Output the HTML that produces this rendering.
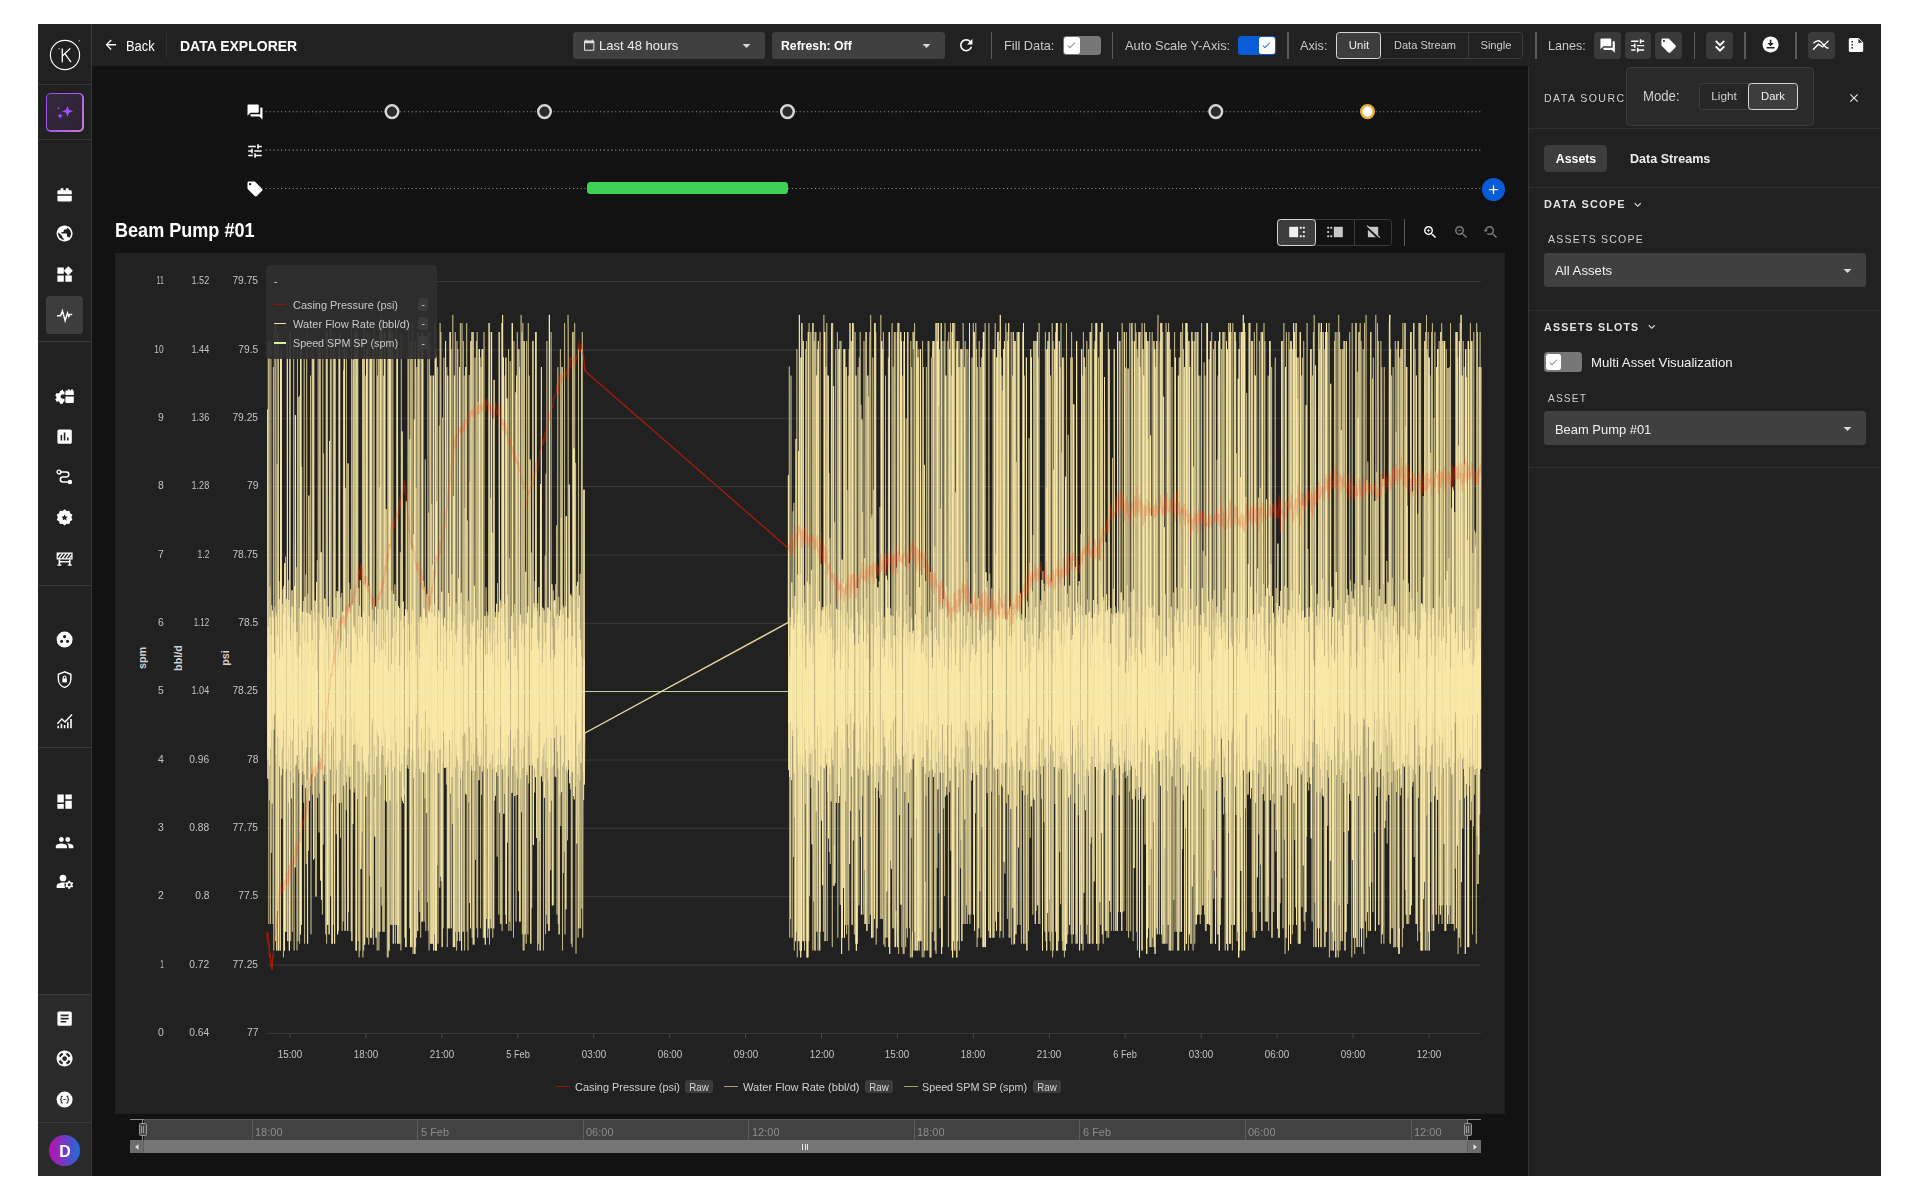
<!DOCTYPE html>
<html><head><meta charset="utf-8"><title>Data Explorer</title>
<style>
html,body{margin:0;padding:0;background:#fff;}
body{width:1920px;height:1200px;position:relative;overflow:hidden;font-family:"Liberation Sans", sans-serif;}
.a{position:absolute;}
.t{white-space:nowrap;line-height:1;}
svg{display:block;overflow:visible}
</style></head><body>
<div class="a" style="left:38.00px;top:24.00px;width:1843.00px;height:1152.00px;background:#121212;"></div>
<div class="a" style="left:38.00px;top:24.00px;width:53.50px;height:1152.00px;background:#212121;"></div>
<div class="a" style="left:91.30px;top:24.00px;width:1.00px;height:1152.00px;background:#383838;"></div>
<div class="a" style="left:92.30px;top:24.00px;width:1788.70px;height:42.00px;background:#212121;"></div>
<div class="a" style="left:1528.00px;top:66.00px;width:353.00px;height:1110.00px;background:#212121;"></div>
<div class="a" style="left:1527.60px;top:66.00px;width:1.00px;height:1110.00px;background:#333;"></div>
<svg class="a" style="left:46.7px;top:36.7px" width="36" height="36" viewBox="0 0 36 36" fill="none" stroke="#fff"><circle cx="18" cy="18" r="14.6" stroke-width="1.1"/><path d="M15.300 11.400V25.200M23.300 11.400L15.600 18.700M17.900 16.700L24 25.200" stroke-width="1.300"/><circle cx="12.200" cy="11.800" r="0.650" fill="#fff" stroke="none"/><circle cx="32.200" cy="3.800" r="0.700" fill="#bbb" stroke="none"/></svg>
<div class="a" style="left:38.00px;top:83.75px;width:53.00px;height:1.50px;background:#363636;"></div>
<div class="a" style="left:45.60px;top:92.80px;width:38.00px;height:39.00px;background:linear-gradient(120deg,#9a4cf5 0%,#a95be8 50%,#cc7fd2 100%);border-radius:5px;"></div>
<div class="a" style="left:47.10px;top:94.30px;width:35.00px;height:36.00px;background:linear-gradient(135deg,#35283f,#2b2431);border-radius:3.6px;"></div>
<svg class="a" style="left:52.55px;top:101.05px;" width="21.5" height="21.5" viewBox="0 0 24 24" fill="#a24dff"><path d="M16.2 5.2l1.6 4.6 4.6 1.6-4.6 1.6-1.6 4.6-1.6-4.6L10 11.4l4.600-1.600z"/><path d="M8 13.200l.9 2.500 2.500.9-2.500.9L8 20l-.9-2.500-2.500-.9 2.500-.9z"/><path d="M6.200 6.200l.5 1.300 1.300.5-1.300.5-.5 1.300-.5-1.300L4.400 8l1.300-.5z"/></svg>
<div class="a" style="left:38.00px;top:138.75px;width:53.00px;height:1.50px;background:#363636;"></div>
<div class="a" style="left:38.00px;top:341.00px;width:53.00px;height:1.00px;background:#383838;"></div>
<div class="a" style="left:38.00px;top:584.50px;width:53.00px;height:1.00px;background:#383838;"></div>
<div class="a" style="left:38.00px;top:747.00px;width:53.00px;height:1.00px;background:#383838;"></div>
<div class="a" style="left:38.00px;top:994.50px;width:53.30px;height:181.50px;background:#2a2a2a;"></div>
<div class="a" style="left:38.00px;top:994.00px;width:53.00px;height:1.00px;background:#3a3a3a;"></div>
<div class="a" style="left:38.00px;top:1121.70px;width:53.00px;height:1.00px;background:#3a3a3a;"></div>
<div class="a" style="left:45.80px;top:295.80px;width:37.40px;height:38.20px;background:#3d3d3d;border-radius:4px;"></div>
<svg class="a" style="left:55.10px;top:184.60px;" width="19.2" height="19.2" viewBox="0 0 24 24" fill="#fff"><path d="M7 4h3.500v2.500H13.500V4H17v2.500h2.500c.8 0 1.500.7 1.500 1.500v3.500H3V8c0-.8.7-1.500 1.500-1.500H7zM3 13.500h18V19c0 .8-.7 1.500-1.500 1.500h-15C3.700 20.500 3 19.800 3 19z"/></svg>
<svg class="a" style="left:55.10px;top:224.20px;" width="19.2" height="19.2" viewBox="0 0 24 24" fill="#fff"><path d="M12 2C6.48 2 2 6.48 2 12s4.48 10 10 10 10-4.48 10-10S17.52 2 12 2zm-1 17.93c-3.95-.49-7-3.85-7-7.93 0-.62.08-1.21.21-1.79L9 15v1c0 1.1.9 2 2 2v1.93zm6.9-2.54c-.26-.81-1-1.39-1.9-1.39h-1v-3c0-.55-.45-1-1-1H8v-2h2c.55 0 1-.45 1-1V7h2c1.1 0 2-.9 2-2v-.41c2.93 1.19 5 4.06 5 7.41 0 2.08-.8 3.97-2.1 5.39z"/></svg>
<svg class="a" style="left:55.10px;top:265.10px;" width="19.2" height="19.2" viewBox="0 0 24 24" fill="#fff"><path d="M13 13v8h8v-8h-8zM3 21h8v-8H3v8zM3 3v8h8V3H3zm13.66-1.31L11 7.34 16.66 13l5.66-5.66-5.66-5.65z"/></svg>
<svg class="a" style="left:55.10px;top:305.20px;" width="19.2" height="19.2" viewBox="0 0 24 24" fill="#fff"><path d="M2.500 13.500H7l2.300-6 3.400 12 3-9.500 1.600 4.200 1.200-2.200H21.500" fill="none" stroke="#fff" stroke-width="1.9" stroke-linejoin="miter" stroke-linecap="butt"/></svg>
<svg class="a" style="left:55.40px;top:386.70px;" width="19.2" height="19.2" viewBox="0 0 24 24" fill="#fff"><path d="M9.800 3.200l.5 2 .2.100c.5.200 1 .5 1.400.800V9.400H9.500a2.600 2.600 0 100 5.200h2.400v3.300c-.4.300-.9.600-1.400.800l-.2.100-.5 2H6.200l-.5-2c-.6-.200-1.100-.500-1.600-.900l-2 .6-1.800-3.100 1.500-1.400a6 6 0 010-1.900L.3 10.600l1.800-3.100 2 .6c.5-.4 1-.7 1.600-.9l.5-2z"/><path d="M14.500 4.500H16V3h2.500v1.500H20V3h2.500v1.500c.6 0 1 .4 1 1V10H13V5.500c0-.6.400-1 1-1zM13 11.800h10.500V19c0 .6-.4 1-1 1H14c-.6 0-1-.4-1-1z"/></svg>
<svg class="a" style="left:55.10px;top:427.30px;" width="19.2" height="19.2" viewBox="0 0 24 24" fill="#fff"><path d="M19 3H5c-1.1 0-2 .9-2 2v14c0 1.1.9 2 2 2h14c1.1 0 2-.9 2-2V5c0-1.1-.9-2-2-2zM9 17H7v-7h2v7zm4 0h-2V7h2v10zm4 0h-2v-4h2v4z"/></svg>
<svg class="a" style="left:55.10px;top:467.20px;" width="19.2" height="19.2" viewBox="0 0 24 24" fill="#fff"><path d="M6 6.300h8.200a3.100 3.100 0 010 6.200H9.800a3.100 3.100 0 000 6.200H17" fill="none" stroke="#fff" stroke-width="2"/><circle cx="5" cy="6.300" r="2.400" fill="none" stroke="#fff" stroke-width="1.700"/><circle cx="18.600" cy="18.700" r="2.900"/></svg>
<svg class="a" style="left:55.10px;top:508.30px;" width="19.2" height="19.2" viewBox="0 0 24 24" fill="#fff"><path fill-rule="evenodd" d="M12 1.500l2.600 2.200 3.400-.3 .9 3.300 2.900 1.800-1.300 3.200 1.300 3.200-2.900 1.800-.9 3.300-3.400-.3L12 22l-2.600-2.300-3.400.3-.9-3.300-2.900-1.800 1.300-3.200-1.300-3.200 2.900-1.800.9-3.300 3.400.3zM12 7.800l-1.200 2.700-2.900.3 2.200 1.900-.7 2.900 2.600-1.600 2.600 1.600-.7-2.900 2.200-1.900-2.900-.3z"/></svg>
<svg class="a" style="left:55.10px;top:548.50px;" width="19.2" height="19.2" viewBox="0 0 24 24" fill="#fff"><path fill-rule="evenodd" d="M2 4.500h20v8.500H2zM4 11.500l4.500-5.500H6.300L3.500 9.400v2.100zM8.300 11.500l4.500-5.500h-2.200l-4.500 5.500zM12.600 11.500l4.500-5.500h-2.200l-4.500 5.500zM16.900 11.500l3.600-4.400V6h-1.300l-4.500 5.500zM20.500 9.500l-1.600 2h1.600z"/><path d="M4.500 13h2v6.500h1.500v1.500h-5v-1.500h1.500zM17.500 13h2v6.500H21v1.500h-5v-1.500h1.500zM6.500 15h11v1.800h-11z"/></svg>
<svg class="a" style="left:55.10px;top:630.40px;" width="19.2" height="19.2" viewBox="0 0 24 24" fill="#fff"><path fill-rule="evenodd" d="M12 2a10 10 0 100 20 10 10 0 000-20zM12 6.200a2 2 0 110 4 2 2 0 010-4zM8.300 12.200a2 2 0 110 4 2 2 0 010-4zM15.700 12.200a2 2 0 110 4 2 2 0 010-4z"/></svg>
<svg class="a" style="left:55.10px;top:670.20px;" width="19.2" height="19.2" viewBox="0 0 24 24" fill="#fff"><path d="M12 2.300L4.200 5.300v6.200c0 4.700 3.300 9 7.800 10.200 4.500-1.200 7.800-5.500 7.800-10.200V5.300z" fill="none" stroke="#fff" stroke-width="1.800"/><path d="M9.200 10.500h5.600v5H9.200z"/><path d="M10.300 10.800V9.300a1.700 1.700 0 013.400 0v1.500" fill="none" stroke="#fff" stroke-width="1.300"/></svg>
<svg class="a" style="left:55.10px;top:711.00px;" width="19.2" height="19.2" viewBox="0 0 24 24" fill="#fff"><path d="M2.300 15.200l6.200-6.600 4 3.800 8.200-8.600 1.300 1.300-9.400 9.900-4-3.800-5 5.300z"/><path d="M3 18.500h2v3H3zM7 16h2v5.500H7zM11 17.500h2v4h-2zM15 14h2v7.500h-2zM19 10h2v11.500h-2z"/></svg>
<svg class="a" style="left:55.10px;top:791.70px;" width="19.2" height="19.2" viewBox="0 0 24 24" fill="#fff"><path d="M3 13h8V3H3v10zm0 8h8v-6H3v6zm10 0h8V11h-8v10zm0-18v6h8V3h-8z"/></svg>
<svg class="a" style="left:55.10px;top:832.60px;" width="19.2" height="19.2" viewBox="0 0 24 24" fill="#fff"><path d="M16 11c1.66 0 2.99-1.34 2.99-3S17.66 5 16 5c-1.66 0-3 1.34-3 3s1.34 3 3 3zm-8 0c1.66 0 2.99-1.34 2.99-3S9.66 5 8 5C6.34 5 5 6.34 5 8s1.34 3 3 3zm0 2c-2.33 0-7 1.17-7 3.5V19h14v-2.5c0-2.33-4.67-3.5-7-3.5zm8 0c-.29 0-.62.02-.97.05 1.16.84 1.97 1.97 1.97 3.45V19h6v-2.5c0-2.33-4.67-3.5-7-3.5z"/></svg>
<svg class="a" style="left:55.10px;top:872.30px;" width="19.2" height="19.2" viewBox="0 0 24 24" fill="#fff"><circle cx="10" cy="7.500" r="4.200"/><path d="M10 13.200c-3.300 0-8 1.500-8 4.300V20h10.700a6.300 6.300 0 01-.9-3.300c0-1.200.3-2.300 .9-3.200-.9-.2-1.900-.3-2.700-.3z"/><path fill-rule="evenodd" d="M22.800 17.400l-1.200-.7c.1-.500.1-1 0-1.400l1.200-.7-1.200-2.100-1.300.6c-.3-.3-.8-.6-1.200-.7L19 11h-2.400l-.2 1.400c-.4.100-.8.400-1.200.7l-1.300-.6-1.200 2.100 1.200.7c-.1.500-.1 1 0 1.400l-1.200.7 1.200 2.100 1.300-.6c.4.3.8.600 1.200.7l.2 1.400H19l.200-1.400c.4-.100.8-.4 1.200-.7l1.300.6zM17.800 17.800a1.800 1.800 0 110-3.600 1.800 1.800 0 010 3.600z"/></svg>
<svg class="a" style="left:55.10px;top:1008.90px;" width="19.2" height="19.2" viewBox="0 0 24 24" fill="#fff"><path d="M19 3H5c-1.1 0-2 .9-2 2v14c0 1.1.9 2 2 2h14c1.1 0 2-.9 2-2V5c0-1.1-.9-2-2-2zm-5 14H7v-2h7v2zm3-4H7v-2h10v2zm0-4H7V7h10v2z"/></svg>
<svg class="a" style="left:55.10px;top:1049.30px;" width="19.2" height="19.2" viewBox="0 0 24 24" fill="#fff"><path d="M12 2C6.48 2 2 6.48 2 12s4.48 10 10 10 10-4.48 10-10S17.52 2 12 2zm7.46 7.12l-2.78 1.15c-.51-1.36-1.58-2.44-2.95-2.94l1.15-2.78c2.1.8 3.77 2.47 4.58 4.57zM12 15c-1.66 0-3-1.34-3-3s1.34-3 3-3 3 1.34 3 3-1.34 3-3 3zM9.13 4.54l1.17 2.78c-1.38.5-2.47 1.59-2.98 2.97L4.54 9.13c.81-2.11 2.48-3.78 4.59-4.59zM4.54 14.87l2.78-1.15c.51 1.38 1.59 2.46 2.97 2.96l-1.17 2.78c-2.1-.81-3.77-2.48-4.58-4.59zm10.34 4.59l-1.15-2.78c1.37-.51 2.45-1.59 2.95-2.97l2.78 1.17c-.81 2.1-2.48 3.77-4.58 4.58z"/></svg>
<svg class="a" style="left:55.10px;top:1089.70px;" width="19.2" height="19.2" viewBox="0 0 24 24" fill="#fff"><path fill-rule="evenodd" d="M12 2a10 10 0 100 20 10 10 0 000-20zM9.800 7.200v1.200H9c-.3 0-.5.200-.5.500v1.600c0 .8-.4 1.300-1 1.500.6.200 1 .7 1 1.500v1.600c0 .3.200.5.500.5h.8v1.200H8.700c-.9 0-1.500-.6-1.500-1.500v-1.700c0-.6-.3-.9-.9-.9v-1.400c.6 0 .9-.3 .9-.9V8.700c0-.9.600-1.500 1.500-1.500zM14.200 7.200h1.100c.9 0 1.500.6 1.500 1.500v1.700c0 .6.300.9 .9.900v1.400c-.6 0-.9.300-.9.900v1.700c0 .9-.6 1.500-1.500 1.500h-1.100v-1.200h.8c.3 0 .5-.2.5-.5v-1.600c0-.8.400-1.300 1-1.500-.6-.2-1-.7-1-1.500V8.900c0-.3-.2-.5-.5-.5h-.8zM10 11.400h.9v1.200H10zM11.600 11.400h.9v1.200h-.9zM13.200 11.400h.9v1.200h-.9z"/></svg>
<div class="a" style="left:49.20px;top:1134.90px;width:30.80px;height:30.80px;background:linear-gradient(90deg,#b812b0 0%,#7a35c2 45%,#1a6fd8 100%);border-radius:16px;"></div>
<div class="a t" style="top:1143.00px;font-size:17px;color:#fff;font-weight:700;left:-235.40px;width:600px;text-align:center;transform:scaleX(0.9364);transform-origin:50% 50%;">D</div>
<svg class="a" style="left:103.25px;top:37.45px;" width="15.5" height="15.5" viewBox="0 0 24 24" fill="#fff"><path d="M20 11H7.83l5.59-5.59L12 4l-8 8 8 8 1.41-1.41L7.83 13H20v-2z"/></svg>
<div class="a t" style="top:38.86px;font-size:14px;color:#fff;left:126.30px;transform:scaleX(0.9221);transform-origin:0 50%;">Back</div>
<div class="a" style="left:166.20px;top:33.00px;width:1.00px;height:25.00px;background:#2e2e2e;"></div>
<div class="a t" style="top:38.57px;font-size:14.6px;color:#fff;font-weight:700;left:179.50px;transform:scaleX(0.9593);transform-origin:0 50%;">DATA EXPLORER</div>
<div class="a" style="left:572.80px;top:31.70px;width:192.00px;height:27.00px;background:#404040;border-radius:3.5px;"></div>
<svg class="a" style="left:583.00px;top:38.80px;" width="12.4" height="12.4" viewBox="0 0 24 24" fill="#e0e0e0"><path d="M20 3h-1V1h-2v2H7V1H5v2H4c-1.1 0-2 .9-2 2v16c0 1.1.9 2 2 2h16c1.1 0 2-.9 2-2V5c0-1.1-.9-2-2-2zm0 18H4V8h16v13z"/></svg>
<div class="a t" style="top:39.15px;font-size:13.4px;color:#eee;left:598.70px;transform:scaleX(0.9771);transform-origin:0 50%;">Last 48 hours</div>
<svg class="a" style="left:736.50px;top:35.90px;" width="19" height="19" viewBox="0 0 24 24" fill="#d8d8d8"><path d="M7 10l5 5 5-5z"/></svg>
<div class="a" style="left:772.20px;top:31.70px;width:172.80px;height:27.00px;background:#404040;border-radius:3.5px;"></div>
<div class="a t" style="top:39.15px;font-size:13.4px;color:#fff;font-weight:700;left:781.20px;transform:scaleX(0.9148);transform-origin:0 50%;">Refresh: Off</div>
<svg class="a" style="left:917.00px;top:35.90px;" width="19" height="19" viewBox="0 0 24 24" fill="#d8d8d8"><path d="M7 10l5 5 5-5z"/></svg>
<svg class="a" style="left:957.25px;top:35.55px;" width="18.5" height="18.5" viewBox="0 0 24 24" fill="#fff"><path d="M17.65 6.35C16.2 4.9 14.21 4 12 4c-4.42 0-7.99 3.58-7.99 8s3.57 8 7.99 8c3.73 0 6.84-2.55 7.73-6h-2.08c-.82 2.33-3.04 4-5.65 4-3.31 0-6-2.69-6-6s2.69-6 6-6c1.66 0 3.14.69 4.22 1.78L13 11h7V4l-2.35 2.35z"/></svg>
<div class="a" style="left:990.65px;top:32.00px;width:1.70px;height:26.70px;background:#5b5b5b;"></div>
<div class="a t" style="top:39.15px;font-size:13.4px;color:#c8c8c8;left:1003.80px;transform:scaleX(0.9538);transform-origin:0 50%;">Fill Data:</div>
<div class="a" style="left:1062.50px;top:35.50px;width:38.00px;height:19.50px;background:#777;border-radius:3.5px;"></div>
<div class="a" style="left:1063.90px;top:36.80px;width:15.80px;height:16.80px;background:#fff;border-radius:2.5px;"></div>
<svg class="a" style="left:1066.45px;top:39.95px;" width="10.5" height="10.5" viewBox="0 0 24 24" fill="#777"><path d="M9 16.17L4.83 12l-1.42 1.41L9 19 21 7l-1.410-1.410z"/></svg>
<div class="a" style="left:1111.65px;top:32.00px;width:1.70px;height:26.70px;background:#5b5b5b;"></div>
<div class="a t" style="top:39.15px;font-size:13.4px;color:#c8c8c8;left:1124.50px;transform:scaleX(0.9614);transform-origin:0 50%;">Auto Scale Y-Axis:</div>
<div class="a" style="left:1238.00px;top:35.50px;width:38.20px;height:19.50px;background:#0a5bd8;border-radius:3.5px;"></div>
<div class="a" style="left:1258.80px;top:36.80px;width:15.80px;height:16.80px;background:#fff;border-radius:2.5px;"></div>
<svg class="a" style="left:1261.45px;top:39.95px;" width="10.5" height="10.5" viewBox="0 0 24 24" fill="#0a5bd8"><path d="M9 16.17L4.83 12l-1.42 1.41L9 19 21 7l-1.410-1.410z"/></svg>
<div class="a" style="left:1287.45px;top:32.00px;width:1.70px;height:26.70px;background:#5b5b5b;"></div>
<div class="a t" style="top:39.15px;font-size:13.4px;color:#c8c8c8;left:1300.00px;transform:scaleX(0.9473);transform-origin:0 50%;">Axis:</div>
<div class="a" style="left:1335.80px;top:31.70px;width:187.70px;height:27.00px;border-radius:3.5px;border:1px solid #3c3c3c;box-sizing:border-box;"></div>
<div class="a" style="left:1467.50px;top:32.00px;width:1.00px;height:26.40px;background:#3c3c3c;"></div>
<div class="a" style="left:1335.80px;top:31.70px;width:45.60px;height:27.00px;background:#3d3d3d;border-radius:3.5px;border:1.2px solid #d6d6d6;box-sizing:border-box;"></div>
<div class="a t" style="top:39.13px;font-size:11.6px;color:#eee;left:1058.50px;width:600px;text-align:center;transform:scaleX(0.9842);transform-origin:50% 50%;">Unit</div>
<div class="a t" style="top:39.13px;font-size:11.6px;color:#ccc;left:1124.50px;width:600px;text-align:center;transform:scaleX(0.9525);transform-origin:50% 50%;">Data Stream</div>
<div class="a t" style="top:39.13px;font-size:11.6px;color:#ccc;left:1195.80px;width:600px;text-align:center;transform:scaleX(0.9679);transform-origin:50% 50%;">Single</div>
<div class="a" style="left:1535.15px;top:32.00px;width:1.70px;height:26.70px;background:#5b5b5b;"></div>
<div class="a t" style="top:39.15px;font-size:13.4px;color:#c8c8c8;left:1548.30px;transform:scaleX(0.9374);transform-origin:0 50%;">Lanes:</div>
<div class="a" style="left:1594.20px;top:32.00px;width:26.80px;height:26.60px;background:#3a3a3a;border-radius:4px;"></div>
<svg class="a" style="left:1598.95px;top:36.65px;" width="17.3" height="17.3" viewBox="0 0 24 24" fill="#fff"><path d="M21 6h-2v9H6v2c0 .55.45 1 1 1h11l4 4V7c0-.55-.45-1-1-1zm-4 6V3c0-.55-.45-1-1-1H3c-.55 0-1 .45-1 1v14l4-4h10c.55 0 1-.45 1-1z"/></svg>
<div class="a" style="left:1624.70px;top:32.00px;width:26.80px;height:26.60px;background:#3a3a3a;border-radius:4px;"></div>
<svg class="a" style="left:1629.45px;top:36.65px;" width="17.3" height="17.3" viewBox="0 0 24 24" fill="#fff"><path d="M3 17v2h6v-2H3zM3 5v2h10V5H3zm10 16v-2h8v-2h-8v-2h-2v6h2zM7 9v2H3v2h4v2h2V9H7zm14 4v-2H11v2h10zm-6-4h2V7h4V5h-4V3h-2v6z"/></svg>
<div class="a" style="left:1655.30px;top:32.00px;width:26.80px;height:26.60px;background:#3a3a3a;border-radius:4px;"></div>
<svg class="a" style="left:1660.05px;top:36.65px;" width="17.3" height="17.3" viewBox="0 0 24 24" fill="#fff"><path d="M21.41 11.58l-9-9C12.05 2.22 11.55 2 11 2H4c-1.1 0-2 .9-2 2v7c0 .55.22 1.05.59 1.42l9 9c.36.36.86.58 1.41.58.55 0 1.05-.22 1.41-.59l7-7c.37-.36.59-.86.59-1.41 0-.55-.23-1.06-.59-1.42zM5.5 7C4.67 7 4 6.33 4 5.5S4.67 4 5.5 4 7 4.67 7 5.5 6.33 7 5.5 7z"/></svg>
<div class="a" style="left:1693.55px;top:32.00px;width:1.70px;height:26.70px;background:#5b5b5b;"></div>
<div class="a" style="left:1706.30px;top:32.00px;width:26.80px;height:26.60px;background:#3a3a3a;border-radius:4px;"></div>
<svg class="a" style="left:1709.60px;top:37.60px" width="20" height="16" viewBox="-10.0 -8.0 20 16"><path d="M-4.300 -5.100L0 -0.800L4.300 -5.100M-4.300 0.300L0 4.600L4.300 0.300" fill="none" stroke="#fff" stroke-width="1.850"/></svg>
<div class="a" style="left:1744.35px;top:32.00px;width:1.70px;height:26.70px;background:#5b5b5b;"></div>
<svg class="a" style="left:1760.80px;top:35.40px;" width="19.2" height="19.2" viewBox="0 0 24 24" fill="#fff"><path d="M12 2C6.49 2 2 6.49 2 12s4.49 10 10 10 10-4.49 10-10S17.51 2 12 2zm-1 8V6h2v4h3l-4 4-4-4h3zm6 7H7v-2h10v2z"/></svg>
<div class="a" style="left:1794.95px;top:32.00px;width:1.70px;height:26.70px;background:#5b5b5b;"></div>
<div class="a" style="left:1808.00px;top:32.00px;width:26.80px;height:26.60px;background:#3a3a3a;border-radius:4px;"></div>
<svg class="a" style="left:1811.40px;top:37.30px" width="20" height="16" viewBox="-10.0 -8.0 20 16"><path d="M-7.600 -1.600C-5 -4.600 -2 -5.200 0.600 -2.400S4.600 3.100 7.600 3.200" fill="none" stroke="#fff" stroke-width="1.350"/><path d="M-8 4.800L-2.500 -0.800L1.500 1.800L7.600 -4.400" fill="none" stroke="#fff" stroke-width="1.350"/></svg>
<svg class="a" style="left:1846.20px;top:37.10px" width="20" height="16" viewBox="-10.0 -8.0 20 16"><path d="M-5.700 -7.100H2.700L7.200 -2.600V5.600a1.500 1.500 0 0 1 -1.500 1.500H-5.700a1.500 1.500 0 0 1 -1.500 -1.500V-5.600a1.500 1.500 0 0 1 1.500 -1.500z" fill="#fff"/><path d="M2.300 -6.300V-2.200H6.300z" fill="#2a2a2a"/><g fill="#3a3a3a"><rect x="-4.600" y="-4" width="1.600" height="1.600"/><rect x="-4.600" y="-1" width="1.600" height="1.600"/><rect x="-4.600" y="2" width="1.600" height="1.600"/></g></svg>
<svg class="a" style="left:0;top:0" width="1920" height="1200"><line x1="265.8" x2="1481.5" y1="111.8" y2="111.8" stroke="#969696" stroke-width="1.05" stroke-dasharray="1.05 2.79"/></svg>
<svg class="a" style="left:0;top:0" width="1920" height="1200"><line x1="265.8" x2="1481.5" y1="150.1" y2="150.1" stroke="#969696" stroke-width="1.05" stroke-dasharray="1.05 2.79"/></svg>
<svg class="a" style="left:0;top:0" width="1920" height="1200"><line x1="265.8" x2="1481.5" y1="188.4" y2="188.4" stroke="#969696" stroke-width="1.05" stroke-dasharray="1.05 2.79"/></svg>
<svg class="a" style="left:246.00px;top:103.00px;" width="18" height="18" viewBox="0 0 24 24" fill="#fff"><path d="M21 6h-2v9H6v2c0 .55.45 1 1 1h11l4 4V7c0-.55-.45-1-1-1zm-4 6V3c0-.55-.45-1-1-1H3c-.55 0-1 .45-1 1v14l4-4h10c.55 0 1-.45 1-1z"/></svg>
<svg class="a" style="left:246.00px;top:141.60px;" width="18" height="18" viewBox="0 0 24 24" fill="#fff"><path d="M3 17v2h6v-2H3zM3 5v2h10V5H3zm10 16v-2h8v-2h-8v-2h-2v6h2zM7 9v2H3v2h4v2h2V9H7zm14 4v-2H11v2h10zm-6-4h2V7h4V5h-4V3h-2v6z"/></svg>
<svg class="a" style="left:246.00px;top:179.60px;" width="18" height="18" viewBox="0 0 24 24" fill="#fff"><path d="M21.41 11.58l-9-9C12.05 2.22 11.55 2 11 2H4c-1.1 0-2 .9-2 2v7c0 .55.22 1.05.59 1.42l9 9c.36.36.86.58 1.41.58.55 0 1.05-.22 1.41-.59l7-7c.37-.36.59-.86.59-1.41 0-.55-.23-1.06-.59-1.42zM5.5 7C4.67 7 4 6.33 4 5.5S4.67 4 5.5 4 7 4.67 7 5.5 6.33 7 5.5 7z"/></svg>
<svg class="a" style="left:0;top:0" width="1920" height="1200"><circle cx="392" cy="111.600" r="6.300" fill="#2b2b2b" stroke="#d6d6d6" stroke-width="2.500"/><circle cx="544.5" cy="111.600" r="6.300" fill="#2b2b2b" stroke="#d6d6d6" stroke-width="2.500"/><circle cx="787.5" cy="111.600" r="6.300" fill="#2b2b2b" stroke="#d6d6d6" stroke-width="2.500"/><circle cx="1215.8" cy="111.600" r="6.300" fill="#2b2b2b" stroke="#d6d6d6" stroke-width="2.500"/><circle cx="1367.500" cy="111.600" r="6.300" fill="#fff" stroke="#e7ab3c" stroke-width="2.500"/></svg>
<div class="a" style="left:587.00px;top:182.20px;width:201.00px;height:12.00px;background:#3dd158;border-radius:3.5px;"></div>
<div class="a" style="left:1481.60px;top:177.50px;width:23.40px;height:23.40px;background:#0a5bd8;border-radius:12px;"></div>
<svg class="a" style="left:1485.80px;top:181.80px;" width="15" height="15" viewBox="0 0 24 24" fill="#fff"><path d="M19 13h-6v6h-2v-6H5v-2h6V5h2v6h6v2z"/></svg>
<div class="a t" style="top:220.73px;font-size:19.6px;color:#fff;font-weight:700;left:115.00px;transform:scaleX(0.9216);transform-origin:0 50%;">Beam Pump #01</div>
<div class="a" style="left:1277.20px;top:219.00px;width:115.20px;height:26.70px;border-radius:3.5px;border:1px solid #3c3c3c;box-sizing:border-box;"></div>
<div class="a" style="left:1353.70px;top:219.50px;width:1.00px;height:25.70px;background:#3c3c3c;"></div>
<div class="a" style="left:1277.20px;top:219.00px;width:39.00px;height:26.70px;background:#3d3d3d;border-radius:3.5px;border:1.2px solid #d6d6d6;box-sizing:border-box;"></div>
<svg class="a" style="left:1286.60px;top:224.20px" width="20" height="16" viewBox="-10.0 -8.0 20 16"><rect x="-7.800" y="-5.200" width="9" height="10.400" fill="#efefef"/><rect x="2.80" y="-5.20" width="1.9" height="1.9" fill="#efefef"/><rect x="5.90" y="-5.20" width="1.9" height="1.9" fill="#efefef"/><rect x="5.90" y="-0.95" width="1.9" height="1.9" fill="#efefef"/><rect x="2.80" y="3.30" width="1.9" height="1.9" fill="#efefef"/><rect x="5.90" y="3.30" width="1.9" height="1.9" fill="#efefef"/></svg>
<svg class="a" style="left:1324.80px;top:224.20px" width="20" height="16" viewBox="-10.0 -8.0 20 16"><rect x="-1.200" y="-5.200" width="9" height="10.400" fill="#c8c8c8"/><rect x="-4.70" y="-5.20" width="1.9" height="1.9" fill="#c8c8c8"/><rect x="-7.80" y="-5.20" width="1.9" height="1.9" fill="#c8c8c8"/><rect x="-7.80" y="-0.95" width="1.9" height="1.9" fill="#c8c8c8"/><rect x="-4.70" y="3.30" width="1.9" height="1.9" fill="#c8c8c8"/><rect x="-7.80" y="3.30" width="1.9" height="1.9" fill="#c8c8c8"/></svg>
<svg class="a" style="left:1363.40px;top:224.20px" width="20" height="16" viewBox="-10.0 -8.0 20 16"><rect x="-5.100" y="-5.200" width="10.300" height="10.400" fill="#c8c8c8"/><path d="M-6.800 -5.300L6.300 6.900" stroke="#141414" stroke-width="2.100" fill="none"/><path d="M-5.900 -6.300L6.900 5.700" stroke="#c8c8c8" stroke-width="1.150" fill="none"/></svg>
<div class="a" style="left:1403.55px;top:219.00px;width:1.70px;height:26.70px;background:#5b5b5b;"></div>
<svg class="a" style="left:1421.95px;top:224.35px;" width="16.5" height="16.5" viewBox="0 0 24 24" fill="#fff"><path d="M15.5 14h-.79l-.28-.27C15.41 12.59 16 11.11 16 9.5 16 5.91 13.09 3 9.5 3S3 5.91 3 9.5 5.91 16 9.5 16c1.61 0 3.09-.59 4.23-1.57l.27.28v.79l5 4.99L20.49 19l-4.99-5zm-6 0C7.01 14 5 11.99 5 9.5S7.01 5 9.5 5 14 7.01 14 9.5 11.99 14 9.5 14zm2.5-4h-2v2H9v-2H7V9h2V7h1v2h2v1z"/></svg>
<svg class="a" style="left:1452.55px;top:224.35px;" width="16.5" height="16.5" viewBox="0 0 24 24" fill="#7a7a7a"><path d="M15.5 14h-.79l-.28-.27C15.41 12.59 16 11.11 16 9.5 16 5.91 13.09 3 9.5 3S3 5.91 3 9.5 5.91 16 9.5 16c1.61 0 3.09-.59 4.23-1.57l.27.28v.79l5 4.99L20.49 19l-4.99-5zm-6 0C7.01 14 5 11.99 5 9.5S7.01 5 9.5 5 14 7.01 14 9.5 11.99 14 9.5 14zM7 9h5v1H7z"/></svg>
<svg class="a" style="left:1483.35px;top:224.35px;" width="16.5" height="16.5" viewBox="0 0 24 24" fill="#7a7a7a"><path d="M15.500 14h-.79l-.28-.27A6.470 6.470 0 0016 9.500 6.500 6.500 0 009.500 3C6.100 3 3.300 5.600 3 9h2c.3-2.300 2.200-4 4.500-4C11.990 5 14 7.010 14 9.500S11.990 14 9.500 14c-.9 0-1.800-.3-2.500-.8L5.600 14.600A6.500 6.500 0 0013.730 14.430l.27.280v.790l5 4.990L20.490 19z"/><path d="M.8 8.200h6.400L4 12z"/></svg>
<div class="a" style="left:115.00px;top:252.50px;width:1390.00px;height:861.50px;background:#212121;"></div>
<svg class="a" style="left:0;top:0" width="1920" height="1200" viewBox="0 0 1920 1200">
<line x1="267" x2="1481" y1="1033.4" y2="1033.4" stroke="#3b3b3b" stroke-width="1"/>
<line x1="267" x2="1481" y1="965.1" y2="965.1" stroke="#3b3b3b" stroke-width="1"/>
<line x1="267" x2="1481" y1="896.7" y2="896.7" stroke="#3b3b3b" stroke-width="1"/>
<line x1="267" x2="1481" y1="828.4" y2="828.4" stroke="#3b3b3b" stroke-width="1"/>
<line x1="267" x2="1481" y1="760.0" y2="760.0" stroke="#3b3b3b" stroke-width="1"/>
<line x1="267" x2="1481" y1="691.7" y2="691.7" stroke="#3b3b3b" stroke-width="1"/>
<line x1="267" x2="1481" y1="623.3" y2="623.3" stroke="#3b3b3b" stroke-width="1"/>
<line x1="267" x2="1481" y1="555.0" y2="555.0" stroke="#3b3b3b" stroke-width="1"/>
<line x1="267" x2="1481" y1="486.6" y2="486.6" stroke="#3b3b3b" stroke-width="1"/>
<line x1="267" x2="1481" y1="418.3" y2="418.3" stroke="#3b3b3b" stroke-width="1"/>
<line x1="267" x2="1481" y1="349.9" y2="349.9" stroke="#3b3b3b" stroke-width="1"/>
<line x1="267" x2="1481" y1="281.6" y2="281.6" stroke="#3b3b3b" stroke-width="1"/>
<line x1="290.0" x2="290.0" y1="1033.400" y2="1038" stroke="#4a4a4a" stroke-width="1"/>
<line x1="365.9" x2="365.9" y1="1033.400" y2="1038" stroke="#4a4a4a" stroke-width="1"/>
<line x1="441.9" x2="441.9" y1="1033.400" y2="1038" stroke="#4a4a4a" stroke-width="1"/>
<line x1="517.8" x2="517.8" y1="1033.400" y2="1038" stroke="#4a4a4a" stroke-width="1"/>
<line x1="593.7" x2="593.7" y1="1033.400" y2="1038" stroke="#4a4a4a" stroke-width="1"/>
<line x1="669.7" x2="669.7" y1="1033.400" y2="1038" stroke="#4a4a4a" stroke-width="1"/>
<line x1="745.6" x2="745.6" y1="1033.400" y2="1038" stroke="#4a4a4a" stroke-width="1"/>
<line x1="821.5" x2="821.5" y1="1033.400" y2="1038" stroke="#4a4a4a" stroke-width="1"/>
<line x1="897.4" x2="897.4" y1="1033.400" y2="1038" stroke="#4a4a4a" stroke-width="1"/>
<line x1="973.4" x2="973.4" y1="1033.400" y2="1038" stroke="#4a4a4a" stroke-width="1"/>
<line x1="1049.3" x2="1049.3" y1="1033.400" y2="1038" stroke="#4a4a4a" stroke-width="1"/>
<line x1="1125.2" x2="1125.2" y1="1033.400" y2="1038" stroke="#4a4a4a" stroke-width="1"/>
<line x1="1201.2" x2="1201.2" y1="1033.400" y2="1038" stroke="#4a4a4a" stroke-width="1"/>
<line x1="1277.1" x2="1277.1" y1="1033.400" y2="1038" stroke="#4a4a4a" stroke-width="1"/>
<line x1="1353.0" x2="1353.0" y1="1033.400" y2="1038" stroke="#4a4a4a" stroke-width="1"/>
<line x1="1429.0" x2="1429.0" y1="1033.400" y2="1038" stroke="#4a4a4a" stroke-width="1"/>
<defs><filter id="sb" x="0" y="0" width="100%" height="100%" filterUnits="userSpaceOnUse"><feGaussianBlur stdDeviation="0.38 0"/></filter></defs><g filter="url(#sb)"><polyline fill="none" stroke="rgba(150,24,9,0.5)" stroke-width="1.1" stroke-linejoin="bevel" points="267.0,932.0 267.4,940.4 267.8,933.3 268.3,944.7 268.7,941.8 269.1,944.7 269.5,957.6 270.0,953.0 270.4,955.4 270.8,962.1 271.2,967.1 271.6,965.1 272.1,970.0 272.5,959.1 272.9,957.9 273.3,953.6 273.8,945.7 274.2,940.9 274.6,936.4 275.0,938.8 275.4,935.0 275.9,930.3 276.3,928.0 276.7,917.6 277.1,919.2 277.6,916.6 278.0,914.8 278.4,903.6 278.8,901.6 279.2,890.2 279.7,893.0 280.1,882.0 280.5,884.9 280.9,895.6 281.3,880.1 281.8,892.9 282.2,890.2 282.6,886.7 283.0,889.5 283.5,889.2 283.9,890.9 284.3,884.5 284.7,882.2 285.1,881.6 285.6,879.2 286.0,882.8 286.4,878.8 286.8,886.6 287.3,872.7 287.7,875.6 288.1,875.4 288.5,868.8 288.9,885.4 289.4,864.6 289.8,872.8 290.2,870.3 290.6,878.7 291.1,860.9 291.5,873.2 291.9,863.7 292.3,864.9 292.7,861.2 293.2,865.7 293.6,856.3 294.0,859.6 294.4,860.2 294.9,865.4 295.3,844.9 295.7,861.2 296.1,857.2 296.5,849.4 297.0,851.5 297.4,846.2 297.8,853.9 298.2,845.6 298.7,841.8 299.1,839.9 299.5,838.2 299.9,836.4 300.3,831.4 300.8,842.8 301.2,823.1 301.6,813.6 302.0,827.5 302.4,825.5 302.9,826.0 303.3,821.6 303.7,820.0 304.1,820.3 304.6,821.3 305.0,813.1 305.4,810.9 305.8,818.7 306.2,809.7 306.7,800.3 307.1,812.6 307.5,803.1 307.9,794.3 308.4,789.1 308.8,793.1 309.2,785.5 309.6,781.8 310.0,778.2 310.5,779.1 310.9,783.8 311.3,774.3 311.7,767.1 312.2,774.9 312.6,772.1 313.0,775.4 313.4,776.8 313.8,770.5 314.3,770.4 314.7,770.7 315.1,765.7 315.5,773.6 316.0,776.6 316.4,771.0 316.8,769.0 317.2,768.7 317.6,766.2 318.1,766.0 318.5,767.6 318.9,765.4 319.3,767.1 319.8,761.8 320.2,770.3 320.6,768.8 321.0,763.2 321.4,757.9 321.9,768.0 322.3,769.9 322.7,757.1 323.1,753.7 323.5,748.8 324.0,749.8 324.4,738.2 324.8,742.2 325.2,731.8 325.7,732.8 326.1,724.3 326.5,718.6 326.9,708.4 327.3,707.4 327.8,704.8 328.2,704.4 328.6,698.0 329.0,689.2 329.5,689.7 329.9,687.8 330.3,679.6 330.7,675.8 331.1,673.5 331.6,676.4 332.0,672.7 332.4,663.6 332.8,667.0 333.3,660.6 333.7,656.9 334.1,663.4 334.5,659.0 334.9,649.6 335.4,650.7 335.8,650.1 336.2,642.5 336.6,642.3 337.1,643.4 337.5,629.9 337.9,636.9 338.3,636.2 338.7,632.7 339.2,621.9 339.6,626.9 340.0,619.1 340.4,625.0 340.9,624.6 341.3,622.3 341.7,617.4 342.1,617.6 342.5,623.5 343.0,615.1 343.4,620.8 343.8,620.4 344.2,616.3 344.6,627.7 345.1,616.7 345.5,625.5 345.9,606.2 346.3,604.7 346.8,618.6 347.2,616.5 347.6,611.7 348.0,612.3 348.4,603.5 348.9,608.6 349.3,606.3 349.7,609.4 350.1,613.5 350.6,608.0 351.0,607.8 351.4,601.3 351.8,600.8 352.2,601.5 352.7,598.1 353.1,603.3 353.5,592.0 353.9,602.8 354.4,588.2 354.8,595.7 355.2,585.7 355.6,594.9 356.0,586.4 356.5,585.9 356.9,585.8 357.3,577.9 357.7,574.4 358.2,568.3 358.6,581.2 359.0,570.9 359.4,569.7 359.8,570.5 360.3,579.5 360.7,563.7 361.1,573.6 361.5,571.6 362.0,576.7 362.4,567.1 362.8,574.4 363.2,580.9 363.6,585.0 364.1,586.1 364.5,576.0 364.9,581.0 365.3,581.2 365.7,576.5 366.2,577.1 366.6,587.9 367.0,586.5 367.4,585.7 367.9,592.8 368.3,583.7 368.7,591.5 369.1,590.1 369.5,590.7 370.0,594.1 370.4,593.6 370.8,595.0 371.2,595.9 371.7,604.4 372.1,595.2 372.5,602.1 372.9,601.2 373.3,597.8 373.8,603.9 374.2,597.4 374.6,607.4 375.0,599.3 375.5,600.1 375.9,603.1 376.3,604.7 376.7,604.4 377.1,603.7 377.6,598.0 378.0,594.0 378.4,600.1 378.8,598.3 379.3,592.0 379.7,600.0 380.1,595.9 380.5,590.0 380.9,595.7 381.4,587.0 381.8,588.4 382.2,592.5 382.6,581.1 383.1,585.7 383.5,576.8 383.9,583.6 384.3,574.4 384.7,575.8 385.2,565.6 385.6,568.2 386.0,571.4 386.4,566.6 386.8,553.7 387.3,563.5 387.7,560.7 388.1,552.4 388.5,557.9 389.0,544.1 389.4,545.9 389.8,548.6 390.2,546.9 390.6,544.2 391.1,530.9 391.5,525.2 391.9,532.3 392.3,522.5 392.8,527.0 393.2,520.4 393.6,529.6 394.0,527.1 394.4,524.6 394.9,520.8 395.3,519.6 395.7,516.7 396.1,518.4 396.6,516.4 397.0,516.0 397.4,510.6 397.8,519.7 398.2,511.1 398.7,514.7 399.1,513.1 399.5,501.8 399.9,496.8 400.4,508.7 400.8,499.9 401.2,500.7 401.6,497.8 402.0,498.2 402.5,490.8 402.9,494.4 403.3,491.4 403.7,492.0 404.2,480.2 404.6,493.1 405.0,489.5 405.4,484.1 405.8,492.6 406.3,500.0 406.7,506.6 407.1,507.8 407.5,518.0 407.9,515.8 408.4,515.2 408.8,520.6 409.2,531.0 409.6,528.8 410.1,539.1 410.5,542.0 410.9,542.2 411.3,546.2 411.7,542.9 412.2,545.8 412.6,545.3 413.0,547.3 413.4,545.1 413.9,551.8 414.3,551.6 414.7,552.1 415.1,561.0 415.5,563.6 416.0,561.2 416.4,570.1 416.8,569.4 417.2,571.1 417.7,564.9 418.1,562.1 418.5,572.5 418.9,572.6 419.3,575.7 419.8,575.5 420.2,580.5 420.6,574.7 421.0,580.2 421.5,574.4 421.9,569.2 422.3,578.9 422.7,589.0 423.1,576.0 423.6,589.5 424.0,583.1 424.4,585.7 424.8,589.0 425.3,591.1 425.7,587.1 426.1,593.4 426.5,596.1 426.9,599.2 427.4,593.4 427.8,605.1 428.2,608.0 428.6,611.6 429.0,596.0 429.5,604.1 429.9,596.3 430.3,604.7 430.7,602.8 431.2,592.4 431.6,587.7 432.0,593.0 432.4,592.2 432.8,583.1 433.3,582.8 433.7,569.9 434.1,575.4 434.5,576.5 435.0,573.8 435.4,577.6 435.8,562.6 436.2,554.9 436.6,564.3 437.1,557.0 437.5,559.2 437.9,559.3 438.3,556.9 438.8,558.8 439.2,556.6 439.6,541.1 440.0,546.5 440.4,553.9 440.9,541.3 441.3,545.6 441.7,539.2 442.1,535.7 442.6,542.8 443.0,538.6 443.4,530.9 443.8,534.3 444.2,522.4 444.7,523.2 445.1,528.2 445.5,520.1 445.9,510.9 446.4,513.5 446.8,508.8 447.2,508.8 447.6,503.1 448.0,493.4 448.5,488.2 448.9,485.6 449.3,480.9 449.7,484.3 450.1,481.2 450.6,477.3 451.0,470.2 451.4,464.6 451.8,466.9 452.3,458.5 452.7,458.4 453.1,447.0 453.5,449.8 453.9,455.4 454.4,441.6 454.8,436.7 455.2,440.9 455.6,448.4 456.1,446.6 456.5,437.7 456.9,436.4 457.3,437.3 457.7,432.9 458.2,436.5 458.6,434.2 459.0,428.1 459.4,431.4 459.9,432.1 460.3,428.6 460.7,426.7 461.1,435.1 461.5,438.8 462.0,428.2 462.4,426.8 462.8,430.2 463.2,426.2 463.7,422.9 464.1,431.9 464.5,420.2 464.9,420.9 465.3,420.4 465.8,418.6 466.2,420.8 466.6,423.7 467.0,426.8 467.5,422.6 467.9,419.0 468.3,412.4 468.7,417.0 469.1,412.3 469.6,415.4 470.0,419.4 470.4,415.7 470.8,413.7 471.2,411.0 471.7,414.1 472.1,414.5 472.5,409.6 472.9,411.3 473.4,417.4 473.8,405.7 474.2,411.0 474.6,407.6 475.0,419.6 475.5,415.1 475.9,414.5 476.3,413.8 476.7,413.1 477.2,412.9 477.6,404.3 478.0,412.4 478.4,413.7 478.8,404.4 479.3,414.4 479.7,413.4 480.1,403.4 480.5,407.9 481.0,408.5 481.4,407.3 481.8,411.2 482.2,403.5 482.6,408.0 483.1,409.9 483.5,411.9 483.9,408.7 484.3,407.2 484.8,411.2 485.2,398.9 485.6,411.9 486.0,406.1 486.4,401.6 486.9,405.1 487.3,398.9 487.7,398.2 488.1,406.2 488.6,404.5 489.0,411.5 489.4,404.5 489.8,402.9 490.2,404.7 490.7,417.0 491.1,409.6 491.5,407.0 491.9,405.6 492.3,405.3 492.8,409.8 493.2,412.7 493.6,416.3 494.0,416.5 494.5,412.8 494.9,408.9 495.3,408.2 495.7,402.0 496.1,408.0 496.6,414.8 497.0,411.6 497.4,415.1 497.8,407.6 498.3,418.0 498.7,415.5 499.1,414.6 499.5,416.5 499.9,404.9 500.4,413.5 500.8,413.2 501.2,426.6 501.6,418.8 502.1,418.6 502.5,425.9 502.9,418.5 503.3,430.9 503.7,422.5 504.2,426.6 504.6,424.0 505.0,432.9 505.4,420.7 505.9,434.8 506.3,429.2 506.7,434.4 507.1,430.1 507.5,437.5 508.0,438.4 508.4,441.4 508.8,441.3 509.2,443.8 509.7,446.6 510.1,441.5 510.5,439.1 510.9,439.8 511.3,449.7 511.8,446.1 512.2,453.7 512.6,450.3 513.0,446.7 513.4,456.4 513.9,462.2 514.3,453.8 514.7,451.5 515.1,453.1 515.6,462.0 516.0,456.5 516.4,458.5 516.8,464.5 517.2,462.6 517.7,464.2 518.1,462.4 518.5,463.1 518.9,467.9 519.4,469.0 519.8,472.1 520.2,468.6 520.6,474.2 521.0,476.6 521.5,476.7 521.9,480.7 522.3,484.4 522.7,482.6 523.2,483.9 523.6,481.0 524.0,488.6 524.4,488.5 524.8,489.4 525.3,488.8 525.7,497.0 526.1,507.7 526.5,499.9 527.0,500.2 527.4,500.8 527.8,494.9 528.2,496.8 528.6,492.1 529.1,490.9 529.5,493.6 529.9,492.3 530.3,489.5 530.8,485.2 531.2,488.7 531.6,481.3 532.0,488.4 532.4,482.1 532.9,482.4 533.3,484.7 533.7,482.4 534.1,472.8 534.5,476.2 535.0,477.7 535.4,469.9 535.8,462.7 536.2,472.0 536.7,470.8 537.1,471.4 537.5,467.4 537.9,465.0 538.3,463.0 538.8,465.6 539.2,459.0 539.6,456.8 540.0,450.1 540.5,455.4 540.9,447.9 541.3,450.5 541.7,436.1 542.1,445.2 542.6,442.1 543.0,438.9 543.4,445.2 543.8,439.6 544.3,435.6 544.7,432.3 545.1,441.6 545.5,434.9 545.9,433.0 546.4,425.0 546.8,432.8 547.2,427.8 547.6,422.6 548.1,421.7 548.5,413.3 548.9,422.0 549.3,412.6 549.7,419.8 550.2,412.5 550.6,410.2 551.0,413.1 551.4,411.0 551.9,403.5 552.3,406.7 552.7,408.3 553.1,403.0 553.5,396.6 554.0,400.1 554.4,395.3 554.8,395.6 555.2,396.9 555.6,395.0 556.1,392.8 556.5,384.9 556.9,392.4 557.3,388.4 557.8,386.0 558.2,387.1 558.6,393.5 559.0,377.6 559.4,374.7 559.9,383.9 560.3,376.0 560.7,384.8 561.1,373.9 561.6,375.5 562.0,380.8 562.4,380.5 562.8,377.8 563.2,377.2 563.7,373.9 564.1,371.9 564.5,372.3 564.9,378.3 565.4,375.1 565.8,371.4 566.2,372.1 566.6,373.8 567.0,374.7 567.5,368.2 567.9,367.8 568.3,369.0 568.7,378.6 569.2,367.4 569.6,371.3 570.0,358.1 570.4,368.0 570.8,357.2 571.3,357.9 571.7,359.1 572.1,360.6 572.5,361.3 573.0,361.3 573.4,359.9 573.8,356.2 574.2,369.0 574.6,358.4 575.1,358.9 575.5,364.2 575.9,358.7 576.3,356.2 576.7,354.3 577.2,360.4 577.6,346.5 578.0,346.3 578.4,350.5 578.9,340.0 579.3,344.8 579.7,352.6 580.1,345.2 580.5,348.6 581.0,351.7 581.4,344.1 581.8,351.2 582.2,347.9 582.7,346.6 583.1,351.5 583.5,356.5 583.9,359.0 584.3,361.8 585.0,371.0 788.0,548.0 788.4,550.6 788.8,543.5 789.3,548.6 789.7,552.0 790.1,547.7 790.5,555.3 791.0,537.6 791.4,543.8 791.8,537.9 792.2,536.8 792.6,540.5 793.1,542.8 793.5,543.7 793.9,543.8 794.3,555.3 794.8,545.2 795.2,527.5 795.6,539.6 796.0,533.3 796.4,533.5 796.9,545.8 797.3,534.5 797.7,521.9 798.1,537.2 798.6,532.5 799.0,525.8 799.4,527.7 799.8,530.0 800.2,534.4 800.7,531.8 801.1,535.5 801.5,548.0 801.9,529.8 802.3,529.9 802.8,534.0 803.2,543.6 803.6,531.2 804.0,546.4 804.5,527.4 804.9,529.5 805.3,536.6 805.7,531.1 806.1,533.0 806.6,540.7 807.0,542.8 807.4,538.7 807.8,536.2 808.3,547.7 808.7,541.3 809.1,537.1 809.5,547.4 809.9,532.8 810.4,540.5 810.8,544.1 811.2,539.6 811.6,535.9 812.1,542.5 812.5,536.5 812.9,536.3 813.3,533.5 813.7,550.0 814.2,537.4 814.6,549.8 815.0,544.9 815.4,540.9 815.9,547.9 816.3,545.7 816.7,545.2 817.1,535.2 817.5,545.8 818.0,552.1 818.4,549.8 818.8,553.8 819.2,557.8 819.7,550.8 820.1,562.2 820.5,538.3 820.9,547.8 821.3,532.3 821.8,556.2 822.2,551.7 822.6,563.3 823.0,549.5 823.4,539.0 823.9,563.2 824.3,545.9 824.7,547.5 825.1,556.2 825.6,562.9 826.0,556.1 826.4,562.0 826.8,548.6 827.2,575.0 827.7,563.5 828.1,565.8 828.5,570.2 828.9,568.3 829.4,569.6 829.8,562.8 830.2,569.6 830.6,574.5 831.0,579.9 831.5,572.8 831.9,575.4 832.3,577.7 832.7,579.8 833.2,577.7 833.6,574.9 834.0,573.6 834.4,585.5 834.8,580.1 835.3,578.7 835.7,603.3 836.1,585.6 836.5,585.9 837.0,581.4 837.4,573.7 837.8,589.2 838.2,581.1 838.6,582.6 839.1,589.8 839.5,590.2 839.9,585.2 840.3,584.2 840.8,599.2 841.2,588.9 841.6,578.2 842.0,591.1 842.4,587.4 842.9,587.0 843.3,592.0 843.7,589.3 844.1,602.0 844.5,589.1 845.0,589.2 845.4,595.4 845.8,583.1 846.2,593.9 846.7,586.1 847.1,594.6 847.5,580.1 847.9,588.8 848.3,574.4 848.8,582.3 849.2,585.3 849.6,588.4 850.0,598.5 850.5,597.3 850.9,574.9 851.3,578.7 851.7,592.5 852.1,586.6 852.6,573.8 853.0,586.5 853.4,575.0 853.8,576.6 854.3,573.6 854.7,580.4 855.1,597.7 855.5,584.3 855.9,580.7 856.4,598.8 856.8,577.7 857.2,579.6 857.6,578.6 858.1,583.1 858.5,577.7 858.9,589.8 859.3,577.4 859.7,583.1 860.2,580.5 860.6,572.7 861.0,571.6 861.4,577.8 861.9,561.9 862.3,577.7 862.7,577.9 863.1,578.1 863.5,576.3 864.0,579.1 864.4,573.9 864.8,580.6 865.2,564.5 865.6,582.0 866.1,569.2 866.5,578.5 866.9,571.6 867.3,571.6 867.8,568.8 868.2,583.5 868.6,566.3 869.0,565.2 869.4,574.9 869.9,574.9 870.3,573.1 870.7,565.9 871.1,567.8 871.6,578.4 872.0,564.6 872.4,575.8 872.8,576.4 873.2,572.0 873.7,562.3 874.1,583.9 874.5,571.2 874.9,571.4 875.4,567.2 875.8,562.9 876.2,567.4 876.6,570.4 877.0,562.9 877.5,569.3 877.9,576.3 878.3,571.1 878.7,567.1 879.2,574.8 879.6,573.7 880.0,573.3 880.4,561.2 880.8,553.8 881.3,571.8 881.7,566.4 882.1,563.2 882.5,568.9 883.0,562.1 883.4,560.7 883.8,577.3 884.2,553.4 884.6,570.1 885.1,571.1 885.5,576.2 885.9,565.5 886.3,567.2 886.7,557.2 887.2,563.7 887.6,548.7 888.0,559.3 888.4,562.9 888.9,562.3 889.3,559.5 889.7,570.9 890.1,551.6 890.5,563.5 891.0,559.6 891.4,562.6 891.8,562.6 892.2,575.6 892.7,554.5 893.1,571.2 893.5,571.5 893.9,560.7 894.3,557.2 894.8,552.8 895.2,555.3 895.6,575.4 896.0,546.0 896.5,564.1 896.9,556.0 897.3,573.9 897.7,562.8 898.1,551.1 898.6,556.8 899.0,561.6 899.4,561.0 899.8,553.5 900.3,557.9 900.7,556.6 901.1,563.0 901.5,561.4 901.9,560.9 902.4,555.1 902.8,564.5 903.2,554.9 903.6,552.9 904.1,555.5 904.5,556.1 904.9,556.1 905.3,544.6 905.7,567.4 906.2,562.1 906.6,566.8 907.0,554.7 907.4,562.5 907.8,558.5 908.3,557.2 908.7,569.4 909.1,552.6 909.5,560.5 910.0,544.3 910.4,560.2 910.8,554.9 911.2,548.9 911.6,551.9 912.1,541.2 912.5,548.6 912.9,557.2 913.3,537.6 913.8,563.5 914.2,562.8 914.6,550.8 915.0,545.7 915.4,546.3 915.9,547.1 916.3,550.8 916.7,571.2 917.1,548.1 917.6,561.3 918.0,564.7 918.4,549.4 918.8,554.1 919.2,560.7 919.7,551.4 920.1,564.7 920.5,571.0 920.9,555.7 921.4,550.3 921.8,560.2 922.2,558.7 922.6,551.9 923.0,557.0 923.5,559.3 923.9,563.1 924.3,568.3 924.7,557.7 925.2,552.8 925.6,551.4 926.0,576.4 926.4,561.4 926.8,562.2 927.3,583.1 927.7,574.5 928.1,583.1 928.5,567.0 928.9,564.2 929.4,566.1 929.8,575.2 930.2,574.3 930.6,575.0 931.1,588.8 931.5,583.3 931.9,567.0 932.3,578.5 932.7,580.3 933.2,571.8 933.6,594.0 934.0,585.0 934.4,590.0 934.9,576.5 935.3,573.0 935.7,587.0 936.1,581.2 936.5,579.3 937.0,583.5 937.4,586.4 937.8,586.8 938.2,585.1 938.7,590.6 939.1,608.5 939.5,597.3 939.9,586.4 940.3,605.1 940.8,588.3 941.2,581.8 941.6,583.8 942.0,580.1 942.5,603.3 942.9,588.4 943.3,587.0 943.7,593.9 944.1,597.3 944.6,590.9 945.0,596.5 945.4,601.4 945.8,606.8 946.3,596.5 946.7,608.0 947.1,606.8 947.5,609.7 947.9,603.0 948.4,599.4 948.8,615.2 949.2,612.8 949.6,603.5 950.0,602.3 950.5,612.2 950.9,621.0 951.3,608.9 951.7,623.6 952.2,607.6 952.6,607.4 953.0,607.9 953.4,611.7 953.8,593.0 954.3,604.1 954.7,611.5 955.1,591.2 955.5,603.4 956.0,606.5 956.4,612.8 956.8,611.3 957.2,599.6 957.6,613.9 958.1,591.1 958.5,588.6 958.9,607.4 959.3,602.3 959.8,589.2 960.2,604.4 960.6,602.5 961.0,601.1 961.4,592.4 961.9,586.1 962.3,582.8 962.7,592.7 963.1,592.7 963.6,589.8 964.0,589.1 964.4,599.1 964.8,584.2 965.2,586.5 965.7,605.3 966.1,586.4 966.5,586.0 966.9,597.5 967.4,578.9 967.8,605.0 968.2,586.6 968.6,591.8 969.0,590.6 969.5,594.9 969.9,598.5 970.3,612.2 970.7,607.2 971.1,618.6 971.6,614.1 972.0,599.7 972.4,608.4 972.8,603.7 973.3,604.8 973.7,608.5 974.1,610.0 974.5,610.3 974.9,592.0 975.4,605.7 975.8,603.3 976.2,619.4 976.6,604.4 977.1,605.7 977.5,605.7 977.9,611.0 978.3,597.2 978.7,604.2 979.2,604.1 979.6,604.9 980.0,603.3 980.4,601.4 980.9,605.9 981.3,596.0 981.7,616.8 982.1,605.4 982.5,592.8 983.0,603.7 983.4,612.4 983.8,604.4 984.2,604.8 984.7,589.8 985.1,616.1 985.5,606.5 985.9,592.3 986.3,603.1 986.8,616.6 987.2,609.1 987.6,596.0 988.0,602.6 988.5,608.4 988.9,621.3 989.3,608.5 989.7,612.1 990.1,604.6 990.6,606.9 991.0,599.2 991.4,596.7 991.8,596.1 992.2,601.3 992.7,614.0 993.1,604.6 993.5,613.0 993.9,609.8 994.4,605.1 994.8,600.2 995.2,618.6 995.6,611.2 996.0,611.7 996.5,620.2 996.9,613.0 997.3,603.7 997.7,604.5 998.2,605.5 998.6,617.1 999.0,593.8 999.4,588.5 999.8,598.2 1000.3,602.0 1000.7,598.2 1001.1,609.2 1001.5,607.2 1002.0,603.1 1002.4,604.2 1002.8,617.5 1003.2,618.5 1003.6,617.0 1004.1,602.4 1004.5,614.1 1004.9,597.6 1005.3,593.1 1005.8,618.5 1006.2,612.9 1006.6,611.9 1007.0,617.5 1007.4,619.5 1007.9,610.1 1008.3,610.4 1008.7,613.1 1009.1,615.0 1009.6,610.0 1010.0,599.1 1010.4,625.9 1010.8,602.8 1011.2,603.6 1011.7,611.8 1012.1,607.1 1012.5,610.9 1012.9,623.9 1013.3,616.8 1013.8,603.2 1014.2,608.6 1014.6,605.6 1015.0,614.7 1015.5,599.3 1015.9,598.6 1016.3,593.3 1016.7,608.5 1017.1,607.4 1017.6,609.5 1018.0,610.2 1018.4,595.5 1018.8,601.1 1019.3,595.9 1019.7,612.0 1020.1,608.9 1020.5,591.4 1020.9,604.1 1021.4,599.9 1021.8,598.6 1022.2,601.4 1022.6,591.0 1023.1,591.8 1023.5,588.0 1023.9,586.8 1024.3,582.8 1024.7,597.1 1025.2,591.8 1025.6,584.7 1026.0,573.5 1026.4,599.8 1026.9,582.8 1027.3,583.3 1027.7,586.1 1028.1,593.2 1028.5,578.6 1029.0,563.8 1029.4,577.8 1029.8,579.5 1030.2,575.2 1030.7,589.1 1031.1,575.3 1031.5,580.3 1031.9,571.9 1032.3,582.6 1032.8,572.0 1033.2,582.3 1033.6,577.1 1034.0,576.9 1034.4,577.6 1034.9,563.7 1035.3,571.4 1035.7,575.7 1036.1,571.1 1036.6,581.8 1037.0,579.2 1037.4,567.5 1037.8,580.5 1038.2,570.3 1038.7,575.4 1039.1,579.9 1039.5,563.9 1039.9,566.4 1040.4,572.1 1040.8,571.3 1041.2,561.6 1041.6,578.5 1042.0,575.4 1042.5,576.0 1042.9,577.2 1043.3,580.5 1043.7,570.1 1044.2,578.6 1044.6,573.7 1045.0,573.8 1045.4,571.5 1045.8,586.5 1046.3,561.3 1046.7,573.8 1047.1,584.1 1047.5,577.4 1048.0,575.5 1048.4,587.9 1048.8,574.4 1049.2,579.4 1049.6,584.7 1050.1,578.4 1050.5,578.0 1050.9,581.7 1051.3,587.7 1051.8,573.9 1052.2,583.7 1052.6,579.1 1053.0,576.7 1053.4,569.4 1053.9,590.4 1054.3,581.8 1054.7,579.3 1055.1,574.8 1055.5,587.9 1056.0,571.6 1056.4,568.7 1056.8,569.8 1057.2,574.6 1057.7,576.7 1058.1,560.1 1058.5,575.7 1058.9,575.1 1059.3,580.3 1059.8,570.1 1060.2,582.3 1060.6,585.6 1061.0,567.3 1061.5,568.9 1061.9,577.3 1062.3,578.5 1062.7,569.7 1063.1,577.4 1063.6,558.1 1064.0,575.3 1064.4,571.5 1064.8,574.3 1065.3,571.1 1065.7,572.1 1066.1,563.9 1066.5,576.4 1066.9,551.7 1067.4,567.8 1067.8,561.2 1068.2,578.9 1068.6,557.0 1069.1,565.4 1069.5,564.1 1069.9,569.5 1070.3,563.5 1070.7,555.7 1071.2,561.9 1071.6,570.7 1072.0,567.5 1072.4,556.9 1072.9,553.0 1073.3,552.5 1073.7,560.6 1074.1,560.0 1074.5,558.4 1075.0,557.0 1075.4,561.8 1075.8,569.5 1076.2,567.1 1076.6,556.8 1077.1,565.2 1077.5,557.7 1077.9,568.2 1078.3,566.2 1078.8,565.4 1079.2,574.2 1079.6,565.7 1080.0,564.6 1080.4,567.8 1080.9,550.5 1081.3,555.3 1081.7,554.9 1082.1,563.2 1082.6,557.2 1083.0,548.0 1083.4,551.2 1083.8,554.9 1084.2,552.8 1084.7,552.5 1085.1,545.1 1085.5,556.0 1085.9,545.7 1086.4,551.7 1086.8,549.8 1087.2,551.7 1087.6,563.6 1088.0,550.2 1088.5,550.1 1088.9,535.2 1089.3,546.1 1089.7,553.7 1090.2,549.5 1090.6,556.9 1091.0,549.0 1091.4,556.4 1091.8,552.3 1092.3,557.7 1092.7,547.9 1093.1,555.8 1093.5,545.9 1094.0,543.5 1094.4,556.6 1094.8,538.6 1095.2,541.5 1095.6,559.2 1096.1,548.6 1096.5,549.7 1096.9,548.3 1097.3,546.2 1097.7,560.0 1098.2,546.1 1098.6,555.5 1099.0,545.1 1099.4,539.4 1099.9,541.5 1100.3,542.8 1100.7,559.6 1101.1,536.4 1101.5,542.8 1102.0,528.0 1102.4,541.8 1102.8,536.1 1103.2,538.9 1103.7,535.8 1104.1,531.1 1104.5,533.9 1104.9,532.5 1105.3,538.9 1105.8,530.2 1106.2,528.8 1106.6,519.6 1107.0,533.9 1107.5,525.5 1107.9,519.3 1108.3,533.1 1108.7,530.2 1109.1,522.6 1109.6,522.1 1110.0,511.4 1110.4,503.1 1110.8,519.6 1111.3,507.2 1111.7,521.2 1112.1,513.2 1112.5,516.4 1112.9,509.9 1113.4,515.6 1113.8,517.2 1114.2,511.7 1114.6,515.6 1115.1,515.2 1115.5,508.2 1115.9,496.8 1116.3,512.6 1116.7,503.4 1117.2,499.8 1117.6,493.6 1118.0,493.6 1118.4,514.7 1118.8,517.3 1119.3,513.7 1119.7,518.0 1120.1,489.8 1120.5,508.0 1121.0,492.4 1121.4,492.3 1121.8,507.5 1122.2,510.3 1122.6,497.9 1123.1,493.4 1123.5,494.4 1123.9,504.6 1124.3,512.8 1124.8,521.2 1125.2,510.9 1125.6,501.1 1126.0,501.3 1126.4,509.8 1126.9,514.5 1127.3,496.4 1127.7,513.1 1128.1,507.3 1128.6,518.2 1129.0,501.2 1129.4,519.2 1129.8,521.9 1130.2,521.3 1130.7,521.7 1131.1,511.1 1131.5,510.4 1131.9,501.4 1132.4,508.4 1132.8,502.5 1133.2,511.8 1133.6,512.2 1134.0,505.5 1134.5,517.0 1134.9,496.0 1135.3,500.9 1135.7,516.3 1136.2,502.3 1136.6,509.1 1137.0,486.7 1137.4,515.3 1137.8,500.1 1138.3,500.6 1138.7,512.5 1139.1,506.3 1139.5,493.9 1139.9,515.8 1140.4,499.9 1140.8,504.3 1141.2,502.5 1141.6,504.2 1142.1,504.6 1142.5,505.4 1142.9,504.8 1143.3,525.9 1143.7,510.7 1144.2,513.1 1144.6,504.9 1145.0,522.0 1145.4,513.4 1145.9,510.6 1146.3,506.3 1146.7,516.1 1147.1,498.6 1147.5,506.1 1148.0,508.8 1148.4,514.0 1148.8,512.8 1149.2,501.5 1149.7,515.9 1150.1,508.5 1150.5,507.7 1150.9,512.2 1151.3,508.9 1151.8,507.9 1152.2,508.2 1152.6,515.5 1153.0,511.0 1153.5,512.1 1153.9,505.8 1154.3,518.5 1154.7,511.0 1155.1,504.9 1155.6,517.5 1156.0,500.3 1156.4,504.7 1156.8,515.2 1157.3,506.4 1157.7,507.1 1158.1,506.7 1158.5,509.2 1158.9,512.2 1159.4,513.1 1159.8,504.0 1160.2,505.2 1160.6,494.7 1161.0,504.9 1161.5,511.5 1161.9,508.3 1162.3,516.2 1162.7,506.0 1163.2,509.6 1163.6,513.6 1164.0,499.6 1164.4,516.9 1164.8,497.6 1165.3,505.3 1165.7,494.2 1166.1,504.9 1166.5,499.8 1167.0,513.3 1167.4,492.4 1167.8,509.6 1168.2,508.8 1168.6,510.0 1169.1,512.9 1169.5,511.7 1169.9,499.5 1170.3,509.9 1170.8,500.4 1171.2,500.7 1171.6,503.3 1172.0,501.7 1172.4,500.9 1172.9,512.1 1173.3,505.6 1173.7,492.3 1174.1,500.3 1174.6,502.6 1175.0,522.1 1175.4,508.4 1175.8,503.4 1176.2,510.5 1176.7,491.8 1177.1,518.7 1177.5,506.0 1177.9,502.1 1178.4,514.8 1178.8,503.9 1179.2,502.1 1179.6,515.7 1180.0,524.1 1180.5,508.3 1180.9,510.5 1181.3,510.6 1181.7,514.6 1182.1,509.2 1182.6,513.3 1183.0,507.3 1183.4,512.2 1183.8,519.1 1184.3,503.3 1184.7,519.1 1185.1,526.4 1185.5,510.1 1185.9,512.5 1186.4,516.2 1186.8,515.5 1187.2,508.6 1187.6,522.2 1188.1,521.1 1188.5,524.2 1188.9,522.4 1189.3,513.6 1189.7,517.1 1190.2,514.2 1190.6,536.7 1191.0,516.5 1191.4,525.6 1191.9,530.1 1192.3,519.1 1192.7,521.5 1193.1,522.7 1193.5,531.0 1194.0,511.6 1194.4,521.9 1194.8,523.0 1195.2,523.1 1195.7,514.4 1196.1,526.3 1196.5,523.3 1196.9,513.1 1197.3,512.7 1197.8,533.7 1198.2,515.7 1198.6,509.1 1199.0,522.8 1199.5,512.4 1199.9,519.8 1200.3,523.4 1200.7,513.6 1201.1,510.3 1201.6,532.8 1202.0,510.9 1202.4,511.9 1202.8,519.8 1203.2,522.9 1203.7,519.4 1204.1,513.8 1204.5,526.2 1204.9,512.3 1205.4,514.3 1205.8,524.5 1206.2,527.0 1206.6,523.1 1207.0,526.2 1207.5,522.7 1207.9,525.5 1208.3,515.1 1208.7,514.9 1209.2,523.9 1209.6,526.9 1210.0,517.1 1210.4,514.8 1210.8,519.0 1211.3,527.4 1211.7,519.4 1212.1,518.2 1212.5,518.9 1213.0,517.9 1213.4,523.5 1213.8,517.1 1214.2,520.8 1214.6,518.4 1215.1,514.6 1215.5,520.2 1215.9,522.0 1216.3,508.1 1216.8,521.6 1217.2,521.6 1217.6,519.1 1218.0,512.8 1218.4,515.5 1218.9,524.6 1219.3,513.9 1219.7,526.8 1220.1,517.2 1220.6,522.4 1221.0,499.4 1221.4,523.7 1221.8,521.2 1222.2,508.9 1222.7,526.8 1223.1,516.7 1223.5,511.9 1223.9,529.5 1224.3,529.5 1224.8,527.2 1225.2,525.8 1225.6,527.8 1226.0,508.0 1226.5,519.0 1226.9,529.6 1227.3,524.0 1227.7,520.9 1228.1,518.3 1228.6,517.7 1229.0,514.8 1229.4,519.3 1229.8,500.6 1230.3,527.2 1230.7,520.1 1231.1,500.3 1231.5,520.1 1231.9,521.5 1232.4,519.2 1232.8,524.7 1233.2,525.4 1233.6,524.0 1234.1,508.1 1234.5,504.9 1234.9,514.2 1235.3,525.6 1235.7,506.4 1236.2,515.7 1236.6,515.2 1237.0,518.1 1237.4,508.0 1237.9,522.8 1238.3,517.0 1238.7,525.1 1239.1,519.6 1239.5,518.4 1240.0,525.5 1240.4,527.4 1240.8,521.9 1241.2,513.3 1241.7,520.6 1242.1,525.4 1242.5,523.4 1242.9,529.2 1243.3,525.9 1243.8,515.2 1244.2,532.4 1244.6,522.5 1245.0,522.4 1245.4,518.9 1245.9,508.9 1246.3,503.5 1246.7,521.8 1247.1,524.1 1247.6,528.7 1248.0,511.1 1248.4,516.2 1248.8,513.3 1249.2,521.2 1249.7,511.4 1250.1,510.8 1250.5,506.2 1250.9,515.1 1251.4,523.0 1251.8,507.7 1252.2,513.0 1252.6,525.8 1253.0,510.4 1253.5,501.4 1253.9,509.1 1254.3,521.2 1254.7,515.7 1255.2,509.0 1255.6,510.8 1256.0,523.8 1256.4,505.6 1256.8,524.7 1257.3,512.1 1257.7,518.8 1258.1,507.4 1258.5,508.6 1259.0,531.2 1259.4,513.4 1259.8,507.6 1260.2,517.9 1260.6,509.4 1261.1,507.3 1261.5,508.0 1261.9,510.2 1262.3,523.2 1262.8,502.4 1263.2,516.6 1263.6,502.3 1264.0,517.6 1264.4,509.9 1264.9,517.7 1265.3,511.5 1265.7,519.7 1266.1,517.9 1266.5,515.9 1267.0,517.4 1267.4,509.6 1267.8,510.2 1268.2,507.2 1268.7,516.5 1269.1,515.1 1269.5,511.3 1269.9,504.4 1270.3,511.7 1270.8,515.4 1271.2,517.4 1271.6,507.5 1272.0,516.7 1272.5,503.2 1272.9,508.4 1273.3,504.0 1273.7,512.8 1274.1,504.9 1274.6,505.9 1275.0,518.1 1275.4,518.0 1275.8,499.1 1276.3,518.0 1276.7,516.4 1277.1,516.8 1277.5,507.1 1277.9,519.5 1278.4,514.2 1278.8,500.6 1279.2,495.1 1279.6,502.5 1280.1,512.9 1280.5,532.2 1280.9,500.1 1281.3,512.8 1281.7,510.2 1282.2,510.2 1282.6,513.5 1283.0,516.0 1283.4,509.3 1283.9,520.9 1284.3,514.1 1284.7,516.7 1285.1,516.8 1285.5,501.6 1286.0,519.4 1286.4,501.6 1286.8,508.9 1287.2,505.9 1287.6,501.5 1288.1,506.9 1288.5,496.7 1288.9,511.3 1289.3,506.3 1289.8,502.1 1290.2,507.9 1290.6,508.8 1291.0,505.5 1291.4,493.2 1291.9,509.3 1292.3,508.0 1292.7,519.6 1293.1,521.9 1293.6,513.8 1294.0,509.4 1294.4,508.3 1294.8,502.2 1295.2,502.4 1295.7,499.1 1296.1,499.8 1296.5,498.5 1296.9,513.3 1297.4,516.4 1297.8,484.4 1298.2,504.1 1298.6,489.3 1299.0,493.8 1299.5,502.3 1299.9,501.6 1300.3,525.2 1300.7,503.9 1301.2,496.9 1301.6,492.3 1302.0,506.4 1302.4,497.1 1302.8,499.8 1303.3,492.8 1303.7,510.5 1304.1,505.4 1304.5,510.2 1305.0,498.2 1305.4,502.4 1305.8,499.2 1306.2,494.4 1306.6,505.6 1307.1,488.6 1307.5,496.6 1307.9,492.0 1308.3,501.3 1308.7,490.0 1309.2,498.9 1309.6,493.6 1310.0,496.0 1310.4,496.0 1310.9,512.4 1311.3,491.7 1311.7,506.8 1312.1,495.0 1312.5,517.9 1313.0,498.6 1313.4,503.9 1313.8,486.7 1314.2,506.6 1314.7,495.1 1315.1,490.0 1315.5,495.5 1315.9,506.3 1316.3,490.2 1316.8,495.5 1317.2,502.1 1317.6,500.9 1318.0,486.4 1318.5,482.0 1318.9,499.5 1319.3,495.8 1319.7,497.3 1320.1,498.6 1320.6,491.7 1321.0,495.8 1321.4,486.5 1321.8,488.5 1322.3,490.9 1322.7,485.4 1323.1,487.9 1323.5,500.4 1323.9,487.9 1324.4,494.0 1324.8,489.6 1325.2,478.6 1325.6,492.3 1326.1,473.6 1326.5,489.3 1326.9,485.4 1327.3,479.8 1327.7,490.4 1328.2,482.2 1328.6,498.8 1329.0,472.3 1329.4,494.5 1329.8,491.3 1330.3,487.4 1330.7,475.4 1331.1,474.8 1331.5,468.6 1332.0,484.9 1332.4,481.1 1332.8,489.1 1333.2,484.1 1333.6,486.5 1334.1,470.8 1334.5,482.8 1334.9,484.5 1335.3,488.9 1335.8,462.9 1336.2,489.2 1336.6,468.6 1337.0,482.1 1337.4,483.1 1337.9,496.7 1338.3,486.1 1338.7,482.9 1339.1,476.8 1339.6,476.2 1340.0,473.3 1340.4,481.4 1340.8,477.3 1341.2,491.9 1341.7,476.3 1342.1,489.5 1342.5,482.7 1342.9,478.4 1343.4,485.4 1343.8,471.6 1344.2,487.4 1344.6,484.9 1345.0,481.5 1345.5,487.4 1345.9,489.6 1346.3,492.8 1346.7,486.7 1347.2,482.7 1347.6,490.3 1348.0,473.7 1348.4,498.4 1348.8,484.7 1349.3,490.1 1349.7,498.3 1350.1,482.7 1350.5,485.4 1350.9,489.7 1351.4,482.2 1351.8,496.2 1352.2,476.5 1352.6,485.9 1353.1,491.4 1353.5,490.9 1353.9,485.7 1354.3,500.1 1354.7,499.7 1355.2,490.4 1355.6,495.4 1356.0,481.3 1356.4,497.0 1356.9,492.1 1357.3,495.7 1357.7,494.9 1358.1,492.2 1358.5,489.8 1359.0,480.0 1359.4,477.9 1359.8,481.2 1360.2,495.6 1360.7,491.1 1361.1,485.6 1361.5,485.0 1361.9,494.9 1362.3,489.3 1362.8,501.0 1363.2,487.2 1363.6,482.6 1364.0,475.0 1364.5,484.2 1364.9,492.6 1365.3,479.5 1365.7,494.4 1366.1,494.3 1366.6,481.1 1367.0,492.7 1367.4,480.0 1367.8,490.6 1368.3,486.4 1368.7,494.2 1369.1,482.4 1369.5,488.3 1369.9,493.3 1370.4,486.1 1370.8,486.9 1371.2,484.3 1371.6,496.7 1372.0,491.3 1372.5,494.9 1372.9,495.8 1373.3,493.0 1373.7,492.5 1374.2,485.3 1374.6,489.2 1375.0,493.1 1375.4,480.1 1375.8,481.7 1376.3,493.6 1376.7,500.3 1377.1,491.6 1377.5,488.1 1378.0,497.8 1378.4,494.2 1378.8,496.9 1379.2,492.4 1379.6,488.1 1380.1,492.0 1380.5,496.4 1380.9,493.3 1381.3,474.4 1381.8,497.0 1382.2,481.9 1382.6,476.3 1383.0,475.8 1383.4,486.4 1383.9,467.8 1384.3,474.8 1384.7,484.3 1385.1,487.5 1385.6,493.6 1386.0,482.6 1386.4,477.1 1386.8,476.4 1387.2,486.9 1387.7,482.1 1388.1,483.2 1388.5,475.9 1388.9,474.5 1389.4,475.7 1389.8,481.5 1390.2,482.2 1390.6,490.0 1391.0,484.0 1391.5,480.0 1391.9,487.4 1392.3,468.4 1392.7,473.2 1393.1,482.5 1393.6,484.6 1394.0,478.6 1394.4,467.7 1394.8,468.0 1395.3,479.3 1395.7,480.8 1396.1,463.4 1396.5,474.0 1396.9,476.4 1397.4,484.0 1397.8,484.2 1398.2,473.3 1398.6,469.5 1399.1,474.6 1399.5,471.4 1399.9,470.5 1400.3,479.9 1400.7,475.4 1401.2,457.1 1401.6,474.7 1402.0,478.2 1402.4,466.0 1402.9,486.3 1403.3,479.0 1403.7,477.0 1404.1,473.5 1404.5,484.9 1405.0,485.8 1405.4,473.5 1405.8,462.7 1406.2,488.4 1406.7,479.2 1407.1,466.3 1407.5,489.1 1407.9,463.7 1408.3,477.8 1408.8,472.1 1409.2,473.2 1409.6,484.0 1410.0,500.5 1410.5,478.8 1410.9,494.4 1411.3,479.7 1411.7,478.5 1412.1,485.9 1412.6,472.0 1413.0,496.2 1413.4,478.8 1413.8,474.1 1414.2,483.2 1414.7,481.9 1415.1,478.3 1415.5,486.4 1415.9,494.7 1416.4,481.9 1416.8,478.3 1417.2,490.0 1417.6,490.3 1418.0,478.0 1418.5,481.5 1418.9,476.7 1419.3,472.3 1419.7,488.1 1420.2,485.9 1420.6,492.4 1421.0,494.7 1421.4,462.9 1421.8,472.5 1422.3,480.1 1422.7,494.1 1423.1,481.1 1423.5,487.2 1424.0,475.0 1424.4,489.9 1424.8,490.6 1425.2,489.9 1425.6,486.8 1426.1,477.2 1426.5,492.6 1426.9,474.9 1427.3,473.5 1427.8,474.0 1428.2,480.4 1428.6,488.4 1429.0,479.3 1429.4,482.6 1429.9,478.2 1430.3,483.3 1430.7,479.7 1431.1,470.5 1431.6,497.6 1432.0,485.1 1432.4,485.4 1432.8,483.0 1433.2,474.7 1433.7,478.1 1434.1,484.1 1434.5,488.2 1434.9,482.6 1435.3,475.0 1435.8,477.8 1436.2,472.0 1436.6,476.6 1437.0,478.0 1437.5,474.9 1437.9,481.9 1438.3,494.0 1438.7,475.4 1439.1,469.1 1439.6,474.9 1440.0,487.8 1440.4,472.4 1440.8,487.4 1441.3,488.0 1441.7,478.0 1442.1,469.8 1442.5,483.3 1442.9,473.7 1443.4,480.6 1443.8,493.3 1444.2,482.3 1444.6,467.0 1445.1,479.8 1445.5,472.6 1445.9,492.8 1446.3,482.5 1446.7,476.0 1447.2,481.2 1447.6,478.8 1448.0,473.4 1448.4,471.3 1448.9,479.9 1449.3,475.2 1449.7,478.0 1450.1,484.1 1450.5,487.8 1451.0,474.5 1451.4,481.5 1451.8,471.8 1452.2,464.3 1452.7,486.2 1453.1,489.8 1453.5,474.5 1453.9,470.2 1454.3,466.7 1454.8,475.7 1455.2,483.8 1455.6,480.5 1456.0,467.7 1456.4,478.7 1456.9,466.5 1457.3,474.5 1457.7,479.2 1458.1,479.0 1458.6,462.8 1459.0,470.6 1459.4,475.2 1459.8,478.8 1460.2,472.3 1460.7,479.0 1461.1,484.2 1461.5,463.7 1461.9,476.8 1462.4,491.2 1462.8,476.4 1463.2,473.1 1463.6,482.6 1464.0,481.0 1464.5,475.2 1464.9,457.0 1465.3,473.1 1465.7,474.9 1466.2,476.8 1466.6,483.7 1467.0,461.2 1467.4,464.6 1467.8,473.3 1468.3,478.9 1468.7,467.9 1469.1,466.2 1469.5,475.6 1470.0,473.7 1470.4,479.1 1470.8,471.8 1471.2,475.5 1471.6,461.8 1472.1,476.5 1472.5,476.3 1472.9,471.2 1473.3,464.6 1473.8,484.6 1474.2,479.9 1474.6,472.4 1475.0,480.0 1475.4,486.3 1475.9,471.4 1476.3,484.2 1476.7,479.1 1477.1,472.0 1477.5,472.0 1478.0,483.3 1478.4,481.8 1478.8,478.9 1479.2,468.1 1479.7,471.4 1480.1,474.3 1480.5,464.6 1480.9,463.7"/>
<polyline fill="none" stroke="#fbeaa8" stroke-width="0.5" stroke-linejoin="bevel" points="267.5,409.6 267.9,778.7 268.3,341.0 268.8,924.0 269.2,341.0 269.6,800.4 270.0,586.6 270.5,924.0 270.9,341.0 271.3,852.8 271.7,605.3 272.1,803.4 272.6,610.6 273.0,924.0 273.4,367.0 273.8,950.5 274.3,332.0 274.7,332.0 275.1,323.0 275.5,941.1 275.9,323.0 276.4,616.3 276.8,950.5 277.2,464.1 277.6,911.0 278.1,332.0 278.5,950.5 278.9,581.1 279.3,765.3 279.7,599.3 280.2,950.5 280.6,357.6 281.0,775.3 281.4,349.1 281.8,818.7 282.3,604.3 282.7,768.7 283.1,589.2 283.5,957.4 284.0,585.9 284.4,950.5 284.8,563.2 285.2,931.7 285.6,556.7 286.1,931.7 286.5,598.8 286.9,769.3 287.3,341.0 287.8,941.1 288.2,580.2 288.6,802.5 289.0,600.1 289.4,950.5 289.9,332.0 290.3,349.1 290.7,941.1 291.1,617.2 291.6,798.3 292.0,590.4 292.4,931.7 292.8,606.9 293.2,782.8 293.7,341.0 294.1,950.5 294.5,586.1 294.9,867.3 295.4,415.2 295.8,765.4 296.2,567.2 296.6,849.1 297.0,950.5 297.5,349.1 297.9,941.1 298.3,397.1 298.7,769.1 299.2,608.1 299.6,943.7 300.0,395.8 300.4,934.3 300.8,341.0 301.3,924.9 301.7,467.0 302.1,785.0 302.5,611.8 302.9,771.6 303.4,601.0 303.8,802.6 304.2,357.6 304.6,943.7 305.1,596.9 305.5,787.8 305.9,574.5 306.3,864.0 306.7,332.0 307.2,779.7 307.6,943.7 308.0,593.8 308.4,850.7 308.9,495.6 309.3,800.6 309.7,614.0 310.1,785.8 310.5,375.6 311.0,934.3 311.4,610.4 311.8,773.9 312.2,341.0 312.7,794.6 313.1,357.6 313.5,859.7 313.9,358.6 314.3,858.4 314.8,600.3 315.2,777.3 315.6,601.1 316.0,896.5 316.5,582.2 316.9,772.4 317.3,560.3 317.7,797.9 318.1,341.0 318.6,535.8 319.0,832.5 319.4,341.0 319.8,793.3 320.3,341.0 320.7,880.5 321.1,552.4 321.5,899.8 321.9,618.0 322.4,914.6 322.8,349.1 323.2,844.5 323.6,453.5 324.0,765.3 324.5,598.7 324.9,781.1 325.3,598.9 325.7,934.3 326.2,332.0 326.6,943.7 327.0,332.0 327.4,924.9 327.8,606.7 328.3,924.9 328.7,616.8 329.1,934.3 329.5,441.0 330.0,768.9 330.4,323.0 330.8,896.2 331.2,323.0 331.6,803.1 332.1,943.7 332.5,617.1 332.9,924.9 333.3,349.1 333.8,794.9 334.2,332.0 334.6,943.7 335.0,357.6 335.4,793.4 335.9,598.1 336.3,834.2 336.7,770.9 337.1,591.1 337.6,934.3 338.0,591.7 338.4,930.9 338.8,341.0 339.2,803.1 339.7,332.0 340.1,609.8 340.5,837.9 340.9,597.5 341.4,802.5 341.8,593.0 342.2,930.9 342.6,618.1 343.0,921.5 343.5,370.5 343.9,785.6 344.3,349.1 344.7,775.3 345.1,930.9 345.6,488.2 346.0,810.2 346.4,341.0 346.8,782.2 347.3,611.2 347.7,930.9 348.1,463.4 348.5,912.1 348.9,582.7 349.4,776.9 349.8,612.9 350.2,789.5 350.6,589.2 351.1,931.7 351.5,323.0 351.9,941.1 352.3,605.4 352.7,824.0 353.2,359.4 353.6,613.0 354.0,792.5 354.4,332.0 354.9,788.4 355.3,332.0 355.7,950.5 356.1,323.0 356.5,950.5 357.0,341.0 357.4,799.0 357.8,332.0 358.2,941.1 358.7,588.2 359.1,957.4 359.5,605.9 359.9,950.5 360.3,580.3 360.8,869.0 361.2,818.5 361.6,617.1 362.0,831.8 362.5,357.6 362.9,957.4 363.3,357.6 363.7,950.5 364.1,323.0 364.6,944.6 365.0,584.3 365.4,772.4 365.8,375.6 366.2,796.5 366.7,349.1 367.1,937.7 367.5,332.0 367.9,782.3 368.4,586.0 368.8,944.6 369.2,332.0 369.6,426.3 370.0,875.9 370.5,357.6 370.9,937.7 371.3,357.6 371.7,937.7 372.2,609.8 372.6,928.3 373.0,341.0 373.4,944.6 373.8,367.0 374.3,323.0 374.7,797.7 375.1,836.7 375.5,606.7 376.0,937.7 376.4,937.7 376.8,341.0 377.2,950.5 377.6,375.6 378.1,931.7 378.5,357.6 378.9,950.5 379.3,487.3 379.8,931.7 380.2,323.0 380.6,785.1 381.0,887.0 381.4,314.9 381.9,905.7 382.3,323.0 382.7,931.7 383.1,792.0 383.6,375.6 384.0,931.7 384.4,332.0 384.8,800.4 385.2,332.0 385.7,767.4 386.1,509.1 386.5,801.8 386.9,615.5 387.3,957.4 387.8,341.0 388.2,957.4 388.6,323.0 389.0,950.5 389.5,323.0 389.9,800.4 390.3,332.0 390.7,924.9 391.1,323.0 391.6,924.9 392.0,590.8 392.4,924.9 392.8,332.0 393.3,943.7 393.7,594.0 394.1,924.9 394.5,801.1 394.9,584.5 395.4,943.7 395.8,601.0 396.2,924.9 396.6,323.0 397.1,801.8 397.5,341.0 397.9,943.7 398.3,606.3 398.7,924.9 399.2,943.7 399.6,608.1 400.0,943.7 400.4,552.3 400.9,950.5 401.3,332.0 401.7,797.5 402.1,431.4 402.5,800.5 403.0,601.6 403.4,803.2 403.8,788.8 404.2,794.6 404.7,615.8 405.1,937.7 405.5,609.0 405.9,947.1 406.3,501.5 406.8,768.3 407.2,609.9 407.6,765.2 408.0,357.6 408.4,768.8 408.9,323.0 409.3,799.9 409.7,928.3 410.1,439.4 410.6,947.1 411.0,341.0 411.4,947.1 411.8,549.6 412.2,947.1 412.7,323.0 413.1,953.9 413.5,534.4 413.9,778.2 414.4,419.6 414.8,953.9 415.2,341.0 415.6,947.1 416.0,488.0 416.5,937.7 416.9,367.0 417.3,912.1 417.7,930.9 418.2,332.0 418.6,797.3 419.0,890.2 419.4,341.0 419.8,912.1 420.3,616.7 420.7,937.7 421.1,332.0 421.5,921.5 422.0,341.0 422.4,921.5 422.8,332.0 423.2,772.5 423.6,581.0 424.1,921.5 424.5,586.7 424.9,798.3 425.3,459.4 425.8,930.9 426.2,617.6 426.6,812.8 427.0,594.3 427.4,902.1 427.9,332.0 428.3,930.9 428.7,512.7 429.1,950.5 429.5,332.0 430.0,614.7 430.4,943.7 430.8,375.6 431.2,943.7 431.7,503.8 432.1,943.7 432.5,564.7 432.9,943.7 433.3,375.6 433.8,950.5 434.2,603.6 434.6,934.3 435.0,323.0 435.5,950.5 435.9,349.1 436.3,950.5 436.7,501.1 437.1,865.1 437.6,367.0 438.0,943.7 438.4,617.6 438.8,773.1 439.3,425.7 439.7,887.6 440.1,323.0 440.5,876.5 440.9,332.0 441.4,881.2 441.8,591.8 442.2,947.1 442.6,417.6 443.1,928.3 443.5,457.7 443.9,357.6 444.3,767.7 444.7,617.8 445.2,767.6 445.6,341.0 446.0,595.8 446.4,784.5 446.9,367.0 447.3,947.1 447.7,375.6 448.1,928.3 448.5,593.1 449.0,797.5 449.4,928.3 449.8,928.3 450.2,332.0 450.6,793.5 451.1,349.1 451.5,928.3 451.9,574.1 452.3,823.9 452.8,314.9 453.2,947.1 453.6,496.0 454.0,947.1 454.4,375.6 454.9,947.1 455.3,332.0 455.7,931.7 456.1,602.8 456.6,950.5 457.0,341.0 457.4,941.1 457.8,349.1 458.2,808.1 458.7,578.4 459.1,931.7 459.5,367.0 459.9,941.1 460.4,323.0 460.8,779.0 461.2,592.8 461.6,950.5 462.0,323.0 462.5,613.2 462.9,931.7 463.3,341.0 463.7,931.7 464.2,375.6 464.6,950.5 465.0,508.0 465.4,793.5 465.8,367.0 466.3,794.5 466.7,323.0 467.1,931.7 467.5,520.5 468.0,950.5 468.4,600.9 468.8,802.3 469.2,375.0 469.6,903.0 470.1,481.6 470.5,928.3 470.9,341.0 471.3,765.5 471.7,332.0 472.2,937.7 472.6,332.0 473.0,944.6 473.4,332.0 473.9,944.6 474.3,585.8 474.7,771.1 475.1,357.6 475.5,859.7 476.0,768.1 476.4,341.0 476.8,928.3 477.2,332.0 477.7,937.7 478.1,402.0 478.5,585.8 478.9,780.2 479.3,349.1 479.8,765.8 480.2,357.6 480.6,928.3 481.0,367.0 481.5,794.7 481.9,349.1 482.3,771.3 482.7,349.1 483.1,937.7 483.6,937.7 484.0,332.0 484.4,937.7 484.8,616.3 485.3,944.6 485.7,928.3 486.1,587.3 486.5,918.9 486.9,611.6 487.4,872.2 487.8,937.7 488.2,615.6 488.6,928.3 489.1,323.0 489.5,944.6 489.9,332.0 490.3,918.9 490.7,498.2 491.2,928.3 491.6,332.0 492.0,769.2 492.4,532.8 492.8,937.7 493.3,418.9 493.7,928.3 494.1,379.9 494.5,800.6 495.0,612.0 495.4,795.6 495.8,617.4 496.2,771.1 496.6,603.8 497.1,856.6 497.5,583.1 497.9,776.1 498.3,618.1 498.8,914.6 499.2,332.0 499.6,812.8 500.0,599.7 500.4,924.0 500.9,601.7 501.3,924.0 501.7,323.0 502.1,930.9 502.6,314.9 503.0,769.3 503.4,357.6 503.8,813.7 504.2,603.7 504.7,793.9 505.1,375.6 505.5,914.6 505.9,357.6 506.4,924.0 506.8,398.5 507.2,842.5 507.6,595.3 508.0,776.5 508.5,349.1 508.9,930.9 509.3,558.3 509.7,921.5 510.2,361.1 510.6,912.1 511.0,930.9 511.4,616.4 511.8,792.8 512.3,323.0 512.7,766.0 513.1,612.7 513.5,937.7 513.9,341.0 514.4,796.0 514.8,604.0 515.2,796.0 515.6,392.3 516.1,921.5 516.5,375.6 516.9,795.0 517.3,332.0 517.7,778.3 518.2,349.1 518.6,891.1 519.0,349.1 519.4,367.0 519.9,921.5 520.3,614.7 520.7,778.4 521.1,314.9 521.5,812.3 522.0,332.0 522.4,934.3 522.8,323.0 523.2,950.5 523.7,341.0 524.1,950.5 524.5,341.0 524.9,934.3 525.3,924.9 525.8,571.8 526.2,943.7 526.6,341.0 527.0,772.0 527.5,612.8 527.9,934.3 528.3,323.0 528.7,783.5 529.1,375.6 529.6,765.3 530.0,459.6 530.4,586.4 530.8,943.7 531.3,552.6 531.7,908.2 532.1,775.6 532.5,594.8 532.9,341.0 533.4,844.8 533.8,603.0 534.2,765.2 534.6,792.6 535.0,581.4 535.5,777.1 535.9,332.0 536.3,618.0 536.7,838.0 537.2,611.0 537.6,950.5 538.0,603.2 538.4,943.7 538.8,587.0 539.3,841.2 539.7,616.6 540.1,950.5 540.5,484.0 541.0,776.3 541.4,367.0 541.8,774.9 542.2,607.4 542.6,781.5 543.1,607.9 543.5,950.5 543.9,610.1 544.3,797.6 544.8,779.8 545.2,555.7 545.6,934.3 546.0,473.7 546.4,914.6 546.9,341.0 547.3,924.0 547.7,617.9 548.1,780.5 548.6,608.5 549.0,930.9 549.4,314.9 549.8,811.7 550.2,610.6 550.7,870.3 551.1,332.0 551.5,800.6 551.9,584.3 552.4,905.3 552.8,773.2 553.2,590.6 553.6,905.3 554.0,601.5 554.5,618.0 554.9,600.3 555.3,776.5 555.7,584.2 556.1,777.3 556.6,525.4 557.0,914.6 557.4,588.3 557.8,367.0 558.3,924.0 558.7,597.0 559.1,934.3 559.5,616.1 559.9,794.7 560.4,349.1 560.8,826.0 561.2,517.5 561.6,792.0 562.1,367.0 562.5,950.5 562.9,605.5 563.3,873.1 563.7,607.7 564.2,851.6 564.6,323.0 565.0,934.3 565.4,606.3 565.9,909.2 566.3,516.3 566.7,766.7 567.1,617.8 567.5,840.3 568.0,314.9 568.4,332.0 568.8,769.7 569.2,484.6 569.7,783.2 570.1,595.4 570.5,789.3 570.9,593.6 571.3,943.7 571.8,596.4 572.2,947.1 572.6,332.0 573.0,332.0 573.5,796.0 573.9,448.5 574.3,799.3 574.7,323.0 575.1,786.3 575.6,462.9 576.0,953.9 576.4,585.8 576.8,843.5 577.2,772.3 577.7,581.8 578.1,937.7 578.5,349.1 578.9,928.3 579.4,595.6 579.8,780.6 580.2,573.7 580.6,928.3 581.0,766.7 581.5,349.1 581.9,908.6 582.3,332.0 582.7,937.7 583.2,800.9 583.6,800.1 584.0,489.8 584.4,784.5 585.0,733.0 788.0,622.0 788.4,475.2 788.8,770.0 789.3,366.5 789.7,937.7 790.1,617.2 790.5,918.9 791.0,375.6 791.4,780.1 791.8,582.6 792.2,937.7 792.6,601.2 793.1,511.3 793.5,856.9 793.9,502.8 794.3,950.5 794.8,817.1 795.2,596.1 795.6,941.1 796.0,438.9 796.4,931.7 796.9,349.1 797.3,957.4 797.7,574.6 798.1,941.1 798.6,451.0 799.0,941.1 799.4,314.9 799.8,950.5 800.2,574.1 800.7,957.4 801.1,357.6 801.5,950.5 801.9,323.0 802.3,603.5 802.8,941.1 803.2,341.0 803.6,941.1 804.0,585.3 804.5,950.5 804.9,603.0 805.3,804.3 805.7,349.1 806.1,941.1 806.6,341.0 807.0,957.4 807.4,581.8 807.8,957.4 808.3,332.0 808.7,941.1 809.1,323.0 809.5,895.9 809.9,584.5 810.4,775.0 810.8,332.0 811.2,787.9 811.6,569.9 812.1,844.3 812.5,323.0 812.9,950.5 813.3,323.0 813.7,901.5 814.2,341.0 814.6,950.5 815.0,332.0 815.4,950.5 815.9,332.0 816.3,811.2 816.7,375.6 817.1,931.7 817.5,349.1 818.0,950.5 818.4,341.0 818.8,780.6 819.2,601.4 819.7,950.5 820.1,332.0 820.5,931.7 820.9,563.8 821.3,771.8 821.8,820.6 822.2,610.4 822.6,885.1 823.0,607.1 823.4,931.7 823.9,314.9 824.3,768.4 824.7,332.0 825.1,941.1 825.6,791.8 826.0,367.0 826.4,765.4 826.8,323.0 827.2,941.1 827.7,792.0 828.1,375.6 828.5,838.3 828.9,472.9 829.4,852.1 829.8,538.3 830.2,864.1 830.6,604.0 831.0,801.3 831.5,332.0 831.9,323.0 832.3,947.1 832.7,323.0 833.2,765.4 833.6,386.1 834.0,885.6 834.4,845.2 834.8,522.3 835.3,883.0 835.7,349.1 836.1,802.9 836.5,608.9 837.0,784.0 837.4,332.0 837.8,937.7 838.2,609.7 838.6,803.0 839.1,349.1 839.5,795.7 839.9,341.0 840.3,904.8 840.8,341.0 841.2,341.0 841.6,953.9 842.0,559.7 842.4,937.7 842.9,795.9 843.3,582.9 843.7,887.9 844.1,349.1 844.5,937.7 845.0,349.1 845.4,924.9 845.8,801.3 846.2,367.0 846.7,934.3 847.1,490.1 847.5,778.0 847.9,924.9 848.3,375.6 848.8,950.5 849.2,349.1 849.6,864.0 850.0,323.0 850.5,810.9 850.9,341.0 851.3,776.6 851.7,341.0 852.1,924.9 852.6,323.0 853.0,840.4 853.4,323.0 853.8,332.0 854.3,934.3 854.7,934.3 855.1,332.0 855.5,943.7 855.9,375.6 856.4,950.5 856.8,588.1 857.2,943.7 857.6,924.9 858.1,367.0 858.5,536.0 858.9,905.3 859.3,357.6 859.7,809.5 860.2,332.0 860.6,836.7 861.0,404.8 861.4,914.6 861.9,419.5 862.3,795.7 862.7,512.2 863.1,914.6 863.5,905.3 864.0,341.0 864.4,869.9 864.8,558.1 865.2,924.0 865.6,774.2 866.1,332.0 866.5,930.9 866.9,598.4 867.3,930.9 867.8,375.6 868.2,770.3 868.6,396.6 869.0,924.0 869.4,360.8 869.9,332.0 870.3,914.6 870.7,314.9 871.1,517.9 871.6,937.7 872.0,514.6 872.4,937.7 872.8,357.6 873.2,937.7 873.7,489.9 874.1,918.9 874.5,918.9 874.9,323.0 875.4,787.7 875.8,332.0 876.2,944.6 876.6,578.8 877.0,928.3 877.5,587.6 877.9,790.4 878.3,587.2 878.7,782.3 879.2,581.4 879.6,798.0 880.0,507.0 880.4,918.9 880.8,314.9 881.3,794.6 881.7,341.0 882.1,918.9 882.5,349.1 883.0,765.2 883.4,332.0 883.8,944.6 884.2,617.3 884.6,937.7 885.1,947.1 885.5,375.6 885.9,937.7 886.3,575.7 886.7,891.4 887.2,607.3 887.6,579.8 888.0,937.7 888.4,357.6 888.9,947.1 889.3,332.0 889.7,953.9 890.1,607.8 890.5,860.5 891.0,615.3 891.4,868.8 891.8,332.0 892.2,323.0 892.7,928.3 893.1,366.7 893.5,533.0 893.9,928.3 894.3,332.0 894.8,947.1 895.2,332.0 895.6,947.1 896.0,910.6 896.5,567.7 896.9,787.8 897.3,332.0 897.7,947.1 898.1,323.0 898.6,953.9 899.0,323.0 899.4,815.2 899.8,554.6 900.3,765.4 900.7,332.0 901.1,904.6 901.5,341.0 901.9,947.1 902.4,596.0 902.8,375.6 903.2,953.9 903.6,341.0 904.1,953.9 904.5,332.0 904.9,791.9 905.3,566.6 905.7,947.1 906.2,418.5 906.6,928.3 907.0,595.0 907.4,937.7 907.8,332.0 908.3,802.7 908.7,616.6 909.1,563.0 909.5,928.3 910.0,606.3 910.4,957.4 910.8,341.0 911.2,837.9 911.6,367.0 912.1,957.4 912.5,931.7 912.9,332.0 913.3,349.1 913.8,332.0 914.2,950.5 914.6,323.0 915.0,931.7 915.4,614.4 915.9,950.5 916.3,341.0 916.7,818.7 917.1,341.0 917.6,950.5 918.0,357.6 918.4,941.1 918.8,349.1 919.2,950.5 919.7,587.3 920.1,941.1 920.5,349.1 920.9,605.8 921.4,941.1 921.8,574.9 922.2,957.4 922.6,341.0 923.0,766.8 923.5,367.0 923.9,957.4 924.3,464.9 924.7,950.5 925.2,882.0 925.6,581.0 926.0,795.8 926.4,367.0 926.8,950.5 927.3,616.7 927.7,950.5 928.1,341.0 928.5,777.1 928.9,341.0 929.4,771.1 929.8,612.5 930.2,957.4 930.6,572.0 931.1,957.4 931.5,357.6 931.9,931.7 932.3,931.7 932.7,357.6 933.2,341.0 933.6,776.8 934.0,341.0 934.4,941.1 934.9,546.6 935.3,950.5 935.7,323.0 936.1,953.9 936.5,323.0 937.0,867.8 937.4,341.0 937.8,789.3 938.2,323.0 938.7,406.0 939.1,833.4 939.5,349.1 939.9,928.3 940.3,508.7 940.8,773.1 941.2,323.0 941.6,953.9 942.0,341.0 942.5,947.1 942.9,829.4 943.3,599.1 943.7,808.4 944.1,341.0 944.6,895.9 945.0,323.0 945.4,796.3 945.8,375.6 946.3,786.8 946.7,586.5 947.1,795.0 947.5,588.6 947.9,341.0 948.4,947.1 948.8,332.0 949.2,792.2 949.6,349.1 950.0,780.6 950.5,323.0 950.9,850.7 951.3,375.6 951.7,950.5 952.2,332.0 952.6,957.4 953.0,323.0 953.4,941.1 953.8,349.1 954.3,950.5 954.7,323.0 955.1,950.5 955.5,492.4 956.0,766.6 956.4,349.1 956.8,957.4 957.2,341.0 957.6,941.1 958.1,367.0 958.5,787.3 958.9,341.0 959.3,950.5 959.8,367.0 960.2,868.3 960.6,349.1 961.0,840.3 961.4,349.1 961.9,941.1 962.3,349.1 962.7,924.0 963.1,323.0 963.6,357.6 964.0,924.0 964.4,367.0 964.8,819.3 965.2,341.0 965.7,924.0 966.1,349.1 966.5,905.3 966.9,562.3 967.4,924.0 967.8,349.1 968.2,357.6 968.6,812.8 969.0,914.6 969.5,323.0 969.9,924.0 970.3,616.3 970.7,914.6 971.1,603.5 971.6,780.4 972.0,357.6 972.4,613.8 972.8,773.0 973.3,323.0 973.7,914.6 974.1,332.0 974.5,930.9 974.9,573.7 975.4,813.3 975.8,323.0 976.2,772.1 976.6,349.1 977.1,947.1 977.5,367.0 977.9,937.7 978.3,598.4 978.7,928.3 979.2,341.0 979.6,800.4 980.0,891.2 980.4,367.0 980.9,937.7 981.3,617.6 981.7,357.6 982.1,827.0 982.5,349.1 983.0,947.1 983.4,332.0 983.8,947.1 984.2,332.0 984.7,947.1 985.1,323.0 985.5,947.1 985.9,572.3 986.3,767.4 986.8,587.2 987.2,793.1 987.6,581.1 988.0,615.1 988.5,930.9 988.9,323.0 989.3,937.7 989.7,573.6 990.1,610.0 990.6,937.7 991.0,608.6 991.4,791.6 991.8,588.3 992.2,768.0 992.7,937.7 993.1,349.1 993.5,860.9 993.9,937.7 994.4,349.1 994.8,766.5 995.2,323.0 995.6,921.5 996.0,554.4 996.5,930.9 996.9,357.6 997.3,768.6 997.7,332.0 998.2,912.1 998.6,332.0 999.0,795.1 999.4,341.0 999.8,937.7 1000.3,314.9 1000.7,930.9 1001.1,357.6 1001.5,784.6 1002.0,375.6 1002.4,787.1 1002.8,390.5 1003.2,937.7 1003.6,349.1 1004.1,861.8 1004.5,341.0 1004.9,873.4 1005.3,585.9 1005.8,323.0 1006.2,800.2 1006.6,803.1 1007.0,332.0 1007.4,918.9 1007.9,341.0 1008.3,794.3 1008.7,323.0 1009.1,937.7 1009.6,609.3 1010.0,937.7 1010.4,606.6 1010.8,809.1 1011.2,332.0 1011.7,944.6 1012.1,591.6 1012.5,375.6 1012.9,907.8 1013.3,332.0 1013.8,944.6 1014.2,341.0 1014.6,943.7 1015.0,341.0 1015.5,766.2 1015.9,934.3 1016.3,461.8 1016.7,806.3 1017.1,332.0 1017.6,924.9 1018.0,332.0 1018.4,847.3 1018.8,332.0 1019.3,770.1 1019.7,618.0 1020.1,924.9 1020.5,593.5 1020.9,790.2 1021.4,943.7 1021.8,614.4 1022.2,790.6 1022.6,332.0 1023.1,785.2 1023.5,323.0 1023.9,943.7 1024.3,375.6 1024.7,795.1 1025.2,769.0 1025.6,617.9 1026.0,943.7 1026.4,357.6 1026.9,950.5 1027.3,601.6 1027.7,794.4 1028.1,607.0 1028.5,930.9 1029.0,438.1 1029.4,771.7 1029.8,563.0 1030.2,837.9 1030.7,349.1 1031.1,806.3 1031.5,357.6 1031.9,800.3 1032.3,591.5 1032.8,914.6 1033.2,534.9 1033.6,797.9 1034.0,341.0 1034.4,799.4 1034.9,618.2 1035.3,924.0 1035.7,341.0 1036.1,910.9 1036.6,341.0 1037.0,770.6 1037.4,332.0 1037.8,905.3 1038.2,357.6 1038.7,924.0 1039.1,323.0 1039.5,914.6 1039.9,924.0 1040.4,600.5 1040.8,774.3 1041.2,604.9 1041.6,798.6 1042.0,579.8 1042.5,950.5 1042.9,571.1 1043.3,766.2 1043.7,583.6 1044.2,822.0 1044.6,591.1 1045.0,931.7 1045.4,332.0 1045.8,941.1 1046.3,487.6 1046.7,950.5 1047.1,349.1 1047.5,912.9 1048.0,341.0 1048.4,588.2 1048.8,931.7 1049.2,332.0 1049.6,899.3 1050.1,941.1 1050.5,375.6 1050.9,950.5 1051.3,581.5 1051.8,931.7 1052.2,323.0 1052.6,957.4 1053.0,341.0 1053.4,950.5 1053.9,469.8 1054.3,766.8 1054.7,349.1 1055.1,804.0 1055.5,332.0 1056.0,931.7 1056.4,323.0 1056.8,950.5 1057.2,323.0 1057.7,950.5 1058.1,611.3 1058.5,941.1 1058.9,771.5 1059.3,341.0 1059.8,851.8 1060.2,367.0 1060.6,904.2 1061.0,323.0 1061.5,769.2 1061.9,452.6 1062.3,941.1 1062.7,357.6 1063.1,950.5 1063.6,357.6 1064.0,768.9 1064.4,957.4 1064.8,585.8 1065.3,950.5 1065.7,476.8 1066.1,943.7 1066.5,323.0 1066.9,943.7 1067.4,593.7 1067.8,934.3 1068.2,434.8 1068.6,797.4 1069.1,617.5 1069.5,924.9 1069.9,585.6 1070.3,794.6 1070.7,357.6 1071.2,934.3 1071.6,332.0 1072.0,943.7 1072.4,357.6 1072.9,599.9 1073.3,934.3 1073.7,404.5 1074.1,773.5 1074.5,611.4 1075.0,803.4 1075.4,566.9 1075.8,943.7 1076.2,934.3 1076.6,341.0 1077.1,943.7 1077.5,602.8 1077.9,815.2 1078.3,585.9 1078.8,784.3 1079.2,581.0 1079.6,950.5 1080.0,605.0 1080.4,924.9 1080.9,533.9 1081.3,943.7 1081.7,349.1 1082.1,943.7 1082.6,375.6 1083.0,950.5 1083.4,332.0 1083.8,892.8 1084.2,357.6 1084.7,795.2 1085.1,367.0 1085.5,810.1 1085.9,614.8 1086.4,934.3 1086.8,341.0 1087.2,924.9 1087.6,599.5 1088.0,943.7 1088.5,349.1 1088.9,776.1 1089.3,614.8 1089.7,943.7 1090.2,332.0 1090.6,843.5 1091.0,332.0 1091.4,837.2 1091.8,323.0 1092.3,943.7 1092.7,618.1 1093.1,943.7 1093.5,600.2 1094.0,881.4 1094.4,349.1 1094.8,766.9 1095.2,341.0 1095.6,767.0 1096.1,323.0 1096.5,943.7 1096.9,323.0 1097.3,943.7 1097.7,604.4 1098.2,950.5 1098.6,357.6 1099.0,943.7 1099.4,560.7 1099.9,901.8 1100.3,332.0 1100.7,924.9 1101.1,583.1 1101.5,832.9 1102.0,323.0 1102.4,934.3 1102.8,597.0 1103.2,943.7 1103.7,600.6 1104.1,769.1 1104.5,377.0 1104.9,466.7 1105.3,930.9 1105.8,542.2 1106.2,930.9 1106.6,594.5 1107.0,937.7 1107.5,616.8 1107.9,930.9 1108.3,332.0 1108.7,937.7 1109.1,349.1 1109.6,900.8 1110.0,770.6 1110.4,912.1 1110.8,608.1 1111.3,930.9 1111.7,613.4 1112.1,795.2 1112.5,457.9 1112.9,770.1 1113.4,588.8 1113.8,930.9 1114.2,349.1 1114.6,767.9 1115.1,606.6 1115.5,930.9 1115.9,612.8 1116.3,778.6 1116.7,613.2 1117.2,930.9 1117.6,332.0 1118.0,912.1 1118.4,611.5 1118.8,795.3 1119.3,341.0 1119.7,765.7 1120.1,341.0 1120.5,912.1 1121.0,592.5 1121.4,605.6 1121.8,930.9 1122.2,323.0 1122.6,912.1 1123.1,608.2 1123.5,600.5 1123.9,911.2 1124.3,332.0 1124.8,617.9 1125.2,771.3 1125.6,367.6 1126.0,778.0 1126.4,332.0 1126.9,930.9 1127.3,585.4 1127.7,775.8 1128.1,368.6 1128.6,937.7 1129.0,607.4 1129.4,791.4 1129.8,323.0 1130.2,930.9 1130.7,930.9 1131.1,591.9 1131.5,766.3 1131.9,323.0 1132.4,799.1 1132.8,341.0 1133.2,941.1 1133.6,589.7 1134.0,867.9 1134.5,341.0 1134.9,796.4 1135.3,323.0 1135.7,789.1 1136.2,332.0 1136.6,931.7 1137.0,349.1 1137.4,950.5 1137.8,357.6 1138.3,799.8 1138.7,787.5 1139.1,332.0 1139.5,957.4 1139.9,367.0 1140.4,787.2 1140.8,332.0 1141.2,341.0 1141.6,950.5 1142.1,323.0 1142.5,950.5 1142.9,349.1 1143.3,799.0 1143.7,375.6 1144.2,796.1 1144.6,323.0 1145.0,844.4 1145.4,332.0 1145.9,794.2 1146.3,332.0 1146.7,953.9 1147.1,341.0 1147.5,937.7 1148.0,439.0 1148.4,928.3 1148.8,341.0 1149.2,885.0 1149.7,332.0 1150.1,947.1 1150.5,435.6 1150.9,849.1 1151.3,515.9 1151.8,947.1 1152.2,332.0 1152.6,937.7 1153.0,605.4 1153.5,821.8 1153.9,341.0 1154.3,947.1 1154.7,349.1 1155.1,953.9 1155.6,367.0 1156.0,375.6 1156.4,928.3 1156.8,341.0 1157.3,934.3 1157.7,332.0 1158.1,314.9 1158.5,776.4 1158.9,842.9 1159.4,934.3 1159.8,367.0 1160.2,341.0 1160.6,785.5 1161.0,323.0 1161.5,934.3 1161.9,323.0 1162.3,943.7 1162.7,332.0 1163.2,924.9 1163.6,396.7 1164.0,943.7 1164.4,527.2 1164.8,848.6 1165.3,594.2 1165.7,943.7 1166.1,323.0 1166.5,765.5 1167.0,943.7 1167.4,791.0 1167.8,332.0 1168.2,924.9 1168.6,323.0 1169.1,950.5 1169.5,332.0 1169.9,950.5 1170.3,349.1 1170.8,950.5 1171.2,606.7 1171.6,776.8 1172.0,367.0 1172.4,553.8 1172.9,950.5 1173.3,592.6 1173.7,900.0 1174.1,897.6 1174.6,332.0 1175.0,931.7 1175.4,357.6 1175.8,786.4 1176.2,587.5 1176.7,931.7 1177.1,608.2 1177.5,806.7 1177.9,950.5 1178.4,375.6 1178.8,950.5 1179.2,357.6 1179.6,931.7 1180.0,357.6 1180.5,767.6 1180.9,332.0 1181.3,931.7 1181.7,588.2 1182.1,849.0 1182.6,323.0 1183.0,800.4 1183.4,349.1 1183.8,794.5 1184.3,367.0 1184.7,950.5 1185.1,566.1 1185.5,828.2 1185.9,323.0 1186.4,943.7 1186.8,323.0 1187.2,785.8 1187.6,332.0 1188.1,924.9 1188.5,950.5 1188.9,341.0 1189.3,934.3 1189.7,367.0 1190.2,934.3 1190.6,943.7 1191.0,588.7 1191.4,943.7 1191.9,332.0 1192.3,886.3 1192.7,341.0 1193.1,950.5 1193.5,466.5 1194.0,854.8 1194.4,341.0 1194.8,943.7 1195.2,332.0 1195.7,924.9 1196.1,332.0 1196.5,924.0 1196.9,606.0 1197.3,914.6 1197.8,332.0 1198.2,914.6 1198.6,375.6 1199.0,905.3 1199.5,914.6 1199.9,375.6 1200.3,924.0 1200.7,614.7 1201.1,914.6 1201.6,323.0 1202.0,789.6 1202.4,588.4 1202.8,905.3 1203.2,550.8 1203.7,808.7 1204.1,362.3 1204.5,914.6 1204.9,375.6 1205.4,930.9 1205.8,556.1 1206.2,930.9 1206.6,323.0 1207.0,924.0 1207.5,323.0 1207.9,924.0 1208.3,601.4 1208.7,879.9 1209.2,359.2 1209.6,924.9 1210.0,771.3 1210.4,341.0 1210.8,943.7 1211.3,934.3 1211.7,332.0 1212.1,943.7 1212.5,599.3 1213.0,839.7 1213.4,349.1 1213.8,898.6 1214.2,590.0 1214.6,870.8 1215.1,341.0 1215.5,943.7 1215.9,877.6 1216.3,613.0 1216.8,790.8 1217.2,459.7 1217.6,934.3 1218.0,375.6 1218.4,934.3 1218.9,341.0 1219.3,950.5 1219.7,332.0 1220.1,924.9 1220.6,617.3 1221.0,897.9 1221.4,349.1 1221.8,427.4 1222.2,612.5 1222.7,777.1 1223.1,332.0 1223.5,814.3 1223.9,599.7 1224.3,797.3 1224.8,332.0 1225.2,950.5 1225.6,588.7 1226.0,813.9 1226.5,341.0 1226.9,943.7 1227.3,349.1 1227.7,950.5 1228.1,582.3 1228.6,323.0 1229.0,833.1 1229.4,332.0 1229.8,943.7 1230.3,323.0 1230.7,943.7 1231.1,332.0 1231.5,924.9 1231.9,616.6 1232.4,950.5 1232.8,323.0 1233.2,792.7 1233.6,924.9 1234.1,592.5 1234.5,924.9 1234.9,332.0 1235.3,786.4 1235.7,341.0 1236.2,815.1 1236.6,453.2 1237.0,941.1 1237.4,618.1 1237.9,931.7 1238.3,378.7 1238.7,957.4 1239.1,349.1 1239.5,950.5 1240.0,332.0 1240.4,817.2 1240.8,477.2 1241.2,870.9 1241.7,332.0 1242.1,950.5 1242.5,332.0 1242.9,950.5 1243.3,314.9 1243.8,770.1 1244.2,323.0 1244.6,950.5 1245.0,332.0 1245.4,808.3 1245.9,496.8 1246.3,931.7 1246.7,393.0 1247.1,773.9 1247.6,617.8 1248.0,794.5 1248.4,563.9 1248.8,772.2 1249.2,323.0 1249.7,770.2 1250.1,323.0 1250.5,798.3 1250.9,586.9 1251.4,787.7 1251.8,341.0 1252.2,912.1 1252.6,341.0 1253.0,937.7 1253.5,614.5 1253.9,930.9 1254.3,332.0 1254.7,937.7 1255.2,375.6 1255.6,802.8 1256.0,592.9 1256.4,930.9 1256.8,323.0 1257.3,877.2 1257.7,568.6 1258.1,773.8 1258.5,497.7 1259.0,834.4 1259.4,341.0 1259.8,912.1 1260.2,487.8 1260.6,864.5 1261.1,332.0 1261.5,912.1 1261.9,930.9 1262.3,332.0 1262.8,794.1 1263.2,583.8 1263.6,787.0 1264.0,323.0 1264.4,800.8 1264.9,341.0 1265.3,921.5 1265.7,596.2 1266.1,765.9 1266.5,499.4 1267.0,921.5 1267.4,588.4 1267.8,896.5 1268.2,375.6 1268.7,930.9 1269.1,584.9 1269.5,595.4 1269.9,341.0 1270.3,800.2 1270.8,564.4 1271.2,766.7 1271.6,367.0 1272.0,937.7 1272.5,596.3 1272.9,793.6 1273.3,612.9 1273.7,912.1 1274.1,618.2 1274.6,803.6 1275.0,367.0 1275.4,357.6 1275.8,851.5 1276.3,588.0 1276.7,830.0 1277.1,603.3 1277.5,928.3 1277.9,543.6 1278.4,937.7 1278.8,616.7 1279.2,937.7 1279.6,606.1 1280.1,903.2 1280.5,801.7 1280.9,590.9 1281.3,795.3 1281.7,341.0 1282.2,878.2 1282.6,341.0 1283.0,928.3 1283.4,772.8 1283.9,323.0 1284.3,839.6 1284.7,586.0 1285.1,953.9 1285.5,367.0 1286.0,937.7 1286.4,332.0 1286.8,772.2 1287.2,587.6 1287.6,784.1 1288.1,615.5 1288.5,950.5 1288.9,332.0 1289.3,924.9 1289.8,349.1 1290.2,617.3 1290.6,943.7 1291.0,341.0 1291.4,785.5 1291.9,590.6 1292.3,934.3 1292.7,349.1 1293.1,924.9 1293.6,323.0 1294.0,803.0 1294.4,332.0 1294.8,840.1 1295.2,349.1 1295.7,907.3 1296.1,323.0 1296.5,924.9 1296.9,357.6 1297.4,765.8 1297.8,398.8 1298.2,943.7 1298.6,357.6 1299.0,943.7 1299.5,594.5 1299.9,943.7 1300.3,332.0 1300.7,766.0 1301.2,615.6 1301.6,375.6 1302.0,906.9 1302.4,357.6 1302.8,505.8 1303.3,865.5 1303.7,341.0 1304.1,921.5 1304.5,617.7 1305.0,930.9 1305.4,617.1 1305.8,912.1 1306.2,405.2 1306.6,836.6 1307.1,323.0 1307.5,782.1 1307.9,548.9 1308.3,605.6 1308.7,790.5 1309.2,616.6 1309.6,777.2 1310.0,607.3 1310.4,783.9 1310.9,349.1 1311.3,838.3 1311.7,585.3 1312.1,921.5 1312.5,375.6 1313.0,767.2 1313.4,332.0 1313.8,947.1 1314.2,314.9 1314.7,576.7 1315.1,902.7 1315.5,365.4 1315.9,947.1 1316.3,616.3 1316.8,792.2 1317.2,593.8 1317.6,928.3 1318.0,604.4 1318.5,947.1 1318.9,323.0 1319.3,928.3 1319.7,349.1 1320.1,792.6 1320.6,332.0 1321.0,947.1 1321.4,323.0 1321.8,788.4 1322.3,578.9 1322.7,795.5 1323.1,332.0 1323.5,796.5 1323.9,610.7 1324.4,947.1 1324.8,349.1 1325.2,947.1 1325.6,332.0 1326.1,931.7 1326.5,323.0 1326.9,770.1 1327.3,332.0 1327.7,826.0 1328.2,600.8 1328.6,777.5 1329.0,323.0 1329.4,957.4 1329.8,606.9 1330.3,860.5 1330.7,383.8 1331.1,950.5 1331.5,587.6 1332.0,586.5 1332.4,931.7 1332.8,616.9 1333.2,950.5 1333.6,608.1 1334.1,901.7 1334.5,341.0 1334.9,941.1 1335.3,332.0 1335.8,957.4 1336.2,572.1 1336.6,775.0 1337.0,332.0 1337.4,950.5 1337.9,599.7 1338.3,957.4 1338.7,314.9 1339.1,905.2 1339.6,332.0 1340.0,950.5 1340.4,349.1 1340.8,941.1 1341.2,430.1 1341.7,775.0 1342.1,349.1 1342.5,941.1 1342.9,349.1 1343.4,783.0 1343.8,341.0 1344.2,832.0 1344.6,341.0 1345.0,950.5 1345.5,603.0 1345.9,931.7 1346.3,341.0 1346.7,781.3 1347.2,589.0 1347.6,904.1 1348.0,594.9 1348.4,830.5 1348.8,614.6 1349.3,794.2 1349.7,332.0 1350.1,768.5 1350.5,580.5 1350.9,800.9 1351.4,591.3 1351.8,957.4 1352.2,323.0 1352.6,860.0 1353.1,598.7 1353.5,937.7 1353.9,615.1 1354.3,583.6 1354.7,953.9 1355.2,589.7 1355.6,937.7 1356.0,323.0 1356.4,937.7 1356.9,947.1 1357.3,371.7 1357.7,947.1 1358.1,417.8 1358.5,795.8 1359.0,332.0 1359.4,947.1 1359.8,599.1 1360.2,323.0 1360.7,928.3 1361.1,341.0 1361.5,947.1 1361.9,585.3 1362.3,800.1 1362.8,928.3 1363.2,349.1 1363.6,947.1 1364.0,953.9 1364.5,323.0 1364.9,776.6 1365.3,555.3 1365.7,921.5 1366.1,314.9 1366.6,937.7 1367.0,480.3 1367.4,912.1 1367.8,461.6 1368.3,912.1 1368.7,930.9 1369.1,580.1 1369.5,886.5 1369.9,587.2 1370.4,930.9 1370.8,332.0 1371.2,766.0 1371.6,606.6 1372.0,882.4 1372.5,378.6 1372.9,912.1 1373.3,357.6 1373.7,584.4 1374.2,772.3 1374.6,832.4 1375.0,501.0 1375.4,930.9 1375.8,314.9 1376.3,796.0 1376.7,472.1 1377.1,772.4 1377.5,323.0 1378.0,787.0 1378.4,341.0 1378.8,924.9 1379.2,596.1 1379.6,787.3 1380.1,589.2 1380.5,769.1 1380.9,341.0 1381.3,943.7 1381.8,367.0 1382.2,934.3 1382.6,924.9 1383.0,478.9 1383.4,584.1 1383.9,943.7 1384.3,367.0 1384.7,828.0 1385.1,604.1 1385.6,820.6 1386.0,603.3 1386.4,800.9 1386.8,560.9 1387.2,843.6 1387.7,581.9 1388.1,772.3 1388.5,582.9 1388.9,795.0 1389.4,323.0 1389.8,314.9 1390.2,943.7 1390.6,349.1 1391.0,928.3 1391.5,375.6 1391.9,782.2 1392.3,577.9 1392.7,928.3 1393.1,367.0 1393.6,947.1 1394.0,947.1 1394.4,605.6 1394.8,947.1 1395.3,341.0 1395.7,947.1 1396.1,431.9 1396.5,792.0 1396.9,349.1 1397.4,947.1 1397.8,947.1 1398.2,341.0 1398.6,947.1 1399.1,953.9 1399.5,928.3 1399.9,357.6 1400.3,795.4 1400.7,349.1 1401.2,787.7 1401.6,765.4 1402.0,349.1 1402.4,947.1 1402.9,323.0 1403.3,928.3 1403.7,579.9 1404.1,765.5 1404.5,766.6 1405.0,323.0 1405.4,890.0 1405.8,425.8 1406.2,914.6 1406.7,367.0 1407.1,924.0 1407.5,505.8 1407.9,798.0 1408.3,583.4 1408.8,924.0 1409.2,591.8 1409.6,914.6 1410.0,613.4 1410.5,914.6 1410.9,332.0 1411.3,905.3 1411.7,598.7 1412.1,786.6 1412.6,491.3 1413.0,781.8 1413.4,615.8 1413.8,323.0 1414.2,857.1 1414.7,505.6 1415.1,349.1 1415.5,795.2 1415.9,924.0 1416.4,375.6 1416.8,924.0 1417.2,592.1 1417.6,941.1 1418.0,513.6 1418.5,797.8 1418.9,323.0 1419.3,765.6 1419.7,323.0 1420.2,931.7 1420.6,323.0 1421.0,950.5 1421.4,603.5 1421.8,950.5 1422.3,604.3 1422.7,950.5 1423.1,495.9 1423.5,898.9 1424.0,577.2 1424.4,881.6 1424.8,341.0 1425.2,950.5 1425.6,332.0 1426.1,950.5 1426.5,314.9 1426.9,815.4 1427.3,349.1 1427.8,950.5 1428.2,332.0 1428.6,931.7 1429.0,357.6 1429.4,950.5 1429.9,375.6 1430.3,771.5 1430.7,452.8 1431.1,802.1 1431.6,332.0 1432.0,930.9 1432.4,323.0 1432.8,914.6 1433.2,608.1 1433.7,930.9 1434.1,418.0 1434.5,795.7 1434.9,332.0 1435.3,786.8 1435.8,471.5 1436.2,914.6 1436.6,367.0 1437.0,799.8 1437.5,349.1 1437.9,800.2 1438.3,349.1 1438.7,924.0 1439.1,341.0 1439.6,905.3 1440.0,596.6 1440.4,914.6 1440.8,332.0 1441.3,905.3 1441.7,323.0 1442.1,924.0 1442.5,341.0 1442.9,905.3 1443.4,349.1 1443.8,341.0 1444.2,843.9 1444.6,341.0 1445.1,930.9 1445.5,580.1 1445.9,930.9 1446.3,349.1 1446.7,905.3 1447.2,571.1 1447.6,924.0 1448.0,368.0 1448.4,914.6 1448.9,558.1 1449.3,924.0 1449.7,367.0 1450.1,905.3 1450.5,323.0 1451.0,924.0 1451.4,924.0 1451.8,508.2 1452.2,772.8 1452.7,487.3 1453.1,924.0 1453.5,490.6 1453.9,812.8 1454.3,930.9 1454.8,512.1 1455.2,868.5 1455.6,332.0 1456.0,417.4 1456.4,928.3 1456.9,332.0 1457.3,845.5 1457.7,357.6 1458.1,953.9 1458.6,445.6 1459.0,937.7 1459.4,341.0 1459.8,800.1 1460.2,323.0 1460.7,947.1 1461.1,314.9 1461.5,882.0 1461.9,375.6 1462.4,606.1 1462.8,828.3 1463.2,341.0 1463.6,769.1 1464.0,367.0 1464.5,798.0 1464.9,464.5 1465.3,953.9 1465.7,349.1 1466.2,783.7 1466.6,377.4 1467.0,795.9 1467.4,540.0 1467.8,947.1 1468.3,341.0 1468.7,947.1 1469.1,349.1 1469.5,604.9 1470.0,786.1 1470.4,323.0 1470.8,820.2 1471.2,341.0 1471.6,801.5 1472.1,341.0 1472.5,934.3 1472.9,553.0 1473.3,826.3 1473.8,332.0 1474.2,794.5 1474.6,530.3 1475.0,775.0 1475.4,546.4 1475.9,532.6 1476.3,943.7 1476.7,323.0 1477.1,836.2 1477.5,332.0 1478.0,884.0 1478.4,612.0 1478.8,854.4 1479.2,367.0 1479.7,814.3 1480.1,332.0 1480.5,769.2 1480.9,367.0"/>
<path fill="none" stroke="#fbeaa8" stroke-width="0.9" stroke-linejoin="bevel" d="M267.5 409.6 267.9 778.7M272.1 803.4 272.6 610.6M276.4 616.3 276.8 950.5M278.1 332.0 278.5 950.5M280.2 950.5 280.6 357.6 281.0 775.3 281.4 349.1M284.0 585.9 284.4 950.5 284.8 563.2 285.2 931.7M287.3 341.0 287.8 941.1M289.0 600.1 289.4 950.5 289.9 332.0 290.3 349.1M291.6 798.3 292.0 590.4M294.5 586.1 294.9 867.3 295.4 415.2 295.8 765.4M300.0 395.8 300.4 934.3 300.8 341.0 301.3 924.9M305.1 596.9 305.5 787.8M307.2 779.7 307.6 943.7M308.9 495.6 309.3 800.6 309.7 614.0M313.1 357.6 313.5 859.7M316.0 896.5 316.5 582.2 316.9 772.4M320.7 880.5 321.1 552.4 321.5 899.8M324.0 765.3 324.5 598.7M327.0 332.0 327.4 924.9 327.8 606.7M329.1 934.3 329.5 441.0M331.6 803.1 332.1 943.7 332.5 617.1M334.6 943.7 335.0 357.6M337.1 591.1 337.6 934.3 338.0 591.7M339.2 803.1 339.7 332.0M343.9 785.6 344.3 349.1 344.7 775.3 345.1 930.9M347.7 930.9 348.1 463.4M351.9 941.1 352.3 605.4 352.7 824.0 353.2 359.4M356.5 950.5 357.0 341.0M360.3 580.3 360.8 869.0 361.2 818.5 361.6 617.1M364.1 323.0 364.6 944.6 365.0 584.3M366.2 796.5 366.7 349.1 367.1 937.7M370.5 357.6 370.9 937.7 371.3 357.6M374.7 797.7 375.1 836.7 375.5 606.7 376.0 937.7M379.8 931.7 380.2 323.0 380.6 785.1M384.0 931.7 384.4 332.0M386.1 509.1 386.5 801.8 386.9 615.5M389.0 950.5 389.5 323.0 389.9 800.4 390.3 332.0M393.3 943.7 393.7 594.0M395.8 601.0 396.2 924.9M397.5 341.0 397.9 943.7 398.3 606.3 398.7 924.9M402.1 431.4 402.5 800.5 403.0 601.6 403.4 803.2M405.1 937.7 405.5 609.0 405.9 947.1 406.3 501.5M410.1 439.4 410.6 947.1 411.0 341.0M413.9 778.2 414.4 419.6 414.8 953.9 415.2 341.0M417.7 930.9 418.2 332.0M422.4 921.5 422.8 332.0M426.2 617.6 426.6 812.8 427.0 594.3M430.8 375.6 431.2 943.7M432.9 943.7 433.3 375.6 433.8 950.5M435.5 950.5 435.9 349.1 436.3 950.5 436.7 501.1M438.4 617.6 438.8 773.1M441.4 881.2 441.8 591.8 442.2 947.1M444.3 767.7 444.7 617.8 445.2 767.6 445.6 341.0M447.7 375.6 448.1 928.3 448.5 593.1M449.8 928.3 450.2 332.0 450.6 793.5M453.6 496.0 454.0 947.1 454.4 375.6M458.7 578.4 459.1 931.7 459.5 367.0 459.9 941.1M461.2 592.8 461.6 950.5M465.8 367.0 466.3 794.5M470.5 928.3 470.9 341.0M473.9 944.6 474.3 585.8 474.7 771.1M478.9 780.2 479.3 349.1 479.8 765.8M482.3 771.3 482.7 349.1M484.4 937.7 484.8 616.3 485.3 944.6M488.2 615.6 488.6 928.3 489.1 323.0M491.2 928.3 491.6 332.0M493.7 928.3 494.1 379.9M495.4 795.6 495.8 617.4 496.2 771.1 496.6 603.8M499.2 332.0 499.6 812.8M502.6 314.9 503.0 769.3 503.4 357.6 503.8 813.7M505.9 357.6 506.4 924.0 506.8 398.5 507.2 842.5M511.4 616.4 511.8 792.8 512.3 323.0 512.7 766.0M516.5 375.6 516.9 795.0M519.4 367.0 519.9 921.5 520.3 614.7 520.7 778.4M524.9 934.3 525.3 924.9 525.8 571.8M530.0 459.6 530.4 586.4 530.8 943.7M532.9 341.0 533.4 844.8 533.8 603.0M535.5 777.1 535.9 332.0 536.3 618.0 536.7 838.0M540.1 950.5 540.5 484.0 541.0 776.3 541.4 367.0M543.9 610.1 544.3 797.6 544.8 779.8M548.6 608.5 549.0 930.9 549.4 314.9 549.8 811.7M551.9 584.3 552.4 905.3M554.0 601.5 554.5 618.0 554.9 600.3 555.3 776.5M559.1 934.3 559.5 616.1M561.6 792.0 562.1 367.0M565.9 909.2 566.3 516.3 566.7 766.7M569.2 484.6 569.7 783.2 570.1 595.4M573.0 332.0 573.5 796.0 573.9 448.5 574.3 799.3M576.8 843.5 577.2 772.3 577.7 581.8M578.9 928.3 579.4 595.6M583.6 800.1 584.0 489.8 584.4 784.5M788.4 475.2 788.8 770.0M791.4 780.1 791.8 582.6M794.8 817.1 795.2 596.1 795.6 941.1 796.0 438.9M798.6 451.0 799.0 941.1 799.4 314.9M800.7 957.4 801.1 357.6 801.5 950.5 801.9 323.0M803.2 341.0 803.6 941.1M807.0 957.4 807.4 581.8 807.8 957.4 808.3 332.0M811.6 569.9 812.1 844.3M816.3 811.2 816.7 375.6 817.1 931.7M818.4 341.0 818.8 780.6 819.2 601.4 819.7 950.5M821.8 820.6 822.2 610.4 822.6 885.1 823.0 607.1M824.3 768.4 824.7 332.0 825.1 941.1M827.7 792.0 828.1 375.6 828.5 838.3M831.0 801.3 831.5 332.0 831.9 323.0M833.6 386.1 834.0 885.6 834.4 845.2M836.1 802.9 836.5 608.9M838.2 609.7 838.6 803.0 839.1 349.1 839.5 795.7M841.6 953.9 842.0 559.7 842.4 937.7M843.7 887.9 844.1 349.1 844.5 937.7M845.8 801.3 846.2 367.0M849.6 864.0 850.0 323.0M852.1 924.9 852.6 323.0 853.0 840.4M855.9 375.6 856.4 950.5 856.8 588.1 857.2 943.7M861.4 914.6 861.9 419.5M864.8 558.1 865.2 924.0 865.6 774.2 866.1 332.0M867.8 375.6 868.2 770.3M871.1 517.9 871.6 937.7M874.5 918.9 874.9 323.0 875.4 787.7M877.0 928.3 877.5 587.6M881.3 794.6 881.7 341.0 882.1 918.9M885.9 937.7 886.3 575.7 886.7 891.4 887.2 607.3M888.9 947.1 889.3 332.0 889.7 953.9M891.0 615.3 891.4 868.8M895.6 947.1 896.0 910.6M897.7 947.1 898.1 323.0M900.3 765.4 900.7 332.0 901.1 904.6 901.5 341.0M904.5 332.0 904.9 791.9M907.8 332.0 908.3 802.7M912.1 957.4 912.5 931.7M915.0 931.7 915.4 614.4 915.9 950.5 916.3 341.0M917.6 950.5 918.0 357.6 918.4 941.1M919.7 587.3 920.1 941.1 920.5 349.1 920.9 605.8M924.3 464.9 924.7 950.5 925.2 882.0M929.4 771.1 929.8 612.5 930.2 957.4M932.7 357.6 933.2 341.0 933.6 776.8 934.0 341.0M937.4 341.0 937.8 789.3 938.2 323.0 938.7 406.0M941.2 323.0 941.6 953.9M945.4 796.3 945.8 375.6 946.3 786.8M949.6 349.1 950.0 780.6M952.2 332.0 952.6 957.4 953.0 323.0 953.4 941.1M956.8 957.4 957.2 341.0 957.6 941.1 958.1 367.0M961.4 349.1 961.9 941.1M964.4 367.0 964.8 819.3M969.0 914.6 969.5 323.0M971.1 603.5 971.6 780.4M973.7 914.6 974.1 332.0 974.5 930.9M978.3 598.4 978.7 928.3M983.0 947.1 983.4 332.0 983.8 947.1M985.5 947.1 985.9 572.3 986.3 767.4M990.1 610.0 990.6 937.7M993.9 937.7 994.4 349.1 994.8 766.5M996.5 930.9 996.9 357.6 997.3 768.6 997.7 332.0M1000.3 314.9 1000.7 930.9M1003.6 349.1 1004.1 861.8 1004.5 341.0M1007.9 341.0 1008.3 794.3 1008.7 323.0M1010.4 606.6 1010.8 809.1M1012.9 907.8 1013.3 332.0M1014.6 943.7 1015.0 341.0 1015.5 766.2 1015.9 934.3M1018.4 847.3 1018.8 332.0 1019.3 770.1 1019.7 618.0M1023.1 785.2 1023.5 323.0 1023.9 943.7M1026.4 357.6 1026.9 950.5M1030.7 349.1 1031.1 806.3 1031.5 357.6M1034.0 341.0 1034.4 799.4 1034.9 618.2 1035.3 924.0M1037.4 332.0 1037.8 905.3M1042.0 579.8 1042.5 950.5M1046.7 950.5 1047.1 349.1 1047.5 912.9 1048.0 341.0M1049.2 332.0 1049.6 899.3M1053.9 469.8 1054.3 766.8 1054.7 349.1M1056.0 931.7 1056.4 323.0 1056.8 950.5 1057.2 323.0M1058.9 771.5 1059.3 341.0M1062.7 357.6 1063.1 950.5M1064.8 585.8 1065.3 950.5 1065.7 476.8 1066.1 943.7M1068.6 797.4 1069.1 617.5 1069.5 924.9 1069.9 585.6M1073.3 934.3 1073.7 404.5 1074.1 773.5 1074.5 611.4M1076.2 934.3 1076.6 341.0 1077.1 943.7M1079.2 581.0 1079.6 950.5M1081.3 943.7 1081.7 349.1M1083.8 892.8 1084.2 357.6M1085.5 810.1 1085.9 614.8M1089.3 614.8 1089.7 943.7 1090.2 332.0M1093.5 600.2 1094.0 881.4M1095.2 341.0 1095.6 767.0 1096.1 323.0 1096.5 943.7M1099.9 901.8 1100.3 332.0M1101.5 832.9 1102.0 323.0 1102.4 934.3 1102.8 597.0M1104.1 769.1 1104.5 377.0M1106.2 930.9 1106.6 594.5M1109.1 349.1 1109.6 900.8 1110.0 770.6M1114.2 349.1 1114.6 767.9M1116.7 613.2 1117.2 930.9 1117.6 332.0M1120.5 912.1 1121.0 592.5 1121.4 605.6 1121.8 930.9M1124.3 332.0 1124.8 617.9M1127.7 775.8 1128.1 368.6M1131.9 323.0 1132.4 799.1M1133.6 589.7 1134.0 867.9 1134.5 341.0M1138.7 787.5 1139.1 332.0 1139.5 957.4 1139.9 367.0M1142.9 349.1 1143.3 799.0 1143.7 375.6 1144.2 796.1M1146.3 332.0 1146.7 953.9 1147.1 341.0 1147.5 937.7M1150.1 947.1 1150.5 435.6 1150.9 849.1M1153.9 341.0 1154.3 947.1 1154.7 349.1 1155.1 953.9M1156.8 341.0 1157.3 934.3M1160.6 785.5 1161.0 323.0 1161.5 934.3M1163.6 396.7 1164.0 943.7 1164.4 527.2M1167.4 791.0 1167.8 332.0 1168.2 924.9M1170.8 950.5 1171.2 606.7M1175.4 357.6 1175.8 786.4M1177.9 950.5 1178.4 375.6M1180.9 332.0 1181.3 931.7 1181.7 588.2M1184.3 367.0 1184.7 950.5M1185.9 323.0 1186.4 943.7 1186.8 323.0 1187.2 785.8M1188.9 341.0 1189.3 934.3 1189.7 367.0M1191.9 332.0 1192.3 886.3 1192.7 341.0M1196.5 924.0 1196.9 606.0 1197.3 914.6 1197.8 332.0M1202.0 789.6 1202.4 588.4 1202.8 905.3M1207.0 924.0 1207.5 323.0 1207.9 924.0 1208.3 601.4M1209.6 924.9 1210.0 771.3 1210.4 341.0 1210.8 943.7M1215.1 341.0 1215.5 943.7 1215.9 877.6M1218.9 341.0 1219.3 950.5 1219.7 332.0 1220.1 924.9M1222.2 612.5 1222.7 777.1 1223.1 332.0M1226.5 341.0 1226.9 943.7 1227.3 349.1 1227.7 950.5M1229.4 332.0 1229.8 943.7 1230.3 323.0M1234.1 592.5 1234.5 924.9 1234.9 332.0 1235.3 786.4M1237.9 931.7 1238.3 378.7 1238.7 957.4 1239.1 349.1M1240.8 477.2 1241.2 870.9 1241.7 332.0 1242.1 950.5M1243.3 314.9 1243.8 770.1 1244.2 323.0 1244.6 950.5M1248.0 794.5 1248.4 563.9 1248.8 772.2 1249.2 323.0M1250.5 798.3 1250.9 586.9 1251.4 787.7 1251.8 341.0M1254.7 937.7 1255.2 375.6 1255.6 802.8M1257.3 877.2 1257.7 568.6M1261.9 930.9 1262.3 332.0 1262.8 794.1M1266.5 499.4 1267.0 921.5 1267.4 588.4 1267.8 896.5M1269.1 584.9 1269.5 595.4 1269.9 341.0 1270.3 800.2M1272.0 937.7 1272.5 596.3 1272.9 793.6 1273.3 612.9M1277.1 603.3 1277.5 928.3 1277.9 543.6M1279.2 937.7 1279.6 606.1M1280.9 590.9 1281.3 795.3 1281.7 341.0M1285.5 367.0 1286.0 937.7M1288.1 615.5 1288.5 950.5M1290.2 617.3 1290.6 943.7 1291.0 341.0 1291.4 785.5M1293.6 323.0 1294.0 803.0 1294.4 332.0M1296.1 323.0 1296.5 924.9 1296.9 357.6 1297.4 765.8M1299.5 594.5 1299.9 943.7 1300.3 332.0 1300.7 766.0M1302.8 505.8 1303.3 865.5M1305.4 617.1 1305.8 912.1 1306.2 405.2M1310.4 783.9 1310.9 349.1 1311.3 838.3 1311.7 585.3M1315.5 365.4 1315.9 947.1M1318.0 604.4 1318.5 947.1 1318.9 323.0M1321.0 947.1 1321.4 323.0 1321.8 788.4M1323.1 332.0 1323.5 796.5M1325.6 332.0 1326.1 931.7 1326.5 323.0 1326.9 770.1M1329.8 606.9 1330.3 860.5 1330.7 383.8M1332.4 931.7 1332.8 616.9 1333.2 950.5 1333.6 608.1M1335.8 957.4 1336.2 572.1 1336.6 775.0M1340.8 941.1 1341.2 430.1M1345.0 950.5 1345.5 603.0 1345.9 931.7 1346.3 341.0M1348.0 594.9 1348.4 830.5 1348.8 614.6M1352.6 860.0 1353.1 598.7 1353.5 937.7 1353.9 615.1M1355.6 937.7 1356.0 323.0M1358.1 417.8 1358.5 795.8 1359.0 332.0M1361.5 947.1 1361.9 585.3 1362.3 800.1 1362.8 928.3M1367.0 480.3 1367.4 912.1M1369.9 587.2 1370.4 930.9 1370.8 332.0M1375.0 501.0 1375.4 930.9M1378.8 924.9 1379.2 596.1M1382.2 934.3 1382.6 924.9 1383.0 478.9 1383.4 584.1M1384.7 828.0 1385.1 604.1M1388.9 795.0 1389.4 323.0 1389.8 314.9 1390.2 943.7M1393.6 947.1 1394.0 947.1M1398.2 341.0 1398.6 947.1 1399.1 953.9 1399.5 928.3M1401.2 787.7 1401.6 765.4 1402.0 349.1M1404.5 766.6 1405.0 323.0M1406.2 914.6 1406.7 367.0 1407.1 924.0M1410.5 914.6 1410.9 332.0 1411.3 905.3M1413.0 781.8 1413.4 615.8 1413.8 323.0M1416.4 375.6 1416.8 924.0M1421.0 950.5 1421.4 603.5 1421.8 950.5 1422.3 604.3M1423.5 898.9 1424.0 577.2 1424.4 881.6 1424.8 341.0M1428.6 931.7 1429.0 357.6 1429.4 950.5M1433.2 608.1 1433.7 930.9M1436.2 914.6 1436.6 367.0 1437.0 799.8 1437.5 349.1M1440.4 914.6 1440.8 332.0M1444.2 843.9 1444.6 341.0 1445.1 930.9M1447.2 571.1 1447.6 924.0 1448.0 368.0M1452.2 772.8 1452.7 487.3 1453.1 924.0 1453.5 490.6M1456.4 928.3 1456.9 332.0 1457.3 845.5M1459.0 937.7 1459.4 341.0 1459.8 800.1M1461.1 314.9 1461.5 882.0 1461.9 375.6 1462.4 606.1M1465.3 953.9 1465.7 349.1 1466.2 783.7 1466.6 377.4M1467.8 947.1 1468.3 341.0 1468.7 947.1M1470.8 820.2 1471.2 341.0M1475.0 775.0 1475.4 546.4M1478.0 884.0 1478.4 612.0 1478.8 854.4 1479.2 367.0M1480.5 769.2 1480.9 367.0"/>
<path fill="none" stroke="#fbeaa8" stroke-width="0.8" stroke-linejoin="bevel" d="M267.5 658.4 267.9 759.5 268.3 627.1 268.8 746.7 269.2 654.5 269.6 765.5 270.0 617.0 270.5 748.8 270.9 635.0 271.3 730.3M272.6 630.1 273.0 716.8 273.4 617.8 273.8 730.0 274.3 653.3 274.7 714.2 275.1 606.4M275.9 613.2 276.4 755.1 276.8 670.0 277.2 736.8 277.6 635.5 278.1 720.9 278.5 608.9 278.9 739.5 279.3 659.2 279.7 766.9M281.0 638.3 281.4 751.2 281.8 645.6 282.3 747.0 282.7 656.7 283.1 713.7 283.5 613.7 284.0 730.2 284.4 618.5 284.8 728.3 285.2 608.0 285.6 771.2M286.9 630.3 287.3 761.9 287.8 661.8 288.2 746.5 288.6 615.9 289.0 727.7 289.4 610.5 289.9 770.9 290.3 641.1 290.7 739.3M291.1 638.4 291.6 740.7 292.0 606.5 292.4 740.7 292.8 670.8 293.2 719.0 293.7 622.1M294.1 776.7 294.5 635.6 294.9 747.5 295.4 632.2 295.8 762.9 296.2 654.1 296.6 754.7 297.0 631.8 297.5 755.5 297.9 657.2 298.3 725.3M299.2 773.1 299.6 645.3 300.0 754.0 300.4 648.0 300.8 719.9 301.3 666.9M302.5 739.9 302.9 624.2 303.4 758.7 303.8 611.8 304.2 774.8 304.6 641.3M305.9 753.6 306.3 612.7 306.7 747.4 307.2 643.4 307.6 731.1 308.0 613.1 308.4 724.7 308.9 666.5 309.3 766.2 309.7 618.9 310.1 747.0 310.5 615.3 311.0 715.2 311.4 651.5M311.8 734.1 312.2 640.5 312.7 725.4 313.1 666.5 313.5 737.5M313.9 611.8 314.3 776.2 314.8 620.5 315.2 746.7 315.6 651.9 316.0 774.8 316.5 633.7 316.9 761.8 317.3 670.6 317.7 728.5M319.0 612.8 319.4 754.3 319.8 640.0 320.3 753.0 320.7 614.6 321.1 735.4 321.5 633.2 321.9 733.2 322.4 619.2 322.8 710.5 323.2 624.1 323.6 774.6 324.0 671.2 324.5 753.8 324.9 626.5M325.7 630.1 326.2 731.8 326.6 641.4 327.0 774.8 327.4 611.5M328.7 719.1 329.1 671.0 329.5 744.6 330.0 660.3 330.4 769.7 330.8 625.8 331.2 721.8 331.6 632.9 332.1 736.5 332.5 635.7 332.9 729.1 333.3 658.3 333.8 726.4 334.2 643.2 334.6 760.7M336.3 770.1 336.7 618.9 337.1 765.4 337.6 673.2 338.0 745.7 338.4 667.1M338.8 763.9 339.2 657.6 339.7 760.8 340.1 651.8 340.5 759.9M340.9 647.6 341.4 714.2 341.8 642.5 342.2 735.5 342.6 611.7 343.0 734.5M343.9 751.1 344.3 609.1 344.7 719.5 345.1 629.1M346.4 775.3 346.8 647.8 347.3 760.1 347.7 633.7 348.1 751.8 348.5 667.0 348.9 766.8 349.4 607.5 349.8 738.6M350.6 776.7 351.1 663.1 351.5 717.5 351.9 666.1 352.3 766.7 352.7 619.7 353.2 744.7 353.6 627.9 354.0 711.7 354.4 626.5 354.9 744.4 355.3 634.2 355.7 740.9M356.1 641.7 356.5 729.5 357.0 668.5 357.4 743.8 357.8 652.3 358.2 760.4 358.7 616.4 359.1 761.5 359.5 638.1 359.9 730.3 360.3 642.7 360.8 747.2 361.2 627.3M362.0 665.0 362.5 746.7 362.9 635.8 363.3 761.1 363.7 612.3 364.1 764.8 364.6 627.6 365.0 763.5 365.4 625.1 365.8 769.3M366.2 623.3 366.7 759.1 367.1 652.4 367.5 772.5 367.9 642.7 368.4 755.1 368.8 616.0 369.2 775.1M370.9 735.7 371.3 642.3 371.7 723.4 372.2 632.0 372.6 717.8 373.0 648.3M373.4 774.0 373.8 620.7 374.3 745.6 374.7 663.0 375.1 774.7 375.5 623.0 376.0 728.1 376.4 646.1 376.8 756.7 377.2 624.3 377.6 732.1 378.1 608.9 378.5 736.4 378.9 651.7M379.3 768.5 379.8 659.3 380.2 759.0 380.6 655.7 381.0 754.1 381.4 650.1 381.9 740.2 382.3 609.5 382.7 745.9 383.1 639.3M383.6 755.2 384.0 649.9 384.4 725.7 384.8 642.8 385.2 732.9 385.7 656.6 386.1 775.0 386.5 670.0 386.9 766.5 387.3 609.8 387.8 760.4 388.2 671.7 388.6 748.1 389.0 669.5M390.7 673.2 391.1 750.8 391.6 664.2 392.0 735.5 392.4 638.2 392.8 771.3 393.3 643.7 393.7 722.5 394.1 617.9 394.5 767.2M395.4 714.9 395.8 656.7 396.2 741.8 396.6 632.1M397.1 729.5 397.5 617.3 397.9 768.4 398.3 610.4 398.7 770.7 399.2 671.9M399.6 753.1 400.0 665.5 400.4 771.6 400.9 620.5 401.3 763.6 401.7 656.6 402.1 715.9 402.5 616.5 403.0 754.6 403.4 627.9 403.8 746.2M405.5 738.5 405.9 648.6 406.3 755.8 406.8 612.3 407.2 717.0 407.6 666.7 408.0 748.7 408.4 624.5 408.9 726.8 409.3 650.6M410.6 747.7 411.0 624.3 411.4 757.4 411.8 659.0 412.2 719.9 412.7 610.0 413.1 750.4 413.5 641.2 413.9 759.6 414.4 621.6 414.8 749.5 415.2 665.7M415.6 767.5 416.0 654.7 416.5 714.0 416.9 644.9M418.6 622.6 419.0 747.6 419.4 658.7 419.8 768.8 420.3 617.0 420.7 771.9 421.1 624.4 421.5 728.9 422.0 618.7M422.8 633.3 423.2 772.1 423.6 607.9 424.1 740.9 424.5 609.4 424.9 773.6M425.3 617.8 425.8 710.6 426.2 644.9 426.6 755.0 427.0 628.7 427.4 763.4 427.9 626.4 428.3 724.7 428.7 610.1 429.1 750.3 429.5 612.8 430.0 728.1 430.4 606.3 430.8 751.4 431.2 618.8M431.7 762.5 432.1 612.7 432.5 739.1 432.9 665.3 433.3 742.0 433.8 657.4 434.2 750.5 434.6 616.6 435.0 739.1 435.5 661.1 435.9 712.6 436.3 640.3 436.7 753.0 437.1 670.9 437.6 758.1M438.0 654.9 438.4 720.2 438.8 610.2 439.3 749.5 439.7 612.0 440.1 748.9 440.5 661.8 440.9 730.6 441.4 640.2 441.8 756.6 442.2 619.1 442.6 763.1 443.1 626.1 443.5 731.5M444.3 740.1 444.7 636.0 445.2 732.4 445.6 633.0 446.0 745.4 446.4 669.9 446.9 767.2 447.3 630.0 447.7 766.1 448.1 621.1M448.5 761.9 449.0 606.6 449.4 740.1 449.8 642.2 450.2 709.5 450.6 625.3 451.1 753.1 451.5 630.6 451.9 777.0 452.3 656.0 452.8 729.6 453.2 621.2 453.6 766.6M455.3 767.4 455.7 635.3 456.1 745.6 456.6 642.4 457.0 755.9 457.4 629.3 457.8 759.7 458.2 613.7 458.7 763.1 459.1 643.4 459.5 731.3 459.9 618.5 460.4 765.5M460.8 610.2 461.2 727.5 461.6 614.7 462.0 771.1 462.5 665.8 462.9 735.4 463.3 627.1M464.2 615.6 464.6 732.4 465.0 624.2 465.4 734.6 465.8 654.4 466.3 728.1 466.7 635.5 467.1 760.9 467.5 654.4 468.0 759.3M469.2 643.9 469.6 727.1 470.1 660.3 470.5 715.7 470.9 623.4 471.3 742.5 471.7 661.8 472.2 770.5 472.6 625.9 473.0 711.9 473.4 621.8 473.9 753.9 474.3 638.9 474.7 748.1 475.1 608.3M476.8 644.0 477.2 738.0 477.7 620.0 478.1 756.3 478.5 638.1 478.9 748.9 479.3 654.0 479.8 765.3 480.2 671.6 480.6 756.8 481.0 638.2 481.5 729.2 481.9 630.0 482.3 753.1M484.0 765.9 484.4 646.6 484.8 736.8 485.3 654.6 485.7 714.8 486.1 656.7 486.5 723.9 486.9 627.7 487.4 768.6 487.8 654.2 488.2 720.6M488.6 633.2 489.1 720.9 489.5 641.4 489.9 763.7 490.3 655.5 490.7 760.1 491.2 632.9 491.6 718.3 492.0 652.6 492.4 754.1 492.8 664.1 493.3 727.9 493.7 630.6 494.1 767.0M495.4 673.0 495.8 735.0 496.2 647.2 496.6 772.3 497.1 644.6 497.5 765.1 497.9 670.0 498.3 747.9 498.8 612.2 499.2 764.3 499.6 630.4 500.0 726.3M500.9 717.8 501.3 608.2 501.7 764.6 502.1 622.1 502.6 749.9 503.0 658.5 503.4 737.7 503.8 625.3 504.2 757.5 504.7 642.5 505.1 766.0 505.5 668.0 505.9 734.0 506.4 664.6M507.2 617.8 507.6 763.3 508.0 659.7 508.5 735.4 508.9 662.7 509.3 757.9 509.7 639.0 510.2 730.0M511.8 759.6 512.3 627.5 512.7 746.3 513.1 631.8 513.5 739.2 513.9 655.9 514.4 747.7 514.8 648.2 515.2 736.9 515.6 656.7 516.1 772.3 516.5 640.1 516.9 727.6 517.3 670.3 517.7 728.7M519.0 625.2 519.4 729.9 519.9 626.1 520.3 744.9 520.7 621.1 521.1 749.8 521.5 643.4 522.0 733.5 522.4 629.5 522.8 767.7 523.2 623.7 523.7 746.8 524.1 646.5M525.8 624.4 526.2 764.3 526.6 624.6 527.0 775.1 527.5 612.9 527.9 731.0 528.3 606.4 528.7 736.8M530.4 741.3 530.8 627.6 531.3 732.9 531.7 650.8 532.1 765.6 532.5 628.4 532.9 762.7 533.4 618.0 533.8 770.0 534.2 612.1 534.6 767.3 535.0 607.4 535.5 748.0 535.9 623.1 536.3 748.9M536.7 607.9 537.2 757.5 537.6 639.8 538.0 758.0 538.4 648.9 538.8 722.1 539.3 642.7M540.1 673.8 540.5 718.9 541.0 638.2 541.4 763.8 541.8 668.5 542.2 756.4 542.6 662.8M543.1 748.7 543.5 648.8 543.9 744.6 544.3 622.5 544.8 742.5 545.2 642.3 545.6 761.8M546.4 738.2 546.9 623.1 547.3 767.9 547.7 607.4 548.1 731.8 548.6 627.6 549.0 735.7 549.4 623.1 549.8 768.6 550.2 660.8 550.7 737.9M551.5 738.4 551.9 627.2 552.4 767.0 552.8 650.0 553.2 765.0M554.0 737.6 554.5 658.3 554.9 738.0 555.3 654.7 555.7 712.4 556.1 617.2 556.6 725.6 557.0 630.8 557.4 751.4 557.8 614.6 558.3 768.6 558.7 627.9M559.5 619.7 559.9 719.4 560.4 610.2 560.8 735.4 561.2 651.8 561.6 728.9 562.1 642.0 562.5 765.4 562.9 614.3 563.3 762.8 563.7 621.5M565.0 735.1 565.4 639.6 565.9 770.2 566.3 606.5 566.7 718.2M567.5 772.6 568.0 637.8 568.4 759.7 568.8 618.3 569.2 726.6 569.7 628.2 570.1 776.1 570.5 612.9 570.9 772.2 571.3 665.1M571.8 761.0 572.2 636.2 572.6 772.1 573.0 658.3 573.5 751.0 573.9 662.0 574.3 766.2 574.7 621.9 575.1 713.0 575.6 647.8 576.0 723.1M576.8 756.0 577.2 667.1 577.7 774.4 578.1 608.1 578.5 744.2 578.9 630.7 579.4 739.2 579.8 628.8 580.2 741.5 580.6 639.1 581.0 763.0 581.5 656.8M583.2 666.6 583.6 772.2 584.0 658.8 584.4 742.3M788.4 608.5 788.8 723.0 789.3 671.2 789.7 777.0 790.1 656.9 790.5 721.3 791.0 626.1 791.4 738.0 791.8 612.3 792.2 730.0 792.6 608.5 793.1 736.2 793.5 629.1 793.9 773.4M794.3 624.1 794.8 772.9 795.2 622.7 795.6 714.8M796.9 647.8 797.3 726.9 797.7 614.6 798.1 753.1 798.6 609.7 799.0 764.4 799.4 608.4M800.2 623.3 800.7 754.9 801.1 651.4 801.5 774.7 801.9 647.6 802.3 764.8M802.8 608.7 803.2 757.2 803.6 660.2 804.0 767.4 804.5 625.1 804.9 726.5 805.3 668.5 805.7 750.0 806.1 670.2 806.6 773.0 807.0 634.9 807.4 749.1 807.8 641.1 808.3 757.8M808.7 610.8 809.1 735.4 809.5 643.5 809.9 753.1 810.4 648.7 810.8 753.9 811.2 632.6 811.6 743.8 812.1 624.8 812.5 749.8 812.9 664.8 813.3 776.9 813.7 644.7M815.4 608.9 815.9 748.8 816.3 641.7 816.7 719.3M817.1 612.0 817.5 725.4 818.0 632.4 818.4 738.2 818.8 646.6M819.7 656.4 820.1 713.6 820.5 633.1 820.9 765.7 821.3 626.3 821.8 727.7 822.2 623.6M822.6 715.2 823.0 641.0 823.4 767.5 823.9 610.6 824.3 745.5 824.7 614.8 825.1 747.9 825.6 633.8 826.0 753.2 826.4 606.7 826.8 762.7 827.2 637.0M828.1 626.6 828.5 738.5 828.9 618.3 829.4 767.1 829.8 628.7 830.2 774.0 830.6 671.8 831.0 748.0 831.5 627.1 831.9 737.6 832.3 657.9 832.7 759.7 833.2 639.5 833.6 732.7 834.0 669.2M835.7 654.5 836.1 731.7 836.5 613.7 837.0 726.1 837.4 650.2 837.8 719.4 838.2 637.2M839.9 610.4 840.3 767.9 840.8 669.6 841.2 740.1 841.6 614.6 842.0 713.2 842.4 655.5 842.9 747.4 843.3 642.9 843.7 763.1 844.1 622.1 844.5 745.8 845.0 652.1M846.2 716.5 846.7 625.2 847.1 724.4 847.5 612.4M848.3 667.7 848.8 747.9 849.2 628.9 849.6 714.2 850.0 636.2 850.5 712.9 850.9 619.4 851.3 709.6 851.7 627.2 852.1 776.3 852.6 614.8 853.0 730.1 853.4 633.2 853.8 722.9 854.3 645.6M855.9 643.1 856.4 756.6 856.8 657.6 857.2 766.1 857.6 612.2 858.1 751.2 858.5 644.3 858.9 768.7 859.3 634.5M860.6 724.5 861.0 615.2 861.4 748.6 861.9 623.4 862.3 766.9 862.7 607.7M863.5 641.4 864.0 770.1 864.4 619.6 864.8 740.7 865.2 625.8 865.6 727.2 866.1 658.7 866.5 715.0 866.9 643.1M867.3 730.3 867.8 634.2 868.2 775.4 868.6 659.4 869.0 751.6M870.7 764.1 871.1 671.4 871.6 774.3 872.0 624.0 872.4 766.3M873.7 666.8 874.1 726.0 874.5 635.0 874.9 773.7 875.4 611.2 875.8 742.4 876.2 627.8 876.6 762.5 877.0 646.3M878.3 761.7 878.7 611.7 879.2 766.0 879.6 626.0M881.3 667.6 881.7 773.0 882.1 648.6 882.5 712.2 883.0 647.4 883.4 719.9 883.8 638.8 884.2 737.1 884.6 657.6 885.1 746.5 885.5 640.8 885.9 738.5M886.3 616.7 886.7 735.3 887.2 632.8 887.6 770.3 888.0 608.5 888.4 739.9 888.9 669.3 889.3 774.4 889.7 634.4 890.1 728.9M890.5 661.4 891.0 730.5 891.4 647.8 891.8 722.8 892.2 668.5 892.7 776.8 893.1 616.3 893.5 720.7 893.9 636.5 894.3 766.0 894.8 635.1 895.2 716.8M896.5 611.0 896.9 753.1 897.3 637.9 897.7 756.0 898.1 668.5 898.6 759.3 899.0 617.0 899.4 758.4 899.8 644.3 900.3 733.9 900.7 672.8 901.1 718.0 901.5 659.2 901.9 745.0M903.2 637.1 903.6 756.3 904.1 627.4 904.5 711.8 904.9 610.6 905.3 753.3 905.7 648.3 906.2 730.5 906.6 623.9 907.0 773.4 907.4 645.9 907.8 741.5 908.3 631.8M909.1 641.4 909.5 772.6 910.0 631.8 910.4 767.2 910.8 651.2 911.2 769.8 911.6 618.4 912.1 729.5 912.5 633.5 912.9 759.1 913.3 630.8 913.8 754.3 914.2 652.8 914.6 751.4 915.0 644.8M915.4 765.8 915.9 643.6 916.3 776.0 916.7 630.4M917.6 640.7 918.0 722.0 918.4 621.1 918.8 714.6 919.2 628.9 919.7 735.4 920.1 618.7 920.5 721.9M920.9 624.4 921.4 761.0 921.8 653.3 922.2 722.1 922.6 643.6 923.0 757.1 923.5 651.3M923.9 710.3 924.3 639.1 924.7 766.4 925.2 659.0 925.6 773.8 926.0 634.8 926.4 724.6 926.8 663.7 927.3 739.7 927.7 636.8M928.9 748.1 929.4 651.8 929.8 744.5 930.2 638.5 930.6 760.0 931.1 630.5 931.5 729.7 931.9 657.3 932.3 769.3 932.7 668.3 933.2 721.6M934.4 632.8 934.9 772.9 935.3 627.6 935.7 737.3 936.1 639.8 936.5 762.0M937.8 641.3 938.2 714.2 938.7 645.5 939.1 751.8 939.5 659.9 939.9 771.9 940.3 610.3 940.8 748.7 941.2 611.5M942.0 633.0 942.5 724.4 942.9 608.8 943.3 772.7 943.7 638.4 944.1 740.6 944.6 666.1 945.0 755.3 945.4 614.3 945.8 740.9 946.3 649.3 946.7 755.0 947.1 617.8 947.5 725.3M948.8 669.2 949.2 766.9 949.6 647.4 950.0 767.8 950.5 638.2 950.9 725.0 951.3 671.7 951.7 720.7 952.2 651.3 952.6 763.5 953.0 617.8 953.4 756.1 953.8 648.0 954.3 758.0 954.7 621.3M955.1 739.4 955.5 665.4 956.0 746.0 956.4 654.1 956.8 726.8 957.2 642.4 957.6 717.3 958.1 611.9 958.5 733.5 958.9 611.9 959.3 762.3 959.8 672.8 960.2 771.5M961.0 749.6 961.4 612.6 961.9 746.6 962.3 671.0 962.7 723.7 963.1 647.8 963.6 769.2 964.0 615.7 964.4 721.1 964.8 645.1 965.2 720.6 965.7 653.6M966.5 640.8 966.9 723.7 967.4 625.7 967.8 730.7 968.2 612.3 968.6 746.8M970.3 731.8 970.7 661.8 971.1 734.5 971.6 653.2 972.0 762.2 972.4 644.7 972.8 760.5 973.3 650.2 973.7 716.9 974.1 648.2M975.4 727.6 975.8 654.9 976.2 724.2 976.6 651.8 977.1 774.9 977.5 610.0 977.9 729.7 978.3 668.4 978.7 747.2 979.2 630.1 979.6 720.6 980.0 640.6 980.4 764.1 980.9 674.2M981.7 624.1 982.1 765.2 982.5 636.2 983.0 745.7 983.4 634.2 983.8 722.6 984.2 634.5 984.7 730.5 985.1 647.1 985.5 714.5 985.9 658.9 986.3 715.5 986.8 632.8 987.2 730.3M988.5 653.3 988.9 721.9 989.3 629.4 989.7 758.8M990.6 748.5 991.0 630.4 991.4 712.3 991.8 648.1M993.1 719.9 993.5 640.4 993.9 767.9 994.4 663.9 994.8 720.6 995.2 635.4 995.6 770.0 996.0 642.4 996.5 731.2 996.9 619.3M998.2 754.1 998.6 614.6 999.0 769.4 999.4 646.7 999.8 732.5M1000.7 721.4 1001.1 650.4 1001.5 764.0 1002.0 607.4 1002.4 732.8 1002.8 666.2 1003.2 762.4 1003.6 608.1 1004.1 765.6 1004.5 640.9 1004.9 762.7 1005.3 619.7 1005.8 762.7M1007.0 618.5 1007.4 730.2 1007.9 639.7 1008.3 718.6 1008.7 643.4 1009.1 766.9 1009.6 636.2M1011.2 644.8 1011.7 747.0 1012.1 635.7 1012.5 759.2 1012.9 609.7 1013.3 766.0 1013.8 632.5 1014.2 759.2 1014.6 632.9 1015.0 776.4M1016.7 742.9 1017.1 619.5 1017.6 739.8 1018.0 611.6 1018.4 761.8 1018.8 608.7M1020.1 739.4 1020.5 671.8 1020.9 757.9 1021.4 620.2 1021.8 761.5 1022.2 619.8M1023.1 624.1 1023.5 733.4 1023.9 642.5 1024.3 769.8 1024.7 641.4 1025.2 745.9 1025.6 668.3 1026.0 726.2 1026.4 655.0 1026.9 728.8 1027.3 633.9 1027.7 714.7 1028.1 664.7 1028.5 718.4 1029.0 621.2M1030.2 748.9 1030.7 661.2 1031.1 765.0 1031.5 661.3 1031.9 717.5 1032.3 634.6 1032.8 769.5 1033.2 647.8 1033.6 769.5 1034.0 646.3 1034.4 775.3 1034.9 620.9 1035.3 769.6 1035.7 607.1 1036.1 766.9M1037.8 761.4 1038.2 653.5 1038.7 752.8 1039.1 649.6 1039.5 726.4 1039.9 638.5 1040.4 766.1 1040.8 632.0 1041.2 738.6 1041.6 653.8 1042.0 738.9 1042.5 641.8 1042.9 732.9M1044.6 758.6 1045.0 627.7 1045.4 755.8 1045.8 610.4 1046.3 758.1 1046.7 661.2 1047.1 741.8 1047.5 633.8 1048.0 762.8M1048.8 719.0 1049.2 636.8 1049.6 757.5 1050.1 618.3 1050.5 744.6 1050.9 654.7M1052.6 662.9 1053.0 749.4 1053.4 629.4 1053.9 751.7 1054.3 653.4M1054.7 718.9 1055.1 671.4 1055.5 735.2 1056.0 611.9 1056.4 742.9M1057.2 767.3 1057.7 630.1 1058.1 744.2 1058.5 631.5 1058.9 768.2 1059.3 646.1 1059.8 724.2 1060.2 611.8 1060.6 756.0 1061.0 643.2 1061.5 741.6 1061.9 663.7 1062.3 752.2 1062.7 618.2M1063.6 623.4 1064.0 762.4 1064.4 646.4 1064.8 756.5 1065.3 607.8 1065.7 761.0 1066.1 657.0 1066.5 757.9 1066.9 626.5 1067.4 764.5 1067.8 623.1 1068.2 772.3 1068.6 607.5 1069.1 728.3M1070.7 720.2 1071.2 640.0 1071.6 755.2 1072.0 639.8 1072.4 725.4 1072.9 635.2 1073.3 729.4 1073.7 636.0 1074.1 761.0 1074.5 648.6 1075.0 744.6 1075.4 627.2 1075.8 750.0M1076.2 617.4 1076.6 771.1 1077.1 608.1 1077.5 724.9 1077.9 636.4 1078.3 721.1 1078.8 623.3 1079.2 741.3 1079.6 614.6 1080.0 747.0M1081.7 742.5 1082.1 615.5 1082.6 719.9 1083.0 664.7 1083.4 759.4 1083.8 646.7 1084.2 743.9 1084.7 641.5 1085.1 776.3 1085.5 627.7 1085.9 767.8 1086.4 615.2 1086.8 769.2M1088.5 771.3 1088.9 612.7 1089.3 746.6 1089.7 611.4 1090.2 763.8 1090.6 669.3 1091.0 756.2 1091.4 617.8 1091.8 714.3 1092.3 643.2 1092.7 756.9 1093.1 634.9M1094.4 732.1 1094.8 613.5 1095.2 738.2 1095.6 636.7 1096.1 753.6 1096.5 649.7 1096.9 742.5 1097.3 635.0 1097.7 769.8 1098.2 615.0 1098.6 725.9 1099.0 635.1M1099.4 763.2 1099.9 612.0 1100.3 749.9 1100.7 627.3 1101.1 756.9 1101.5 625.1 1102.0 771.2 1102.4 607.0 1102.8 776.6 1103.2 661.7 1103.7 761.1 1104.1 642.5 1104.5 733.4 1104.9 663.8M1105.3 772.2 1105.8 612.1 1106.2 749.8 1106.6 635.5 1107.0 728.0 1107.5 610.2 1107.9 763.5 1108.3 658.2 1108.7 752.6 1109.1 606.5 1109.6 732.3 1110.0 643.5 1110.4 739.2 1110.8 643.6M1112.1 730.9 1112.5 624.4 1112.9 746.0 1113.4 615.0 1113.8 762.9 1114.2 614.1 1114.6 724.2 1115.1 617.7 1115.5 764.5 1115.9 649.1 1116.3 709.0 1116.7 663.8 1117.2 764.3 1117.6 608.0M1118.8 741.7 1119.3 666.6 1119.7 756.7 1120.1 614.1 1120.5 768.3M1121.8 618.2 1122.2 724.2 1122.6 614.4 1123.1 773.3 1123.5 612.9 1123.9 763.1 1124.3 616.5 1124.8 750.2 1125.2 673.1 1125.6 758.9M1126.4 723.6 1126.9 660.9 1127.3 770.7 1127.7 611.5 1128.1 715.1 1128.6 671.7 1129.0 760.0 1129.4 649.1 1129.8 769.9 1130.2 637.7 1130.7 760.9M1131.1 668.7 1131.5 764.6 1131.9 655.8 1132.4 743.5 1132.8 636.2 1133.2 736.6 1133.6 652.5 1134.0 744.7 1134.5 668.2 1134.9 724.3 1135.3 661.2 1135.7 769.0 1136.2 647.7 1136.6 776.2 1137.0 611.7M1138.3 776.4 1138.7 639.0 1139.1 747.0 1139.5 624.7 1139.9 747.4 1140.4 651.1 1140.8 762.0 1141.2 654.2 1141.6 740.6 1142.1 671.3 1142.5 736.5 1142.9 617.1M1143.7 656.5 1144.2 741.3 1144.6 648.7 1145.0 710.0 1145.4 667.9 1145.9 727.7 1146.3 617.8 1146.7 764.6 1147.1 617.1 1147.5 759.9 1148.0 606.3 1148.4 731.9M1148.8 622.8 1149.2 744.8 1149.7 608.4 1150.1 744.4 1150.5 621.8 1150.9 764.5 1151.3 608.2 1151.8 763.9 1152.2 646.6 1152.6 757.1 1153.0 617.6 1153.5 773.8 1153.9 652.3 1154.3 761.9M1155.6 662.1 1156.0 751.9 1156.4 629.3 1156.8 736.8 1157.3 628.1 1157.7 723.6 1158.1 630.8 1158.5 750.2 1158.9 615.6 1159.4 761.3 1159.8 665.6 1160.2 751.5 1160.6 661.5 1161.0 749.7M1161.9 760.4 1162.3 673.0 1162.7 750.0 1163.2 657.7 1163.6 748.4 1164.0 635.8M1165.3 734.7 1165.7 636.8 1166.1 731.0 1166.5 655.9 1167.0 756.1 1167.4 658.9M1167.8 765.9 1168.2 643.4 1168.6 720.7 1169.1 618.2 1169.5 711.9 1169.9 648.8 1170.3 757.5 1170.8 672.1 1171.2 760.2 1171.6 631.5 1172.0 775.8 1172.4 647.6 1172.9 767.6M1174.1 665.9 1174.6 737.7 1175.0 616.6 1175.4 708.8 1175.8 627.2 1176.2 749.3 1176.7 620.9 1177.1 739.6 1177.5 609.8 1177.9 720.8 1178.4 640.7M1178.8 735.3 1179.2 631.7 1179.6 728.9 1180.0 642.6 1180.5 744.8M1181.7 649.6 1182.1 723.6 1182.6 622.3 1183.0 764.3 1183.4 672.0 1183.8 765.0 1184.3 612.8 1184.7 745.7M1185.5 765.5 1185.9 610.3 1186.4 729.5 1186.8 622.7M1187.6 644.1 1188.1 772.2 1188.5 627.5 1188.9 750.1 1189.3 638.8 1189.7 745.2 1190.2 670.3 1190.6 751.8 1191.0 609.5 1191.4 721.2 1191.9 669.9 1192.3 755.7 1192.7 616.1M1193.1 743.5 1193.5 665.2 1194.0 756.9 1194.4 625.8 1194.8 730.0M1196.5 730.2 1196.9 644.3 1197.3 757.9 1197.8 625.1 1198.2 768.6M1199.0 761.3 1199.5 672.9 1199.9 745.8 1200.3 625.2 1200.7 764.8 1201.1 647.5M1202.8 634.3 1203.2 729.8 1203.7 613.0 1204.1 712.9 1204.5 631.7 1204.9 770.4 1205.4 626.6 1205.8 723.4 1206.2 632.4 1206.6 767.4 1207.0 627.3 1207.5 771.9M1208.3 740.4 1208.7 661.8 1209.2 759.6 1209.6 636.5 1210.0 767.0 1210.4 638.8 1210.8 761.2 1211.3 660.1M1213.0 618.8 1213.4 758.4 1213.8 658.0 1214.2 736.9 1214.6 649.9 1215.1 734.3 1215.5 630.1M1216.3 625.7 1216.8 771.1 1217.2 606.6 1217.6 709.6 1218.0 628.6 1218.4 752.9 1218.9 639.6 1219.3 762.2 1219.7 612.9 1220.1 730.9 1220.6 627.0 1221.0 724.4 1221.4 639.1 1221.8 738.6 1222.2 616.3M1223.5 749.4 1223.9 622.6 1224.3 757.2 1224.8 632.8 1225.2 722.6 1225.6 650.7 1226.0 774.7 1226.5 629.5 1226.9 720.9 1227.3 644.7M1228.6 740.3 1229.0 649.1 1229.4 711.6 1229.8 635.6 1230.3 773.2 1230.7 637.7 1231.1 741.6 1231.5 643.0 1231.9 732.5 1232.4 646.6 1232.8 727.2M1234.5 770.5 1234.9 635.4 1235.3 756.4 1235.7 636.5 1236.2 741.1M1237.0 753.6 1237.4 656.5 1237.9 735.3 1238.3 642.2 1238.7 752.1 1239.1 643.3 1239.5 732.4M1240.0 648.2 1240.4 776.8 1240.8 620.9 1241.2 769.6 1241.7 612.0 1242.1 723.1 1242.5 633.1 1242.9 761.5 1243.3 636.2M1243.8 749.9 1244.2 627.2 1244.6 756.1 1245.0 657.6 1245.4 715.4 1245.9 650.4 1246.3 713.5 1246.7 647.8 1247.1 713.8 1247.6 663.3 1248.0 757.6 1248.4 656.1 1248.8 760.9M1249.7 768.0 1250.1 631.7 1250.5 770.0 1250.9 640.1 1251.4 742.8 1251.8 610.2 1252.2 759.3 1252.6 639.9 1253.0 770.0 1253.5 621.5 1253.9 756.9 1254.3 670.7 1254.7 771.0M1255.6 711.3 1256.0 645.8 1256.4 727.2 1256.8 652.7M1257.3 747.1 1257.7 635.1 1258.1 759.0 1258.5 613.7 1259.0 759.8 1259.4 613.7 1259.8 743.6 1260.2 659.8 1260.6 760.7 1261.1 606.5 1261.5 725.3 1261.9 628.3 1262.3 740.7 1262.8 607.2 1263.2 713.2M1263.6 636.7 1264.0 738.8 1264.4 643.8 1264.9 762.7 1265.3 674.4 1265.7 733.1 1266.1 608.0M1266.5 745.5 1267.0 672.4 1267.4 755.3 1267.8 625.8M1269.1 774.3 1269.5 651.0 1269.9 736.1 1270.3 623.4 1270.8 738.0M1271.6 713.9 1272.0 655.8 1272.5 722.4 1272.9 643.6 1273.3 760.2 1273.7 656.2 1274.1 734.0 1274.6 665.3M1276.3 626.4 1276.7 750.3 1277.1 623.4 1277.5 766.0 1277.9 615.1 1278.4 709.0 1278.8 610.1M1279.6 606.6 1280.1 763.8 1280.5 637.7 1280.9 714.5 1281.3 664.0 1281.7 764.6 1282.2 673.3 1282.6 715.0 1283.0 623.3 1283.4 754.6 1283.9 624.6 1284.3 716.7 1284.7 608.5 1285.1 763.0 1285.5 672.6M1287.2 628.3 1287.6 776.2 1288.1 670.3 1288.5 766.2 1288.9 610.0 1289.3 718.5 1289.8 611.9M1291.4 657.4 1291.9 725.5 1292.3 631.5 1292.7 743.9 1293.1 608.0 1293.6 763.4 1294.0 666.0 1294.4 716.9 1294.8 650.0 1295.2 766.8M1296.1 768.1 1296.5 613.7 1296.9 762.0 1297.4 631.7 1297.8 768.3M1298.2 616.1 1298.6 766.9 1299.0 612.9 1299.5 750.0 1299.9 664.9 1300.3 755.7 1300.7 623.2 1301.2 774.3 1301.6 620.5 1302.0 771.3 1302.4 611.1 1302.8 736.8 1303.3 610.3 1303.7 752.3M1305.4 742.5 1305.8 621.9 1306.2 731.8 1306.6 639.4 1307.1 757.2 1307.5 607.9 1307.9 761.9 1308.3 631.9 1308.7 739.9M1310.4 740.7 1310.9 649.6 1311.3 764.5 1311.7 625.2 1312.1 709.4 1312.5 611.9 1313.0 742.1 1313.4 660.5 1313.8 719.5 1314.2 666.3M1315.9 660.6 1316.3 743.7 1316.8 625.7 1317.2 744.3 1317.6 649.1 1318.0 745.0 1318.5 637.9 1318.9 752.9 1319.3 629.8 1319.7 736.0 1320.1 624.3 1320.6 769.0 1321.0 608.1 1321.4 755.3 1321.8 648.9M1322.3 708.9 1322.7 639.8 1323.1 776.5 1323.5 606.8 1323.9 760.7 1324.4 656.2 1324.8 727.8 1325.2 659.2 1325.6 743.8 1326.1 608.9 1326.5 728.3 1326.9 616.5 1327.3 751.1 1327.7 650.8M1328.2 745.1 1328.6 668.0 1329.0 756.2 1329.4 611.5M1331.1 644.8 1331.5 759.9 1332.0 654.7 1332.4 713.6 1332.8 635.4 1333.2 747.4 1333.6 658.6 1334.1 725.6 1334.5 662.6 1334.9 726.9 1335.3 659.6 1335.8 757.2 1336.2 612.3 1336.6 754.1 1337.0 653.6M1338.3 738.9 1338.7 621.5 1339.1 709.8 1339.6 619.4 1340.0 769.3M1340.8 771.3 1341.2 629.4 1341.7 764.9 1342.1 636.0 1342.5 740.5 1342.9 650.5 1343.4 751.8M1344.2 713.4 1344.6 624.9 1345.0 713.3 1345.5 626.5 1345.9 761.1 1346.3 610.8 1346.7 757.3 1347.2 626.1 1347.6 759.1 1348.0 624.8 1348.4 759.8 1348.8 624.3M1350.5 656.3 1350.9 714.4 1351.4 668.2 1351.8 751.0 1352.2 614.2 1352.6 721.6M1354.3 724.9 1354.7 606.6 1355.2 745.7 1355.6 652.8 1356.0 755.6 1356.4 668.8M1357.7 721.6 1358.1 651.8 1358.5 733.0 1359.0 656.1 1359.4 755.4 1359.8 616.6 1360.2 745.3 1360.7 623.5 1361.1 772.0 1361.5 616.4 1361.9 740.3M1362.8 726.6 1363.2 616.1 1363.6 718.3 1364.0 647.1 1364.5 719.9M1366.1 725.1 1366.6 624.8 1367.0 747.7 1367.4 647.7 1367.8 723.0 1368.3 619.9 1368.7 727.1 1369.1 646.3 1369.5 772.6 1369.9 612.9 1370.4 761.5 1370.8 626.9M1371.2 768.4 1371.6 615.4 1372.0 767.7 1372.5 620.1M1372.9 742.6 1373.3 619.9 1373.7 741.2 1374.2 631.4 1374.6 712.4M1375.4 758.6 1375.8 665.1 1376.3 719.5 1376.7 613.2 1377.1 771.4 1377.5 607.7M1379.2 634.3 1379.6 718.1 1380.1 658.9 1380.5 755.0 1380.9 640.2 1381.3 752.7 1381.8 610.5 1382.2 717.1 1382.6 659.0 1383.0 775.9 1383.4 662.4M1385.1 642.8 1385.6 725.0 1386.0 616.9 1386.4 729.5 1386.8 621.9 1387.2 745.4 1387.7 635.0M1389.4 613.6 1389.8 711.6 1390.2 642.9 1390.6 744.5M1391.5 732.4 1391.9 606.4 1392.3 737.9 1392.7 654.3 1393.1 762.2 1393.6 625.7 1394.0 754.6 1394.4 608.8 1394.8 770.6 1395.3 648.1M1395.7 771.4 1396.1 612.2 1396.5 715.6 1396.9 634.6 1397.4 769.8 1397.8 641.6 1398.2 737.3 1398.6 636.2 1399.1 768.4 1399.5 672.6M1400.7 774.7 1401.2 626.4 1401.6 732.5 1402.0 626.2 1402.4 761.9 1402.9 661.3 1403.3 764.8 1403.7 629.2 1404.1 753.6 1404.5 626.2 1405.0 755.2M1406.2 674.0 1406.7 736.1 1407.1 654.4 1407.5 753.9 1407.9 664.0 1408.3 722.1 1408.8 634.2 1409.2 765.2 1409.6 636.3 1410.0 715.7M1411.7 763.1 1412.1 611.5 1412.6 767.1 1413.0 620.4 1413.4 769.7 1413.8 624.8M1414.7 610.8 1415.1 725.0 1415.5 636.7 1415.9 774.1 1416.4 624.6 1416.8 755.3 1417.2 640.6 1417.6 718.1M1418.5 710.1 1418.9 658.3 1419.3 745.4 1419.7 638.9M1420.2 756.2 1420.6 629.7 1421.0 763.8 1421.4 631.1 1421.8 765.6 1422.3 669.7 1422.7 745.7 1423.1 609.5 1423.5 762.8 1424.0 615.6 1424.4 775.5 1424.8 658.8 1425.2 747.5 1425.6 612.6 1426.1 736.3M1427.3 666.2 1427.8 772.1 1428.2 621.1 1428.6 764.7M1429.0 612.0 1429.4 751.5 1429.9 615.1 1430.3 764.7 1430.7 638.1 1431.1 746.0 1431.6 655.4 1432.0 744.2 1432.4 614.9 1432.8 713.2 1433.2 609.1 1433.7 727.8 1434.1 635.0M1435.8 657.2 1436.2 742.0 1436.6 615.5 1437.0 744.9 1437.5 645.4 1437.9 722.6 1438.3 671.9 1438.7 766.5 1439.1 636.3 1439.6 735.2 1440.0 619.8 1440.4 749.7M1441.3 775.0 1441.7 641.1 1442.1 737.1 1442.5 607.3M1442.9 742.8 1443.4 637.4 1443.8 767.8 1444.2 626.3 1444.6 731.3 1445.1 668.4M1445.5 716.4 1445.9 660.0 1446.3 762.6 1446.7 643.4 1447.2 750.0 1447.6 649.4 1448.0 714.1 1448.4 607.0 1448.9 758.1 1449.3 623.9 1449.7 756.0 1450.1 668.4 1450.5 767.3M1451.0 613.4 1451.4 730.0 1451.8 614.1 1452.2 775.1 1452.7 657.9 1453.1 772.2 1453.5 668.9 1453.9 763.0 1454.3 607.5 1454.8 723.1 1455.2 638.7 1455.6 711.7 1456.0 633.2 1456.4 715.4M1457.3 726.7 1457.7 656.5 1458.1 758.3 1458.6 652.9 1459.0 724.0 1459.4 649.4 1459.8 740.1 1460.2 624.7 1460.7 753.0 1461.1 630.4M1461.5 759.8 1461.9 650.5 1462.4 759.0 1462.8 667.1 1463.2 719.1 1463.6 631.2 1464.0 757.1 1464.5 650.1 1464.9 776.2 1465.3 662.5 1465.7 766.6 1466.2 632.6 1466.6 753.9M1467.4 716.1 1467.8 639.2 1468.3 759.0 1468.7 620.7 1469.1 767.0 1469.5 648.4 1470.0 748.8 1470.4 662.1 1470.8 743.7 1471.2 640.4 1471.6 765.5 1472.1 664.3 1472.5 714.9M1472.9 627.7 1473.3 765.5 1473.8 666.2 1474.2 759.2 1474.6 659.6 1475.0 769.0 1475.4 626.9 1475.9 727.9 1476.3 643.2 1476.7 768.0 1477.1 609.0 1477.5 713.5 1478.0 639.7M1478.4 720.9 1478.8 608.2 1479.2 774.3 1479.7 640.5 1480.1 768.7 1480.5 651.9 1480.9 768.4"/>
<polyline fill="none" stroke="rgba(225,40,5,0.2)" stroke-width="1.2" stroke-linejoin="bevel" points="267.0,932.0 267.4,940.4 267.8,933.3 268.3,944.7 268.7,941.8 269.1,944.7 269.5,957.6 270.0,953.0 270.4,955.4 270.8,962.1 271.2,967.1 271.6,965.1 272.1,970.0 272.5,959.1 272.9,957.9 273.3,953.6 273.8,945.7 274.2,940.9 274.6,936.4 275.0,938.8 275.4,935.0 275.9,930.3 276.3,928.0 276.7,917.6 277.1,919.2 277.6,916.6 278.0,914.8 278.4,903.6 278.8,901.6 279.2,890.2 279.7,893.0 280.1,882.0 280.5,884.9 280.9,895.6 281.3,880.1 281.8,892.9 282.2,890.2 282.6,886.7 283.0,889.5 283.5,889.2 283.9,890.9 284.3,884.5 284.7,882.2 285.1,881.6 285.6,879.2 286.0,882.8 286.4,878.8 286.8,886.6 287.3,872.7 287.7,875.6 288.1,875.4 288.5,868.8 288.9,885.4 289.4,864.6 289.8,872.8 290.2,870.3 290.6,878.7 291.1,860.9 291.5,873.2 291.9,863.7 292.3,864.9 292.7,861.2 293.2,865.7 293.6,856.3 294.0,859.6 294.4,860.2 294.9,865.4 295.3,844.9 295.7,861.2 296.1,857.2 296.5,849.4 297.0,851.5 297.4,846.2 297.8,853.9 298.2,845.6 298.7,841.8 299.1,839.9 299.5,838.2 299.9,836.4 300.3,831.4 300.8,842.8 301.2,823.1 301.6,813.6 302.0,827.5 302.4,825.5 302.9,826.0 303.3,821.6 303.7,820.0 304.1,820.3 304.6,821.3 305.0,813.1 305.4,810.9 305.8,818.7 306.2,809.7 306.7,800.3 307.1,812.6 307.5,803.1 307.9,794.3 308.4,789.1 308.8,793.1 309.2,785.5 309.6,781.8 310.0,778.2 310.5,779.1 310.9,783.8 311.3,774.3 311.7,767.1 312.2,774.9 312.6,772.1 313.0,775.4 313.4,776.8 313.8,770.5 314.3,770.4 314.7,770.7 315.1,765.7 315.5,773.6 316.0,776.6 316.4,771.0 316.8,769.0 317.2,768.7 317.6,766.2 318.1,766.0 318.5,767.6 318.9,765.4 319.3,767.1 319.8,761.8 320.2,770.3 320.6,768.8 321.0,763.2 321.4,757.9 321.9,768.0 322.3,769.9 322.7,757.1 323.1,753.7 323.5,748.8 324.0,749.8 324.4,738.2 324.8,742.2 325.2,731.8 325.7,732.8 326.1,724.3 326.5,718.6 326.9,708.4 327.3,707.4 327.8,704.8 328.2,704.4 328.6,698.0 329.0,689.2 329.5,689.7 329.9,687.8 330.3,679.6 330.7,675.8 331.1,673.5 331.6,676.4 332.0,672.7 332.4,663.6 332.8,667.0 333.3,660.6 333.7,656.9 334.1,663.4 334.5,659.0 334.9,649.6 335.4,650.7 335.8,650.1 336.2,642.5 336.6,642.3 337.1,643.4 337.5,629.9 337.9,636.9 338.3,636.2 338.7,632.7 339.2,621.9 339.6,626.9 340.0,619.1 340.4,625.0 340.9,624.6 341.3,622.3 341.7,617.4 342.1,617.6 342.5,623.5 343.0,615.1 343.4,620.8 343.8,620.4 344.2,616.3 344.6,627.7 345.1,616.7 345.5,625.5 345.9,606.2 346.3,604.7 346.8,618.6 347.2,616.5 347.6,611.7 348.0,612.3 348.4,603.5 348.9,608.6 349.3,606.3 349.7,609.4 350.1,613.5 350.6,608.0 351.0,607.8 351.4,601.3 351.8,600.8 352.2,601.5 352.7,598.1 353.1,603.3 353.5,592.0 353.9,602.8 354.4,588.2 354.8,595.7 355.2,585.7 355.6,594.9 356.0,586.4 356.5,585.9 356.9,585.8 357.3,577.9 357.7,574.4 358.2,568.3 358.6,581.2 359.0,570.9 359.4,569.7 359.8,570.5 360.3,579.5 360.7,563.7 361.1,573.6 361.5,571.6 362.0,576.7 362.4,567.1 362.8,574.4 363.2,580.9 363.6,585.0 364.1,586.1 364.5,576.0 364.9,581.0 365.3,581.2 365.7,576.5 366.2,577.1 366.6,587.9 367.0,586.5 367.4,585.7 367.9,592.8 368.3,583.7 368.7,591.5 369.1,590.1 369.5,590.7 370.0,594.1 370.4,593.6 370.8,595.0 371.2,595.9 371.7,604.4 372.1,595.2 372.5,602.1 372.9,601.2 373.3,597.8 373.8,603.9 374.2,597.4 374.6,607.4 375.0,599.3 375.5,600.1 375.9,603.1 376.3,604.7 376.7,604.4 377.1,603.7 377.6,598.0 378.0,594.0 378.4,600.1 378.8,598.3 379.3,592.0 379.7,600.0 380.1,595.9 380.5,590.0 380.9,595.7 381.4,587.0 381.8,588.4 382.2,592.5 382.6,581.1 383.1,585.7 383.5,576.8 383.9,583.6 384.3,574.4 384.7,575.8 385.2,565.6 385.6,568.2 386.0,571.4 386.4,566.6 386.8,553.7 387.3,563.5 387.7,560.7 388.1,552.4 388.5,557.9 389.0,544.1 389.4,545.9 389.8,548.6 390.2,546.9 390.6,544.2 391.1,530.9 391.5,525.2 391.9,532.3 392.3,522.5 392.8,527.0 393.2,520.4 393.6,529.6 394.0,527.1 394.4,524.6 394.9,520.8 395.3,519.6 395.7,516.7 396.1,518.4 396.6,516.4 397.0,516.0 397.4,510.6 397.8,519.7 398.2,511.1 398.7,514.7 399.1,513.1 399.5,501.8 399.9,496.8 400.4,508.7 400.8,499.9 401.2,500.7 401.6,497.8 402.0,498.2 402.5,490.8 402.9,494.4 403.3,491.4 403.7,492.0 404.2,480.2 404.6,493.1 405.0,489.5 405.4,484.1 405.8,492.6 406.3,500.0 406.7,506.6 407.1,507.8 407.5,518.0 407.9,515.8 408.4,515.2 408.8,520.6 409.2,531.0 409.6,528.8 410.1,539.1 410.5,542.0 410.9,542.2 411.3,546.2 411.7,542.9 412.2,545.8 412.6,545.3 413.0,547.3 413.4,545.1 413.9,551.8 414.3,551.6 414.7,552.1 415.1,561.0 415.5,563.6 416.0,561.2 416.4,570.1 416.8,569.4 417.2,571.1 417.7,564.9 418.1,562.1 418.5,572.5 418.9,572.6 419.3,575.7 419.8,575.5 420.2,580.5 420.6,574.7 421.0,580.2 421.5,574.4 421.9,569.2 422.3,578.9 422.7,589.0 423.1,576.0 423.6,589.5 424.0,583.1 424.4,585.7 424.8,589.0 425.3,591.1 425.7,587.1 426.1,593.4 426.5,596.1 426.9,599.2 427.4,593.4 427.8,605.1 428.2,608.0 428.6,611.6 429.0,596.0 429.5,604.1 429.9,596.3 430.3,604.7 430.7,602.8 431.2,592.4 431.6,587.7 432.0,593.0 432.4,592.2 432.8,583.1 433.3,582.8 433.7,569.9 434.1,575.4 434.5,576.5 435.0,573.8 435.4,577.6 435.8,562.6 436.2,554.9 436.6,564.3 437.1,557.0 437.5,559.2 437.9,559.3 438.3,556.9 438.8,558.8 439.2,556.6 439.6,541.1 440.0,546.5 440.4,553.9 440.9,541.3 441.3,545.6 441.7,539.2 442.1,535.7 442.6,542.8 443.0,538.6 443.4,530.9 443.8,534.3 444.2,522.4 444.7,523.2 445.1,528.2 445.5,520.1 445.9,510.9 446.4,513.5 446.8,508.8 447.2,508.8 447.6,503.1 448.0,493.4 448.5,488.2 448.9,485.6 449.3,480.9 449.7,484.3 450.1,481.2 450.6,477.3 451.0,470.2 451.4,464.6 451.8,466.9 452.3,458.5 452.7,458.4 453.1,447.0 453.5,449.8 453.9,455.4 454.4,441.6 454.8,436.7 455.2,440.9 455.6,448.4 456.1,446.6 456.5,437.7 456.9,436.4 457.3,437.3 457.7,432.9 458.2,436.5 458.6,434.2 459.0,428.1 459.4,431.4 459.9,432.1 460.3,428.6 460.7,426.7 461.1,435.1 461.5,438.8 462.0,428.2 462.4,426.8 462.8,430.2 463.2,426.2 463.7,422.9 464.1,431.9 464.5,420.2 464.9,420.9 465.3,420.4 465.8,418.6 466.2,420.8 466.6,423.7 467.0,426.8 467.5,422.6 467.9,419.0 468.3,412.4 468.7,417.0 469.1,412.3 469.6,415.4 470.0,419.4 470.4,415.7 470.8,413.7 471.2,411.0 471.7,414.1 472.1,414.5 472.5,409.6 472.9,411.3 473.4,417.4 473.8,405.7 474.2,411.0 474.6,407.6 475.0,419.6 475.5,415.1 475.9,414.5 476.3,413.8 476.7,413.1 477.2,412.9 477.6,404.3 478.0,412.4 478.4,413.7 478.8,404.4 479.3,414.4 479.7,413.4 480.1,403.4 480.5,407.9 481.0,408.5 481.4,407.3 481.8,411.2 482.2,403.5 482.6,408.0 483.1,409.9 483.5,411.9 483.9,408.7 484.3,407.2 484.8,411.2 485.2,398.9 485.6,411.9 486.0,406.1 486.4,401.6 486.9,405.1 487.3,398.9 487.7,398.2 488.1,406.2 488.6,404.5 489.0,411.5 489.4,404.5 489.8,402.9 490.2,404.7 490.7,417.0 491.1,409.6 491.5,407.0 491.9,405.6 492.3,405.3 492.8,409.8 493.2,412.7 493.6,416.3 494.0,416.5 494.5,412.8 494.9,408.9 495.3,408.2 495.7,402.0 496.1,408.0 496.6,414.8 497.0,411.6 497.4,415.1 497.8,407.6 498.3,418.0 498.7,415.5 499.1,414.6 499.5,416.5 499.9,404.9 500.4,413.5 500.8,413.2 501.2,426.6 501.6,418.8 502.1,418.6 502.5,425.9 502.9,418.5 503.3,430.9 503.7,422.5 504.2,426.6 504.6,424.0 505.0,432.9 505.4,420.7 505.9,434.8 506.3,429.2 506.7,434.4 507.1,430.1 507.5,437.5 508.0,438.4 508.4,441.4 508.8,441.3 509.2,443.8 509.7,446.6 510.1,441.5 510.5,439.1 510.9,439.8 511.3,449.7 511.8,446.1 512.2,453.7 512.6,450.3 513.0,446.7 513.4,456.4 513.9,462.2 514.3,453.8 514.7,451.5 515.1,453.1 515.6,462.0 516.0,456.5 516.4,458.5 516.8,464.5 517.2,462.6 517.7,464.2 518.1,462.4 518.5,463.1 518.9,467.9 519.4,469.0 519.8,472.1 520.2,468.6 520.6,474.2 521.0,476.6 521.5,476.7 521.9,480.7 522.3,484.4 522.7,482.6 523.2,483.9 523.6,481.0 524.0,488.6 524.4,488.5 524.8,489.4 525.3,488.8 525.7,497.0 526.1,507.7 526.5,499.9 527.0,500.2 527.4,500.8 527.8,494.9 528.2,496.8 528.6,492.1 529.1,490.9 529.5,493.6 529.9,492.3 530.3,489.5 530.8,485.2 531.2,488.7 531.6,481.3 532.0,488.4 532.4,482.1 532.9,482.4 533.3,484.7 533.7,482.4 534.1,472.8 534.5,476.2 535.0,477.7 535.4,469.9 535.8,462.7 536.2,472.0 536.7,470.8 537.1,471.4 537.5,467.4 537.9,465.0 538.3,463.0 538.8,465.6 539.2,459.0 539.6,456.8 540.0,450.1 540.5,455.4 540.9,447.9 541.3,450.5 541.7,436.1 542.1,445.2 542.6,442.1 543.0,438.9 543.4,445.2 543.8,439.6 544.3,435.6 544.7,432.3 545.1,441.6 545.5,434.9 545.9,433.0 546.4,425.0 546.8,432.8 547.2,427.8 547.6,422.6 548.1,421.7 548.5,413.3 548.9,422.0 549.3,412.6 549.7,419.8 550.2,412.5 550.6,410.2 551.0,413.1 551.4,411.0 551.9,403.5 552.3,406.7 552.7,408.3 553.1,403.0 553.5,396.6 554.0,400.1 554.4,395.3 554.8,395.6 555.2,396.9 555.6,395.0 556.1,392.8 556.5,384.9 556.9,392.4 557.3,388.4 557.8,386.0 558.2,387.1 558.6,393.5 559.0,377.6 559.4,374.7 559.9,383.9 560.3,376.0 560.7,384.8 561.1,373.9 561.6,375.5 562.0,380.8 562.4,380.5 562.8,377.8 563.2,377.2 563.7,373.9 564.1,371.9 564.5,372.3 564.9,378.3 565.4,375.1 565.8,371.4 566.2,372.1 566.6,373.8 567.0,374.7 567.5,368.2 567.9,367.8 568.3,369.0 568.7,378.6 569.2,367.4 569.6,371.3 570.0,358.1 570.4,368.0 570.8,357.2 571.3,357.9 571.7,359.1 572.1,360.6 572.5,361.3 573.0,361.3 573.4,359.9 573.8,356.2 574.2,369.0 574.6,358.4 575.1,358.9 575.5,364.2 575.9,358.7 576.3,356.2 576.7,354.3 577.2,360.4 577.6,346.5 578.0,346.3 578.4,350.5 578.9,340.0 579.3,344.8 579.7,352.6 580.1,345.2 580.5,348.6 581.0,351.7 581.4,344.1 581.8,351.2 582.2,347.9 582.7,346.6 583.1,351.5 583.5,356.5 583.9,359.0 584.3,361.8 585.0,371.0 788.0,548.0 788.4,550.6 788.8,543.5 789.3,548.6 789.7,552.0 790.1,547.7 790.5,555.3 791.0,537.6 791.4,543.8 791.8,537.9 792.2,536.8 792.6,540.5 793.1,542.8 793.5,543.7 793.9,543.8 794.3,555.3 794.8,545.2 795.2,527.5 795.6,539.6 796.0,533.3 796.4,533.5 796.9,545.8 797.3,534.5 797.7,521.9 798.1,537.2 798.6,532.5 799.0,525.8 799.4,527.7 799.8,530.0 800.2,534.4 800.7,531.8 801.1,535.5 801.5,548.0 801.9,529.8 802.3,529.9 802.8,534.0 803.2,543.6 803.6,531.2 804.0,546.4 804.5,527.4 804.9,529.5 805.3,536.6 805.7,531.1 806.1,533.0 806.6,540.7 807.0,542.8 807.4,538.7 807.8,536.2 808.3,547.7 808.7,541.3 809.1,537.1 809.5,547.4 809.9,532.8 810.4,540.5 810.8,544.1 811.2,539.6 811.6,535.9 812.1,542.5 812.5,536.5 812.9,536.3 813.3,533.5 813.7,550.0 814.2,537.4 814.6,549.8 815.0,544.9 815.4,540.9 815.9,547.9 816.3,545.7 816.7,545.2 817.1,535.2 817.5,545.8 818.0,552.1 818.4,549.8 818.8,553.8 819.2,557.8 819.7,550.8 820.1,562.2 820.5,538.3 820.9,547.8 821.3,532.3 821.8,556.2 822.2,551.7 822.6,563.3 823.0,549.5 823.4,539.0 823.9,563.2 824.3,545.9 824.7,547.5 825.1,556.2 825.6,562.9 826.0,556.1 826.4,562.0 826.8,548.6 827.2,575.0 827.7,563.5 828.1,565.8 828.5,570.2 828.9,568.3 829.4,569.6 829.8,562.8 830.2,569.6 830.6,574.5 831.0,579.9 831.5,572.8 831.9,575.4 832.3,577.7 832.7,579.8 833.2,577.7 833.6,574.9 834.0,573.6 834.4,585.5 834.8,580.1 835.3,578.7 835.7,603.3 836.1,585.6 836.5,585.9 837.0,581.4 837.4,573.7 837.8,589.2 838.2,581.1 838.6,582.6 839.1,589.8 839.5,590.2 839.9,585.2 840.3,584.2 840.8,599.2 841.2,588.9 841.6,578.2 842.0,591.1 842.4,587.4 842.9,587.0 843.3,592.0 843.7,589.3 844.1,602.0 844.5,589.1 845.0,589.2 845.4,595.4 845.8,583.1 846.2,593.9 846.7,586.1 847.1,594.6 847.5,580.1 847.9,588.8 848.3,574.4 848.8,582.3 849.2,585.3 849.6,588.4 850.0,598.5 850.5,597.3 850.9,574.9 851.3,578.7 851.7,592.5 852.1,586.6 852.6,573.8 853.0,586.5 853.4,575.0 853.8,576.6 854.3,573.6 854.7,580.4 855.1,597.7 855.5,584.3 855.9,580.7 856.4,598.8 856.8,577.7 857.2,579.6 857.6,578.6 858.1,583.1 858.5,577.7 858.9,589.8 859.3,577.4 859.7,583.1 860.2,580.5 860.6,572.7 861.0,571.6 861.4,577.8 861.9,561.9 862.3,577.7 862.7,577.9 863.1,578.1 863.5,576.3 864.0,579.1 864.4,573.9 864.8,580.6 865.2,564.5 865.6,582.0 866.1,569.2 866.5,578.5 866.9,571.6 867.3,571.6 867.8,568.8 868.2,583.5 868.6,566.3 869.0,565.2 869.4,574.9 869.9,574.9 870.3,573.1 870.7,565.9 871.1,567.8 871.6,578.4 872.0,564.6 872.4,575.8 872.8,576.4 873.2,572.0 873.7,562.3 874.1,583.9 874.5,571.2 874.9,571.4 875.4,567.2 875.8,562.9 876.2,567.4 876.6,570.4 877.0,562.9 877.5,569.3 877.9,576.3 878.3,571.1 878.7,567.1 879.2,574.8 879.6,573.7 880.0,573.3 880.4,561.2 880.8,553.8 881.3,571.8 881.7,566.4 882.1,563.2 882.5,568.9 883.0,562.1 883.4,560.7 883.8,577.3 884.2,553.4 884.6,570.1 885.1,571.1 885.5,576.2 885.9,565.5 886.3,567.2 886.7,557.2 887.2,563.7 887.6,548.7 888.0,559.3 888.4,562.9 888.9,562.3 889.3,559.5 889.7,570.9 890.1,551.6 890.5,563.5 891.0,559.6 891.4,562.6 891.8,562.6 892.2,575.6 892.7,554.5 893.1,571.2 893.5,571.5 893.9,560.7 894.3,557.2 894.8,552.8 895.2,555.3 895.6,575.4 896.0,546.0 896.5,564.1 896.9,556.0 897.3,573.9 897.7,562.8 898.1,551.1 898.6,556.8 899.0,561.6 899.4,561.0 899.8,553.5 900.3,557.9 900.7,556.6 901.1,563.0 901.5,561.4 901.9,560.9 902.4,555.1 902.8,564.5 903.2,554.9 903.6,552.9 904.1,555.5 904.5,556.1 904.9,556.1 905.3,544.6 905.7,567.4 906.2,562.1 906.6,566.8 907.0,554.7 907.4,562.5 907.8,558.5 908.3,557.2 908.7,569.4 909.1,552.6 909.5,560.5 910.0,544.3 910.4,560.2 910.8,554.9 911.2,548.9 911.6,551.9 912.1,541.2 912.5,548.6 912.9,557.2 913.3,537.6 913.8,563.5 914.2,562.8 914.6,550.8 915.0,545.7 915.4,546.3 915.9,547.1 916.3,550.8 916.7,571.2 917.1,548.1 917.6,561.3 918.0,564.7 918.4,549.4 918.8,554.1 919.2,560.7 919.7,551.4 920.1,564.7 920.5,571.0 920.9,555.7 921.4,550.3 921.8,560.2 922.2,558.7 922.6,551.9 923.0,557.0 923.5,559.3 923.9,563.1 924.3,568.3 924.7,557.7 925.2,552.8 925.6,551.4 926.0,576.4 926.4,561.4 926.8,562.2 927.3,583.1 927.7,574.5 928.1,583.1 928.5,567.0 928.9,564.2 929.4,566.1 929.8,575.2 930.2,574.3 930.6,575.0 931.1,588.8 931.5,583.3 931.9,567.0 932.3,578.5 932.7,580.3 933.2,571.8 933.6,594.0 934.0,585.0 934.4,590.0 934.9,576.5 935.3,573.0 935.7,587.0 936.1,581.2 936.5,579.3 937.0,583.5 937.4,586.4 937.8,586.8 938.2,585.1 938.7,590.6 939.1,608.5 939.5,597.3 939.9,586.4 940.3,605.1 940.8,588.3 941.2,581.8 941.6,583.8 942.0,580.1 942.5,603.3 942.9,588.4 943.3,587.0 943.7,593.9 944.1,597.3 944.6,590.9 945.0,596.5 945.4,601.4 945.8,606.8 946.3,596.5 946.7,608.0 947.1,606.8 947.5,609.7 947.9,603.0 948.4,599.4 948.8,615.2 949.2,612.8 949.6,603.5 950.0,602.3 950.5,612.2 950.9,621.0 951.3,608.9 951.7,623.6 952.2,607.6 952.6,607.4 953.0,607.9 953.4,611.7 953.8,593.0 954.3,604.1 954.7,611.5 955.1,591.2 955.5,603.4 956.0,606.5 956.4,612.8 956.8,611.3 957.2,599.6 957.6,613.9 958.1,591.1 958.5,588.6 958.9,607.4 959.3,602.3 959.8,589.2 960.2,604.4 960.6,602.5 961.0,601.1 961.4,592.4 961.9,586.1 962.3,582.8 962.7,592.7 963.1,592.7 963.6,589.8 964.0,589.1 964.4,599.1 964.8,584.2 965.2,586.5 965.7,605.3 966.1,586.4 966.5,586.0 966.9,597.5 967.4,578.9 967.8,605.0 968.2,586.6 968.6,591.8 969.0,590.6 969.5,594.9 969.9,598.5 970.3,612.2 970.7,607.2 971.1,618.6 971.6,614.1 972.0,599.7 972.4,608.4 972.8,603.7 973.3,604.8 973.7,608.5 974.1,610.0 974.5,610.3 974.9,592.0 975.4,605.7 975.8,603.3 976.2,619.4 976.6,604.4 977.1,605.7 977.5,605.7 977.9,611.0 978.3,597.2 978.7,604.2 979.2,604.1 979.6,604.9 980.0,603.3 980.4,601.4 980.9,605.9 981.3,596.0 981.7,616.8 982.1,605.4 982.5,592.8 983.0,603.7 983.4,612.4 983.8,604.4 984.2,604.8 984.7,589.8 985.1,616.1 985.5,606.5 985.9,592.3 986.3,603.1 986.8,616.6 987.2,609.1 987.6,596.0 988.0,602.6 988.5,608.4 988.9,621.3 989.3,608.5 989.7,612.1 990.1,604.6 990.6,606.9 991.0,599.2 991.4,596.7 991.8,596.1 992.2,601.3 992.7,614.0 993.1,604.6 993.5,613.0 993.9,609.8 994.4,605.1 994.8,600.2 995.2,618.6 995.6,611.2 996.0,611.7 996.5,620.2 996.9,613.0 997.3,603.7 997.7,604.5 998.2,605.5 998.6,617.1 999.0,593.8 999.4,588.5 999.8,598.2 1000.3,602.0 1000.7,598.2 1001.1,609.2 1001.5,607.2 1002.0,603.1 1002.4,604.2 1002.8,617.5 1003.2,618.5 1003.6,617.0 1004.1,602.4 1004.5,614.1 1004.9,597.6 1005.3,593.1 1005.8,618.5 1006.2,612.9 1006.6,611.9 1007.0,617.5 1007.4,619.5 1007.9,610.1 1008.3,610.4 1008.7,613.1 1009.1,615.0 1009.6,610.0 1010.0,599.1 1010.4,625.9 1010.8,602.8 1011.2,603.6 1011.7,611.8 1012.1,607.1 1012.5,610.9 1012.9,623.9 1013.3,616.8 1013.8,603.2 1014.2,608.6 1014.6,605.6 1015.0,614.7 1015.5,599.3 1015.9,598.6 1016.3,593.3 1016.7,608.5 1017.1,607.4 1017.6,609.5 1018.0,610.2 1018.4,595.5 1018.8,601.1 1019.3,595.9 1019.7,612.0 1020.1,608.9 1020.5,591.4 1020.9,604.1 1021.4,599.9 1021.8,598.6 1022.2,601.4 1022.6,591.0 1023.1,591.8 1023.5,588.0 1023.9,586.8 1024.3,582.8 1024.7,597.1 1025.2,591.8 1025.6,584.7 1026.0,573.5 1026.4,599.8 1026.9,582.8 1027.3,583.3 1027.7,586.1 1028.1,593.2 1028.5,578.6 1029.0,563.8 1029.4,577.8 1029.8,579.5 1030.2,575.2 1030.7,589.1 1031.1,575.3 1031.5,580.3 1031.9,571.9 1032.3,582.6 1032.8,572.0 1033.2,582.3 1033.6,577.1 1034.0,576.9 1034.4,577.6 1034.9,563.7 1035.3,571.4 1035.7,575.7 1036.1,571.1 1036.6,581.8 1037.0,579.2 1037.4,567.5 1037.8,580.5 1038.2,570.3 1038.7,575.4 1039.1,579.9 1039.5,563.9 1039.9,566.4 1040.4,572.1 1040.8,571.3 1041.2,561.6 1041.6,578.5 1042.0,575.4 1042.5,576.0 1042.9,577.2 1043.3,580.5 1043.7,570.1 1044.2,578.6 1044.6,573.7 1045.0,573.8 1045.4,571.5 1045.8,586.5 1046.3,561.3 1046.7,573.8 1047.1,584.1 1047.5,577.4 1048.0,575.5 1048.4,587.9 1048.8,574.4 1049.2,579.4 1049.6,584.7 1050.1,578.4 1050.5,578.0 1050.9,581.7 1051.3,587.7 1051.8,573.9 1052.2,583.7 1052.6,579.1 1053.0,576.7 1053.4,569.4 1053.9,590.4 1054.3,581.8 1054.7,579.3 1055.1,574.8 1055.5,587.9 1056.0,571.6 1056.4,568.7 1056.8,569.8 1057.2,574.6 1057.7,576.7 1058.1,560.1 1058.5,575.7 1058.9,575.1 1059.3,580.3 1059.8,570.1 1060.2,582.3 1060.6,585.6 1061.0,567.3 1061.5,568.9 1061.9,577.3 1062.3,578.5 1062.7,569.7 1063.1,577.4 1063.6,558.1 1064.0,575.3 1064.4,571.5 1064.8,574.3 1065.3,571.1 1065.7,572.1 1066.1,563.9 1066.5,576.4 1066.9,551.7 1067.4,567.8 1067.8,561.2 1068.2,578.9 1068.6,557.0 1069.1,565.4 1069.5,564.1 1069.9,569.5 1070.3,563.5 1070.7,555.7 1071.2,561.9 1071.6,570.7 1072.0,567.5 1072.4,556.9 1072.9,553.0 1073.3,552.5 1073.7,560.6 1074.1,560.0 1074.5,558.4 1075.0,557.0 1075.4,561.8 1075.8,569.5 1076.2,567.1 1076.6,556.8 1077.1,565.2 1077.5,557.7 1077.9,568.2 1078.3,566.2 1078.8,565.4 1079.2,574.2 1079.6,565.7 1080.0,564.6 1080.4,567.8 1080.9,550.5 1081.3,555.3 1081.7,554.9 1082.1,563.2 1082.6,557.2 1083.0,548.0 1083.4,551.2 1083.8,554.9 1084.2,552.8 1084.7,552.5 1085.1,545.1 1085.5,556.0 1085.9,545.7 1086.4,551.7 1086.8,549.8 1087.2,551.7 1087.6,563.6 1088.0,550.2 1088.5,550.1 1088.9,535.2 1089.3,546.1 1089.7,553.7 1090.2,549.5 1090.6,556.9 1091.0,549.0 1091.4,556.4 1091.8,552.3 1092.3,557.7 1092.7,547.9 1093.1,555.8 1093.5,545.9 1094.0,543.5 1094.4,556.6 1094.8,538.6 1095.2,541.5 1095.6,559.2 1096.1,548.6 1096.5,549.7 1096.9,548.3 1097.3,546.2 1097.7,560.0 1098.2,546.1 1098.6,555.5 1099.0,545.1 1099.4,539.4 1099.9,541.5 1100.3,542.8 1100.7,559.6 1101.1,536.4 1101.5,542.8 1102.0,528.0 1102.4,541.8 1102.8,536.1 1103.2,538.9 1103.7,535.8 1104.1,531.1 1104.5,533.9 1104.9,532.5 1105.3,538.9 1105.8,530.2 1106.2,528.8 1106.6,519.6 1107.0,533.9 1107.5,525.5 1107.9,519.3 1108.3,533.1 1108.7,530.2 1109.1,522.6 1109.6,522.1 1110.0,511.4 1110.4,503.1 1110.8,519.6 1111.3,507.2 1111.7,521.2 1112.1,513.2 1112.5,516.4 1112.9,509.9 1113.4,515.6 1113.8,517.2 1114.2,511.7 1114.6,515.6 1115.1,515.2 1115.5,508.2 1115.9,496.8 1116.3,512.6 1116.7,503.4 1117.2,499.8 1117.6,493.6 1118.0,493.6 1118.4,514.7 1118.8,517.3 1119.3,513.7 1119.7,518.0 1120.1,489.8 1120.5,508.0 1121.0,492.4 1121.4,492.3 1121.8,507.5 1122.2,510.3 1122.6,497.9 1123.1,493.4 1123.5,494.4 1123.9,504.6 1124.3,512.8 1124.8,521.2 1125.2,510.9 1125.6,501.1 1126.0,501.3 1126.4,509.8 1126.9,514.5 1127.3,496.4 1127.7,513.1 1128.1,507.3 1128.6,518.2 1129.0,501.2 1129.4,519.2 1129.8,521.9 1130.2,521.3 1130.7,521.7 1131.1,511.1 1131.5,510.4 1131.9,501.4 1132.4,508.4 1132.8,502.5 1133.2,511.8 1133.6,512.2 1134.0,505.5 1134.5,517.0 1134.9,496.0 1135.3,500.9 1135.7,516.3 1136.2,502.3 1136.6,509.1 1137.0,486.7 1137.4,515.3 1137.8,500.1 1138.3,500.6 1138.7,512.5 1139.1,506.3 1139.5,493.9 1139.9,515.8 1140.4,499.9 1140.8,504.3 1141.2,502.5 1141.6,504.2 1142.1,504.6 1142.5,505.4 1142.9,504.8 1143.3,525.9 1143.7,510.7 1144.2,513.1 1144.6,504.9 1145.0,522.0 1145.4,513.4 1145.9,510.6 1146.3,506.3 1146.7,516.1 1147.1,498.6 1147.5,506.1 1148.0,508.8 1148.4,514.0 1148.8,512.8 1149.2,501.5 1149.7,515.9 1150.1,508.5 1150.5,507.7 1150.9,512.2 1151.3,508.9 1151.8,507.9 1152.2,508.2 1152.6,515.5 1153.0,511.0 1153.5,512.1 1153.9,505.8 1154.3,518.5 1154.7,511.0 1155.1,504.9 1155.6,517.5 1156.0,500.3 1156.4,504.7 1156.8,515.2 1157.3,506.4 1157.7,507.1 1158.1,506.7 1158.5,509.2 1158.9,512.2 1159.4,513.1 1159.8,504.0 1160.2,505.2 1160.6,494.7 1161.0,504.9 1161.5,511.5 1161.9,508.3 1162.3,516.2 1162.7,506.0 1163.2,509.6 1163.6,513.6 1164.0,499.6 1164.4,516.9 1164.8,497.6 1165.3,505.3 1165.7,494.2 1166.1,504.9 1166.5,499.8 1167.0,513.3 1167.4,492.4 1167.8,509.6 1168.2,508.8 1168.6,510.0 1169.1,512.9 1169.5,511.7 1169.9,499.5 1170.3,509.9 1170.8,500.4 1171.2,500.7 1171.6,503.3 1172.0,501.7 1172.4,500.9 1172.9,512.1 1173.3,505.6 1173.7,492.3 1174.1,500.3 1174.6,502.6 1175.0,522.1 1175.4,508.4 1175.8,503.4 1176.2,510.5 1176.7,491.8 1177.1,518.7 1177.5,506.0 1177.9,502.1 1178.4,514.8 1178.8,503.9 1179.2,502.1 1179.6,515.7 1180.0,524.1 1180.5,508.3 1180.9,510.5 1181.3,510.6 1181.7,514.6 1182.1,509.2 1182.6,513.3 1183.0,507.3 1183.4,512.2 1183.8,519.1 1184.3,503.3 1184.7,519.1 1185.1,526.4 1185.5,510.1 1185.9,512.5 1186.4,516.2 1186.8,515.5 1187.2,508.6 1187.6,522.2 1188.1,521.1 1188.5,524.2 1188.9,522.4 1189.3,513.6 1189.7,517.1 1190.2,514.2 1190.6,536.7 1191.0,516.5 1191.4,525.6 1191.9,530.1 1192.3,519.1 1192.7,521.5 1193.1,522.7 1193.5,531.0 1194.0,511.6 1194.4,521.9 1194.8,523.0 1195.2,523.1 1195.7,514.4 1196.1,526.3 1196.5,523.3 1196.9,513.1 1197.3,512.7 1197.8,533.7 1198.2,515.7 1198.6,509.1 1199.0,522.8 1199.5,512.4 1199.9,519.8 1200.3,523.4 1200.7,513.6 1201.1,510.3 1201.6,532.8 1202.0,510.9 1202.4,511.9 1202.8,519.8 1203.2,522.9 1203.7,519.4 1204.1,513.8 1204.5,526.2 1204.9,512.3 1205.4,514.3 1205.8,524.5 1206.2,527.0 1206.6,523.1 1207.0,526.2 1207.5,522.7 1207.9,525.5 1208.3,515.1 1208.7,514.9 1209.2,523.9 1209.6,526.9 1210.0,517.1 1210.4,514.8 1210.8,519.0 1211.3,527.4 1211.7,519.4 1212.1,518.2 1212.5,518.9 1213.0,517.9 1213.4,523.5 1213.8,517.1 1214.2,520.8 1214.6,518.4 1215.1,514.6 1215.5,520.2 1215.9,522.0 1216.3,508.1 1216.8,521.6 1217.2,521.6 1217.6,519.1 1218.0,512.8 1218.4,515.5 1218.9,524.6 1219.3,513.9 1219.7,526.8 1220.1,517.2 1220.6,522.4 1221.0,499.4 1221.4,523.7 1221.8,521.2 1222.2,508.9 1222.7,526.8 1223.1,516.7 1223.5,511.9 1223.9,529.5 1224.3,529.5 1224.8,527.2 1225.2,525.8 1225.6,527.8 1226.0,508.0 1226.5,519.0 1226.9,529.6 1227.3,524.0 1227.7,520.9 1228.1,518.3 1228.6,517.7 1229.0,514.8 1229.4,519.3 1229.8,500.6 1230.3,527.2 1230.7,520.1 1231.1,500.3 1231.5,520.1 1231.9,521.5 1232.4,519.2 1232.8,524.7 1233.2,525.4 1233.6,524.0 1234.1,508.1 1234.5,504.9 1234.9,514.2 1235.3,525.6 1235.7,506.4 1236.2,515.7 1236.6,515.2 1237.0,518.1 1237.4,508.0 1237.9,522.8 1238.3,517.0 1238.7,525.1 1239.1,519.6 1239.5,518.4 1240.0,525.5 1240.4,527.4 1240.8,521.9 1241.2,513.3 1241.7,520.6 1242.1,525.4 1242.5,523.4 1242.9,529.2 1243.3,525.9 1243.8,515.2 1244.2,532.4 1244.6,522.5 1245.0,522.4 1245.4,518.9 1245.9,508.9 1246.3,503.5 1246.7,521.8 1247.1,524.1 1247.6,528.7 1248.0,511.1 1248.4,516.2 1248.8,513.3 1249.2,521.2 1249.7,511.4 1250.1,510.8 1250.5,506.2 1250.9,515.1 1251.4,523.0 1251.8,507.7 1252.2,513.0 1252.6,525.8 1253.0,510.4 1253.5,501.4 1253.9,509.1 1254.3,521.2 1254.7,515.7 1255.2,509.0 1255.6,510.8 1256.0,523.8 1256.4,505.6 1256.8,524.7 1257.3,512.1 1257.7,518.8 1258.1,507.4 1258.5,508.6 1259.0,531.2 1259.4,513.4 1259.8,507.6 1260.2,517.9 1260.6,509.4 1261.1,507.3 1261.5,508.0 1261.9,510.2 1262.3,523.2 1262.8,502.4 1263.2,516.6 1263.6,502.3 1264.0,517.6 1264.4,509.9 1264.9,517.7 1265.3,511.5 1265.7,519.7 1266.1,517.9 1266.5,515.9 1267.0,517.4 1267.4,509.6 1267.8,510.2 1268.2,507.2 1268.7,516.5 1269.1,515.1 1269.5,511.3 1269.9,504.4 1270.3,511.7 1270.8,515.4 1271.2,517.4 1271.6,507.5 1272.0,516.7 1272.5,503.2 1272.9,508.4 1273.3,504.0 1273.7,512.8 1274.1,504.9 1274.6,505.9 1275.0,518.1 1275.4,518.0 1275.8,499.1 1276.3,518.0 1276.7,516.4 1277.1,516.8 1277.5,507.1 1277.9,519.5 1278.4,514.2 1278.8,500.6 1279.2,495.1 1279.6,502.5 1280.1,512.9 1280.5,532.2 1280.9,500.1 1281.3,512.8 1281.7,510.2 1282.2,510.2 1282.6,513.5 1283.0,516.0 1283.4,509.3 1283.9,520.9 1284.3,514.1 1284.7,516.7 1285.1,516.8 1285.5,501.6 1286.0,519.4 1286.4,501.6 1286.8,508.9 1287.2,505.9 1287.6,501.5 1288.1,506.9 1288.5,496.7 1288.9,511.3 1289.3,506.3 1289.8,502.1 1290.2,507.9 1290.6,508.8 1291.0,505.5 1291.4,493.2 1291.9,509.3 1292.3,508.0 1292.7,519.6 1293.1,521.9 1293.6,513.8 1294.0,509.4 1294.4,508.3 1294.8,502.2 1295.2,502.4 1295.7,499.1 1296.1,499.8 1296.5,498.5 1296.9,513.3 1297.4,516.4 1297.8,484.4 1298.2,504.1 1298.6,489.3 1299.0,493.8 1299.5,502.3 1299.9,501.6 1300.3,525.2 1300.7,503.9 1301.2,496.9 1301.6,492.3 1302.0,506.4 1302.4,497.1 1302.8,499.8 1303.3,492.8 1303.7,510.5 1304.1,505.4 1304.5,510.2 1305.0,498.2 1305.4,502.4 1305.8,499.2 1306.2,494.4 1306.6,505.6 1307.1,488.6 1307.5,496.6 1307.9,492.0 1308.3,501.3 1308.7,490.0 1309.2,498.9 1309.6,493.6 1310.0,496.0 1310.4,496.0 1310.9,512.4 1311.3,491.7 1311.7,506.8 1312.1,495.0 1312.5,517.9 1313.0,498.6 1313.4,503.9 1313.8,486.7 1314.2,506.6 1314.7,495.1 1315.1,490.0 1315.5,495.5 1315.9,506.3 1316.3,490.2 1316.8,495.5 1317.2,502.1 1317.6,500.9 1318.0,486.4 1318.5,482.0 1318.9,499.5 1319.3,495.8 1319.7,497.3 1320.1,498.6 1320.6,491.7 1321.0,495.8 1321.4,486.5 1321.8,488.5 1322.3,490.9 1322.7,485.4 1323.1,487.9 1323.5,500.4 1323.9,487.9 1324.4,494.0 1324.8,489.6 1325.2,478.6 1325.6,492.3 1326.1,473.6 1326.5,489.3 1326.9,485.4 1327.3,479.8 1327.7,490.4 1328.2,482.2 1328.6,498.8 1329.0,472.3 1329.4,494.5 1329.8,491.3 1330.3,487.4 1330.7,475.4 1331.1,474.8 1331.5,468.6 1332.0,484.9 1332.4,481.1 1332.8,489.1 1333.2,484.1 1333.6,486.5 1334.1,470.8 1334.5,482.8 1334.9,484.5 1335.3,488.9 1335.8,462.9 1336.2,489.2 1336.6,468.6 1337.0,482.1 1337.4,483.1 1337.9,496.7 1338.3,486.1 1338.7,482.9 1339.1,476.8 1339.6,476.2 1340.0,473.3 1340.4,481.4 1340.8,477.3 1341.2,491.9 1341.7,476.3 1342.1,489.5 1342.5,482.7 1342.9,478.4 1343.4,485.4 1343.8,471.6 1344.2,487.4 1344.6,484.9 1345.0,481.5 1345.5,487.4 1345.9,489.6 1346.3,492.8 1346.7,486.7 1347.2,482.7 1347.6,490.3 1348.0,473.7 1348.4,498.4 1348.8,484.7 1349.3,490.1 1349.7,498.3 1350.1,482.7 1350.5,485.4 1350.9,489.7 1351.4,482.2 1351.8,496.2 1352.2,476.5 1352.6,485.9 1353.1,491.4 1353.5,490.9 1353.9,485.7 1354.3,500.1 1354.7,499.7 1355.2,490.4 1355.6,495.4 1356.0,481.3 1356.4,497.0 1356.9,492.1 1357.3,495.7 1357.7,494.9 1358.1,492.2 1358.5,489.8 1359.0,480.0 1359.4,477.9 1359.8,481.2 1360.2,495.6 1360.7,491.1 1361.1,485.6 1361.5,485.0 1361.9,494.9 1362.3,489.3 1362.8,501.0 1363.2,487.2 1363.6,482.6 1364.0,475.0 1364.5,484.2 1364.9,492.6 1365.3,479.5 1365.7,494.4 1366.1,494.3 1366.6,481.1 1367.0,492.7 1367.4,480.0 1367.8,490.6 1368.3,486.4 1368.7,494.2 1369.1,482.4 1369.5,488.3 1369.9,493.3 1370.4,486.1 1370.8,486.9 1371.2,484.3 1371.6,496.7 1372.0,491.3 1372.5,494.9 1372.9,495.8 1373.3,493.0 1373.7,492.5 1374.2,485.3 1374.6,489.2 1375.0,493.1 1375.4,480.1 1375.8,481.7 1376.3,493.6 1376.7,500.3 1377.1,491.6 1377.5,488.1 1378.0,497.8 1378.4,494.2 1378.8,496.9 1379.2,492.4 1379.6,488.1 1380.1,492.0 1380.5,496.4 1380.9,493.3 1381.3,474.4 1381.8,497.0 1382.2,481.9 1382.6,476.3 1383.0,475.8 1383.4,486.4 1383.9,467.8 1384.3,474.8 1384.7,484.3 1385.1,487.5 1385.6,493.6 1386.0,482.6 1386.4,477.1 1386.8,476.4 1387.2,486.9 1387.7,482.1 1388.1,483.2 1388.5,475.9 1388.9,474.5 1389.4,475.7 1389.8,481.5 1390.2,482.2 1390.6,490.0 1391.0,484.0 1391.5,480.0 1391.9,487.4 1392.3,468.4 1392.7,473.2 1393.1,482.5 1393.6,484.6 1394.0,478.6 1394.4,467.7 1394.8,468.0 1395.3,479.3 1395.7,480.8 1396.1,463.4 1396.5,474.0 1396.9,476.4 1397.4,484.0 1397.8,484.2 1398.2,473.3 1398.6,469.5 1399.1,474.6 1399.5,471.4 1399.9,470.5 1400.3,479.9 1400.7,475.4 1401.2,457.1 1401.6,474.7 1402.0,478.2 1402.4,466.0 1402.9,486.3 1403.3,479.0 1403.7,477.0 1404.1,473.5 1404.5,484.9 1405.0,485.8 1405.4,473.5 1405.8,462.7 1406.2,488.4 1406.7,479.2 1407.1,466.3 1407.5,489.1 1407.9,463.7 1408.3,477.8 1408.8,472.1 1409.2,473.2 1409.6,484.0 1410.0,500.5 1410.5,478.8 1410.9,494.4 1411.3,479.7 1411.7,478.5 1412.1,485.9 1412.6,472.0 1413.0,496.2 1413.4,478.8 1413.8,474.1 1414.2,483.2 1414.7,481.9 1415.1,478.3 1415.5,486.4 1415.9,494.7 1416.4,481.9 1416.8,478.3 1417.2,490.0 1417.6,490.3 1418.0,478.0 1418.5,481.5 1418.9,476.7 1419.3,472.3 1419.7,488.1 1420.2,485.9 1420.6,492.4 1421.0,494.7 1421.4,462.9 1421.8,472.5 1422.3,480.1 1422.7,494.1 1423.1,481.1 1423.5,487.2 1424.0,475.0 1424.4,489.9 1424.8,490.6 1425.2,489.9 1425.6,486.8 1426.1,477.2 1426.5,492.6 1426.9,474.9 1427.3,473.5 1427.8,474.0 1428.2,480.4 1428.6,488.4 1429.0,479.3 1429.4,482.6 1429.9,478.2 1430.3,483.3 1430.7,479.7 1431.1,470.5 1431.6,497.6 1432.0,485.1 1432.4,485.4 1432.8,483.0 1433.2,474.7 1433.7,478.1 1434.1,484.1 1434.5,488.2 1434.9,482.6 1435.3,475.0 1435.8,477.8 1436.2,472.0 1436.6,476.6 1437.0,478.0 1437.5,474.9 1437.9,481.9 1438.3,494.0 1438.7,475.4 1439.1,469.1 1439.6,474.9 1440.0,487.8 1440.4,472.4 1440.8,487.4 1441.3,488.0 1441.7,478.0 1442.1,469.8 1442.5,483.3 1442.9,473.7 1443.4,480.6 1443.8,493.3 1444.2,482.3 1444.6,467.0 1445.1,479.8 1445.5,472.6 1445.9,492.8 1446.3,482.5 1446.7,476.0 1447.2,481.2 1447.6,478.8 1448.0,473.4 1448.4,471.3 1448.9,479.9 1449.3,475.2 1449.7,478.0 1450.1,484.1 1450.5,487.8 1451.0,474.5 1451.4,481.5 1451.8,471.8 1452.2,464.3 1452.7,486.2 1453.1,489.8 1453.5,474.5 1453.9,470.2 1454.3,466.7 1454.8,475.7 1455.2,483.8 1455.6,480.5 1456.0,467.7 1456.4,478.7 1456.9,466.5 1457.3,474.5 1457.7,479.2 1458.1,479.0 1458.6,462.8 1459.0,470.6 1459.4,475.2 1459.8,478.8 1460.2,472.3 1460.7,479.0 1461.1,484.2 1461.5,463.7 1461.9,476.8 1462.4,491.2 1462.8,476.4 1463.2,473.1 1463.6,482.6 1464.0,481.0 1464.5,475.2 1464.9,457.0 1465.3,473.1 1465.7,474.9 1466.2,476.8 1466.6,483.7 1467.0,461.2 1467.4,464.6 1467.8,473.3 1468.3,478.9 1468.7,467.9 1469.1,466.2 1469.5,475.6 1470.0,473.7 1470.4,479.1 1470.8,471.8 1471.2,475.5 1471.6,461.8 1472.1,476.5 1472.5,476.3 1472.9,471.2 1473.3,464.6 1473.8,484.6 1474.2,479.9 1474.6,472.4 1475.0,480.0 1475.4,486.3 1475.9,471.4 1476.3,484.2 1476.7,479.1 1477.1,472.0 1477.5,472.0 1478.0,483.3 1478.4,481.8 1478.8,478.9 1479.2,468.1 1479.7,471.4 1480.1,474.3 1480.5,464.6 1480.9,463.7"/>
<polyline fill="none" stroke="#a01d0c" stroke-width="1.1" points="583,352 585,371 788,548"/>
<polyline fill="none" stroke="#a01d0c" stroke-width="1.2" points="267.0,932.0 267.4,940.4 267.8,933.3 268.3,944.7 268.7,941.8 269.1,944.7 269.5,957.6 270.0,953.0 270.4,955.4 270.8,962.1 271.2,967.1 271.6,965.1 272.1,970.0 272.5,959.1 272.9,957.9 273.3,953.6"/>
<line x1="585" y1="733" x2="788" y2="622.800" stroke="#e6d59c" stroke-width="1.15"/>
<line x1="267" y1="691.500" x2="1481" y2="691.500" stroke="rgba(212,248,172,0.8)" stroke-width="1.1"/></g>
</svg>
<div class="a t" style="top:276.22px;font-size:10.4px;color:#c4c4c4;right:1756.70px;transform:scaleX(0.6669);transform-origin:100% 50%;">11</div>
<div class="a t" style="top:276.22px;font-size:10.4px;color:#c4c4c4;right:1710.70px;transform:scaleX(0.8747);transform-origin:100% 50%;">1.52</div>
<div class="a t" style="top:276.22px;font-size:10.4px;color:#c4c4c4;right:1661.50px;transform:scaleX(0.9840);transform-origin:100% 50%;">79.75</div>
<div class="a t" style="top:344.57px;font-size:10.4px;color:#c4c4c4;right:1756.70px;transform:scaleX(0.8043);transform-origin:100% 50%;">10</div>
<div class="a t" style="top:344.57px;font-size:10.4px;color:#c4c4c4;right:1710.70px;transform:scaleX(0.8747);transform-origin:100% 50%;">1.44</div>
<div class="a t" style="top:344.57px;font-size:10.4px;color:#c4c4c4;right:1661.50px;transform:scaleX(0.9835);transform-origin:100% 50%;">79.5</div>
<div class="a t" style="top:412.91px;font-size:10.4px;color:#c4c4c4;right:1756.70px;transform:scaleX(1.0032);transform-origin:100% 50%;">9</div>
<div class="a t" style="top:412.91px;font-size:10.4px;color:#c4c4c4;right:1710.70px;transform:scaleX(0.8747);transform-origin:100% 50%;">1.36</div>
<div class="a t" style="top:412.91px;font-size:10.4px;color:#c4c4c4;right:1661.50px;transform:scaleX(0.9840);transform-origin:100% 50%;">79.25</div>
<div class="a t" style="top:481.26px;font-size:10.4px;color:#c4c4c4;right:1756.70px;transform:scaleX(1.0032);transform-origin:100% 50%;">8</div>
<div class="a t" style="top:481.26px;font-size:10.4px;color:#c4c4c4;right:1710.70px;transform:scaleX(0.8747);transform-origin:100% 50%;">1.28</div>
<div class="a t" style="top:481.26px;font-size:10.4px;color:#c4c4c4;right:1661.50px;transform:scaleX(0.9946);transform-origin:100% 50%;">79</div>
<div class="a t" style="top:549.60px;font-size:10.4px;color:#c4c4c4;right:1756.70px;transform:scaleX(1.0032);transform-origin:100% 50%;">7</div>
<div class="a t" style="top:549.60px;font-size:10.4px;color:#c4c4c4;right:1710.70px;transform:scaleX(0.8234);transform-origin:100% 50%;">1.2</div>
<div class="a t" style="top:549.60px;font-size:10.4px;color:#c4c4c4;right:1661.50px;transform:scaleX(0.9840);transform-origin:100% 50%;">78.75</div>
<div class="a t" style="top:617.95px;font-size:10.4px;color:#c4c4c4;right:1756.70px;transform:scaleX(1.0032);transform-origin:100% 50%;">6</div>
<div class="a t" style="top:617.95px;font-size:10.4px;color:#c4c4c4;right:1710.70px;transform:scaleX(0.7710);transform-origin:100% 50%;">1.12</div>
<div class="a t" style="top:617.95px;font-size:10.4px;color:#c4c4c4;right:1661.50px;transform:scaleX(0.9835);transform-origin:100% 50%;">78.5</div>
<div class="a t" style="top:686.29px;font-size:10.4px;color:#c4c4c4;right:1756.70px;transform:scaleX(1.0032);transform-origin:100% 50%;">5</div>
<div class="a t" style="top:686.29px;font-size:10.4px;color:#c4c4c4;right:1710.70px;transform:scaleX(0.8747);transform-origin:100% 50%;">1.04</div>
<div class="a t" style="top:686.29px;font-size:10.4px;color:#c4c4c4;right:1661.50px;transform:scaleX(0.9840);transform-origin:100% 50%;">78.25</div>
<div class="a t" style="top:754.64px;font-size:10.4px;color:#c4c4c4;right:1756.70px;transform:scaleX(1.0032);transform-origin:100% 50%;">4</div>
<div class="a t" style="top:754.64px;font-size:10.4px;color:#c4c4c4;right:1710.70px;transform:scaleX(0.9835);transform-origin:100% 50%;">0.96</div>
<div class="a t" style="top:754.64px;font-size:10.4px;color:#c4c4c4;right:1661.50px;transform:scaleX(0.9946);transform-origin:100% 50%;">78</div>
<div class="a t" style="top:822.98px;font-size:10.4px;color:#c4c4c4;right:1756.70px;transform:scaleX(1.0032);transform-origin:100% 50%;">3</div>
<div class="a t" style="top:822.98px;font-size:10.4px;color:#c4c4c4;right:1710.70px;transform:scaleX(0.9835);transform-origin:100% 50%;">0.88</div>
<div class="a t" style="top:822.98px;font-size:10.4px;color:#c4c4c4;right:1661.50px;transform:scaleX(0.9840);transform-origin:100% 50%;">77.75</div>
<div class="a t" style="top:891.33px;font-size:10.4px;color:#c4c4c4;right:1756.70px;transform:scaleX(1.0032);transform-origin:100% 50%;">2</div>
<div class="a t" style="top:891.33px;font-size:10.4px;color:#c4c4c4;right:1710.70px;transform:scaleX(0.9756);transform-origin:100% 50%;">0.8</div>
<div class="a t" style="top:891.33px;font-size:10.4px;color:#c4c4c4;right:1661.50px;transform:scaleX(0.9835);transform-origin:100% 50%;">77.5</div>
<div class="a t" style="top:959.67px;font-size:10.4px;color:#c4c4c4;right:1756.70px;transform:scaleX(0.6227);transform-origin:100% 50%;">1</div>
<div class="a t" style="top:959.67px;font-size:10.4px;color:#c4c4c4;right:1710.70px;transform:scaleX(0.9835);transform-origin:100% 50%;">0.72</div>
<div class="a t" style="top:959.67px;font-size:10.4px;color:#c4c4c4;right:1661.50px;transform:scaleX(0.9840);transform-origin:100% 50%;">77.25</div>
<div class="a t" style="top:1028.02px;font-size:10.4px;color:#c4c4c4;right:1756.70px;transform:scaleX(1.0032);transform-origin:100% 50%;">0</div>
<div class="a t" style="top:1028.02px;font-size:10.4px;color:#c4c4c4;right:1710.70px;transform:scaleX(0.9835);transform-origin:100% 50%;">0.64</div>
<div class="a t" style="top:1028.02px;font-size:10.4px;color:#c4c4c4;right:1661.50px;transform:scaleX(0.9946);transform-origin:100% 50%;">77</div>
<div class="a t" style="left:112.19999999999999px;top:652px;width:60px;height:12px;line-height:12px;text-align:center;font-size:10.6px;font-weight:700;color:#d0d0d0;transform:rotate(-90deg) scaleX(1.02)">spm</div>
<div class="a t" style="left:148.3px;top:652px;width:60px;height:12px;line-height:12px;text-align:center;font-size:10.6px;font-weight:700;color:#d0d0d0;transform:rotate(-90deg) scaleX(1.02)">bbl/d</div>
<div class="a t" style="left:195.2px;top:652px;width:60px;height:12px;line-height:12px;text-align:center;font-size:10.6px;font-weight:700;color:#d0d0d0;transform:rotate(-90deg) scaleX(1.02)">psi</div>
<div class="a t" style="top:1049.92px;font-size:10.4px;color:#c4c4c4;left:-10.00px;width:600px;text-align:center;transform:scaleX(0.9417);transform-origin:50% 50%;">15:00</div>
<div class="a t" style="top:1049.92px;font-size:10.4px;color:#c4c4c4;left:65.93px;width:600px;text-align:center;transform:scaleX(0.9417);transform-origin:50% 50%;">18:00</div>
<div class="a t" style="top:1049.92px;font-size:10.4px;color:#c4c4c4;left:141.86px;width:600px;text-align:center;transform:scaleX(0.9417);transform-origin:50% 50%;">21:00</div>
<div class="a t" style="top:1049.92px;font-size:10.4px;color:#c4c4c4;left:217.79px;width:600px;text-align:center;transform:scaleX(0.8842);transform-origin:50% 50%;">5 Feb</div>
<div class="a t" style="top:1049.92px;font-size:10.4px;color:#c4c4c4;left:293.72px;width:600px;text-align:center;transform:scaleX(0.9417);transform-origin:50% 50%;">03:00</div>
<div class="a t" style="top:1049.92px;font-size:10.4px;color:#c4c4c4;left:369.65px;width:600px;text-align:center;transform:scaleX(0.9417);transform-origin:50% 50%;">06:00</div>
<div class="a t" style="top:1049.92px;font-size:10.4px;color:#c4c4c4;left:445.58px;width:600px;text-align:center;transform:scaleX(0.9417);transform-origin:50% 50%;">09:00</div>
<div class="a t" style="top:1049.92px;font-size:10.4px;color:#c4c4c4;left:521.51px;width:600px;text-align:center;transform:scaleX(0.9417);transform-origin:50% 50%;">12:00</div>
<div class="a t" style="top:1049.92px;font-size:10.4px;color:#c4c4c4;left:597.44px;width:600px;text-align:center;transform:scaleX(0.9417);transform-origin:50% 50%;">15:00</div>
<div class="a t" style="top:1049.92px;font-size:10.4px;color:#c4c4c4;left:673.37px;width:600px;text-align:center;transform:scaleX(0.9417);transform-origin:50% 50%;">18:00</div>
<div class="a t" style="top:1049.92px;font-size:10.4px;color:#c4c4c4;left:749.30px;width:600px;text-align:center;transform:scaleX(0.9417);transform-origin:50% 50%;">21:00</div>
<div class="a t" style="top:1049.92px;font-size:10.4px;color:#c4c4c4;left:825.23px;width:600px;text-align:center;transform:scaleX(0.8842);transform-origin:50% 50%;">6 Feb</div>
<div class="a t" style="top:1049.92px;font-size:10.4px;color:#c4c4c4;left:901.16px;width:600px;text-align:center;transform:scaleX(0.9417);transform-origin:50% 50%;">03:00</div>
<div class="a t" style="top:1049.92px;font-size:10.4px;color:#c4c4c4;left:977.09px;width:600px;text-align:center;transform:scaleX(0.9417);transform-origin:50% 50%;">06:00</div>
<div class="a t" style="top:1049.92px;font-size:10.4px;color:#c4c4c4;left:1053.02px;width:600px;text-align:center;transform:scaleX(0.9417);transform-origin:50% 50%;">09:00</div>
<div class="a t" style="top:1049.92px;font-size:10.4px;color:#c4c4c4;left:1128.95px;width:600px;text-align:center;transform:scaleX(0.9417);transform-origin:50% 50%;">12:00</div>
<div class="a" style="left:265.70px;top:265.00px;width:171.00px;height:94.00px;background:rgba(46,46,46,0.93);border-radius:4px;"></div>
<div class="a t" style="top:275.83px;font-size:11px;color:#c8c8c8;left:273.80px;">-</div>
<div class="a" style="left:274.00px;top:303.50px;width:12.00px;height:1.70px;background:#8f1508;"></div>
<div class="a t" style="top:299.63px;font-size:11px;color:#c8c8c8;left:293.30px;transform:scaleX(0.9928);transform-origin:0 50%;">Casing Pressure (psi)</div>
<div class="a" style="left:418.30px;top:297.80px;width:10.00px;height:13.00px;background:#3a3a3a;border-radius:2.5px;"></div>
<div class="a t" style="top:300.12px;font-size:10px;color:#c8c8c8;left:421.60px;">-</div>
<div class="a" style="left:274.00px;top:322.60px;width:12.00px;height:1.70px;background:#f5e3a0;"></div>
<div class="a t" style="top:318.73px;font-size:11px;color:#c8c8c8;left:293.30px;transform:scaleX(1.0082);transform-origin:0 50%;">Water Flow Rate (bbl/d)</div>
<div class="a" style="left:418.30px;top:316.90px;width:10.00px;height:13.00px;background:#3a3a3a;border-radius:2.5px;"></div>
<div class="a t" style="top:319.21px;font-size:10px;color:#c8c8c8;left:421.60px;">-</div>
<div class="a" style="left:274.00px;top:341.90px;width:12.00px;height:1.70px;background:#d3f29b;"></div>
<div class="a t" style="top:338.03px;font-size:11px;color:#c8c8c8;left:293.30px;transform:scaleX(0.9776);transform-origin:0 50%;">Speed SPM SP (spm)</div>
<div class="a" style="left:418.30px;top:336.20px;width:10.00px;height:13.00px;background:#3a3a3a;border-radius:2.5px;"></div>
<div class="a t" style="top:338.51px;font-size:10px;color:#c8c8c8;left:421.60px;">-</div>
<div class="a" style="left:555.50px;top:1085.70px;width:14.50px;height:1.40px;background:#8f1508;"></div>
<div class="a t" style="top:1081.73px;font-size:11px;color:#d0d0d0;left:575.00px;transform:scaleX(0.9928);transform-origin:0 50%;">Casing Pressure (psi)</div>
<div class="a" style="left:685.30px;top:1079.80px;width:28.00px;height:13.40px;background:#3c3c3c;border-radius:3px;"></div>
<div class="a t" style="top:1082.02px;font-size:10.6px;color:#d8d8d8;left:399.30px;width:600px;text-align:center;transform:scaleX(0.9197);transform-origin:50% 50%;">Raw</div>
<div class="a" style="left:723.50px;top:1085.70px;width:14.50px;height:1.40px;background:#a79c6e;"></div>
<div class="a t" style="top:1081.73px;font-size:11px;color:#d0d0d0;left:742.80px;transform:scaleX(1.0065);transform-origin:0 50%;">Water Flow Rate (bbl/d)</div>
<div class="a" style="left:864.50px;top:1079.80px;width:28.00px;height:13.40px;background:#3c3c3c;border-radius:3px;"></div>
<div class="a t" style="top:1082.02px;font-size:10.6px;color:#d8d8d8;left:578.50px;width:600px;text-align:center;transform:scaleX(0.9197);transform-origin:50% 50%;">Raw</div>
<div class="a" style="left:903.50px;top:1085.70px;width:14.50px;height:1.40px;background:#8fa56a;"></div>
<div class="a t" style="top:1081.73px;font-size:11px;color:#d0d0d0;left:922.30px;transform:scaleX(0.9776);transform-origin:0 50%;">Speed SPM SP (spm)</div>
<div class="a" style="left:1032.50px;top:1079.80px;width:28.00px;height:13.40px;background:#3c3c3c;border-radius:3px;"></div>
<div class="a t" style="top:1082.02px;font-size:10.6px;color:#d8d8d8;left:746.50px;width:600px;text-align:center;transform:scaleX(0.9197);transform-origin:50% 50%;">Raw</div>
<div class="a" style="left:130.00px;top:1119.00px;width:1351.30px;height:1.00px;background:#5a5a5a;"></div>
<div class="a" style="left:143.50px;top:1119.80px;width:1324.00px;height:20.50px;background:#424242;"></div>
<div class="a" style="left:130.00px;top:1119.00px;width:13.50px;height:1.00px;background:#8a8a8a;"></div>
<div class="a" style="left:1467.70px;top:1119.00px;width:13.60px;height:1.00px;background:#8a8a8a;"></div>
<div class="a" style="left:251.50px;top:1120.00px;width:1.00px;height:20.60px;background:#5c5c5c;"></div>
<div class="a t" style="top:1126.84px;font-size:11.8px;color:#8c8c8c;left:255.00px;transform:scaleX(0.9312);transform-origin:0 50%;">18:00</div>
<div class="a" style="left:417.10px;top:1120.00px;width:1.00px;height:20.60px;background:#5c5c5c;"></div>
<div class="a t" style="top:1126.84px;font-size:11.8px;color:#8c8c8c;left:420.60px;transform:scaleX(0.9280);transform-origin:0 50%;">5 Feb</div>
<div class="a" style="left:582.80px;top:1120.00px;width:1.00px;height:20.60px;background:#5c5c5c;"></div>
<div class="a t" style="top:1126.84px;font-size:11.8px;color:#8c8c8c;left:586.30px;transform:scaleX(0.9312);transform-origin:0 50%;">06:00</div>
<div class="a" style="left:748.10px;top:1120.00px;width:1.00px;height:20.60px;background:#5c5c5c;"></div>
<div class="a t" style="top:1126.84px;font-size:11.8px;color:#8c8c8c;left:751.60px;transform:scaleX(0.9312);transform-origin:0 50%;">12:00</div>
<div class="a" style="left:913.80px;top:1120.00px;width:1.00px;height:20.60px;background:#5c5c5c;"></div>
<div class="a t" style="top:1126.84px;font-size:11.8px;color:#8c8c8c;left:917.30px;transform:scaleX(0.9312);transform-origin:0 50%;">18:00</div>
<div class="a" style="left:1079.30px;top:1120.00px;width:1.00px;height:20.60px;background:#5c5c5c;"></div>
<div class="a t" style="top:1126.84px;font-size:11.8px;color:#8c8c8c;left:1082.80px;transform:scaleX(0.9280);transform-origin:0 50%;">6 Feb</div>
<div class="a" style="left:1244.90px;top:1120.00px;width:1.00px;height:20.60px;background:#5c5c5c;"></div>
<div class="a t" style="top:1126.84px;font-size:11.8px;color:#8c8c8c;left:1248.40px;transform:scaleX(0.9312);transform-origin:0 50%;">06:00</div>
<div class="a" style="left:1410.50px;top:1120.00px;width:1.00px;height:20.60px;background:#5c5c5c;"></div>
<div class="a t" style="top:1126.84px;font-size:11.8px;color:#8c8c8c;left:1414.00px;transform:scaleX(0.9312);transform-origin:0 50%;">12:00</div>
<div class="a" style="left:142.30px;top:1119.00px;width:1.00px;height:22.00px;background:#8a8a8a;"></div>
<div class="a" style="left:138.60px;top:1123.00px;width:8.40px;height:12.60px;background:#4a4a4a;border-radius:1.5px;border:1px solid #9a9a9a;box-sizing:border-box;"></div>
<div class="a" style="left:141.40px;top:1126.00px;width:0.80px;height:7.00px;background:#9a9a9a;"></div>
<div class="a" style="left:143.40px;top:1126.00px;width:0.80px;height:7.00px;background:#9a9a9a;"></div>
<div class="a" style="left:1467.20px;top:1119.00px;width:1.00px;height:22.00px;background:#8a8a8a;"></div>
<div class="a" style="left:1463.50px;top:1123.00px;width:8.40px;height:12.60px;background:#4a4a4a;border-radius:1.5px;border:1px solid #9a9a9a;box-sizing:border-box;"></div>
<div class="a" style="left:1466.30px;top:1126.00px;width:0.80px;height:7.00px;background:#9a9a9a;"></div>
<div class="a" style="left:1468.30px;top:1126.00px;width:0.80px;height:7.00px;background:#9a9a9a;"></div>
<div class="a" style="left:130.00px;top:1140.30px;width:1351.30px;height:12.40px;background:#757575;"></div>
<div class="a" style="left:130.00px;top:1140.30px;width:13.30px;height:12.40px;background:#6c6c6c;"></div>
<div class="a" style="left:1467.90px;top:1140.30px;width:13.40px;height:12.40px;background:#6c6c6c;"></div>
<div class="a" style="left:143.00px;top:1140.30px;width:1.00px;height:12.40px;background:#5e5e5e;"></div>
<div class="a" style="left:1467.20px;top:1140.30px;width:1.00px;height:12.40px;background:#5e5e5e;"></div>
<svg class="a" style="left:133.5px;top:1143.700px" width="6" height="6" viewBox="0 0 6 6"><path d="M4.500 0.300v5.400L1 3z" fill="#e0e0e0"/></svg>
<svg class="a" style="left:1472px;top:1143.700px" width="6" height="6" viewBox="0 0 6 6"><path d="M1.500 0.300v5.400L5 3z" fill="#e0e0e0"/></svg>
<div class="a" style="left:802.25px;top:1144.00px;width:0.90px;height:5.60px;background:#e8e8e8;"></div>
<div class="a" style="left:804.85px;top:1144.00px;width:0.90px;height:5.60px;background:#e8e8e8;"></div>
<div class="a" style="left:807.45px;top:1144.00px;width:0.90px;height:5.60px;background:#e8e8e8;"></div>
<div class="a t" style="top:92.23px;font-size:11.6px;color:#d2d2d2;letter-spacing:1.6px;left:1544.40px;transform:scaleX(0.9093);transform-origin:0 50%;">DATA SOURCES</div>
<svg class="a" style="left:1846.80px;top:91.10px;" width="14" height="14" viewBox="0 0 24 24" fill="#e6e6e6"><path d="M19 6.41L17.59 5 12 10.59 6.41 5 5 6.41 10.59 12 5 17.59 6.41 19 12 13.41 17.59 19 19 17.59 13.41 12z"/></svg>
<div class="a" style="left:1528.60px;top:128.30px;width:352.40px;height:1.00px;background:#2e2e2e;"></div>
<div class="a" style="left:1544.20px;top:145.00px;width:63.20px;height:26.70px;background:#3d3d3d;border-radius:4px;"></div>
<div class="a t" style="top:152.25px;font-size:13.2px;color:#fff;font-weight:700;left:1275.80px;width:600px;text-align:center;transform:scaleX(0.9338);transform-origin:50% 50%;">Assets</div>
<div class="a t" style="top:152.25px;font-size:13.2px;color:#ececec;font-weight:700;left:1630.20px;transform:scaleX(0.9526);transform-origin:0 50%;">Data Streams</div>
<div class="a" style="left:1528.60px;top:186.50px;width:352.40px;height:1.00px;background:#2e2e2e;"></div>
<div class="a t" style="top:198.93px;font-size:11.4px;color:#e2e2e2;font-weight:700;letter-spacing:1.3px;left:1544.40px;transform:scaleX(0.9559);transform-origin:0 50%;">DATA SCOPE</div>
<svg class="a" style="left:1631.45px;top:197.65px;" width="13.5" height="13.5" viewBox="0 0 24 24" fill="#ddd"><path d="M16.59 8.59L12 13.17 7.41 8.59 6 10l6 6 6-6z"/></svg>
<div class="a t" style="top:234.03px;font-size:11.2px;color:#d0d0d0;letter-spacing:1.3px;left:1548.30px;transform:scaleX(0.9409);transform-origin:0 50%;">ASSETS SCOPE</div>
<div class="a" style="left:1544.20px;top:252.60px;width:321.60px;height:34.00px;background:#404040;border-radius:3.5px;"></div>
<div class="a t" style="top:264.15px;font-size:13.4px;color:#f0f0f0;left:1554.60px;transform:scaleX(0.9851);transform-origin:0 50%;">All Assets</div>
<svg class="a" style="left:1838.10px;top:260.50px;" width="19" height="19" viewBox="0 0 24 24" fill="#d8d8d8"><path d="M7 10l5 5 5-5z"/></svg>
<div class="a" style="left:1528.60px;top:310.00px;width:352.40px;height:1.00px;background:#2e2e2e;"></div>
<div class="a t" style="top:321.83px;font-size:11.4px;color:#e2e2e2;font-weight:700;letter-spacing:1.3px;left:1544.40px;transform:scaleX(0.9324);transform-origin:0 50%;">ASSETS SLOTS</div>
<svg class="a" style="left:1644.85px;top:320.25px;" width="13.5" height="13.5" viewBox="0 0 24 24" fill="#ddd"><path d="M16.59 8.59L12 13.17 7.41 8.59 6 10l6 6 6-6z"/></svg>
<div class="a" style="left:1544.20px;top:352.30px;width:38.30px;height:19.40px;background:#777;border-radius:3.5px;"></div>
<div class="a" style="left:1545.60px;top:353.60px;width:15.80px;height:16.80px;background:#fff;border-radius:2.5px;"></div>
<svg class="a" style="left:1548.15px;top:356.75px;" width="10.5" height="10.5" viewBox="0 0 24 24" fill="#777"><path d="M9 16.17L4.83 12l-1.42 1.41L9 19 21 7l-1.410-1.410z"/></svg>
<div class="a t" style="top:355.75px;font-size:13.4px;color:#f0f0f0;left:1590.60px;transform:scaleX(0.9874);transform-origin:0 50%;">Multi Asset Visualization</div>
<div class="a t" style="top:392.63px;font-size:11.2px;color:#d0d0d0;letter-spacing:1.3px;left:1548.30px;transform:scaleX(0.9030);transform-origin:0 50%;">ASSET</div>
<div class="a" style="left:1544.20px;top:411.00px;width:321.60px;height:34.00px;background:#404040;border-radius:3.5px;"></div>
<div class="a t" style="top:422.75px;font-size:13.4px;color:#f0f0f0;left:1554.60px;transform:scaleX(0.9654);transform-origin:0 50%;">Beam Pump #01</div>
<svg class="a" style="left:1838.10px;top:419.10px;" width="19" height="19" viewBox="0 0 24 24" fill="#d8d8d8"><path d="M7 10l5 5 5-5z"/></svg>
<div class="a" style="left:1528.60px;top:467.30px;width:352.40px;height:1.00px;background:#2e2e2e;"></div>
<div class="a" style="left:1626.00px;top:67.00px;width:188.20px;height:58.80px;background:#2a2a2a;border-radius:4.5px;border:1px solid #3d3d3d;box-sizing:border-box;"></div>
<div class="a t" style="top:90.06px;font-size:13.8px;color:#cfcfcf;left:1642.70px;transform:scaleX(0.9541);transform-origin:0 50%;">Mode:</div>
<div class="a" style="left:1699.00px;top:82.50px;width:98.60px;height:27.10px;background:#262626;border-radius:3.5px;border:1px solid #3e3e3e;box-sizing:border-box;"></div>
<div class="a" style="left:1748.20px;top:82.50px;width:49.40px;height:27.10px;background:#3d3d3d;border-radius:3.5px;border:1.2px solid #d6d6d6;box-sizing:border-box;"></div>
<div class="a t" style="top:90.74px;font-size:11.8px;color:#d0d0d0;left:1423.60px;width:600px;text-align:center;transform:scaleX(0.9963);transform-origin:50% 50%;">Light</div>
<div class="a t" style="top:90.74px;font-size:11.8px;color:#f2f2f2;left:1472.80px;width:600px;text-align:center;transform:scaleX(0.9630);transform-origin:50% 50%;">Dark</div>
</body></html>
